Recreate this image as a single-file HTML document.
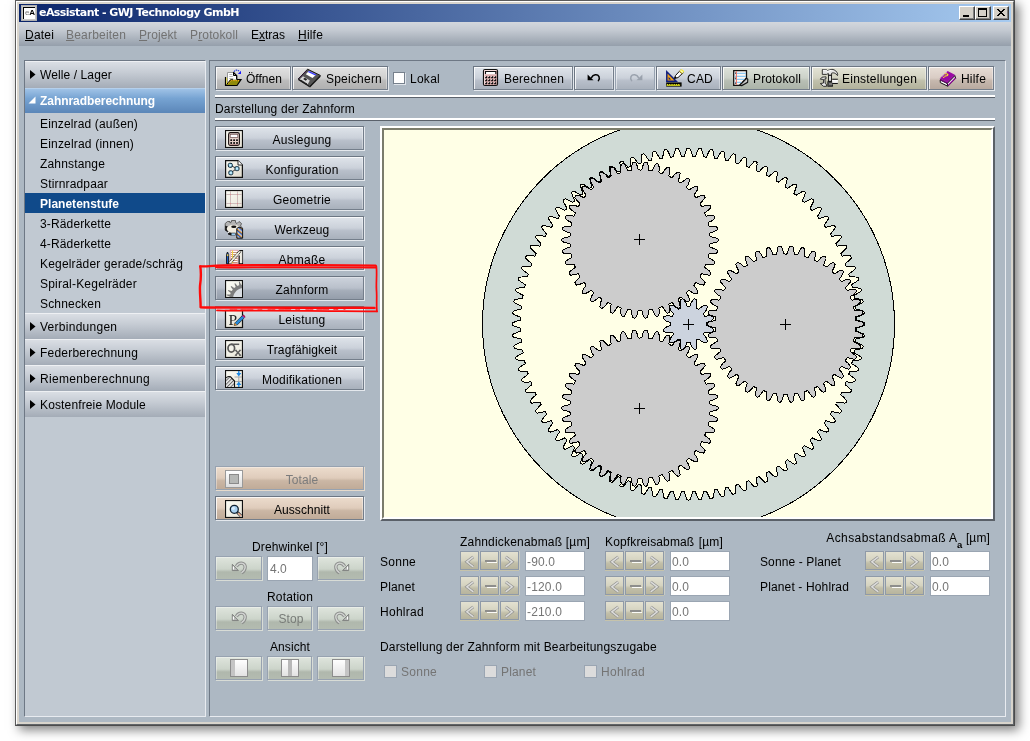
<!DOCTYPE html>
<html lang="de"><head><meta charset="utf-8"><title>eAssistant - GWJ Technology GmbH</title>
<style>
*{box-sizing:border-box;margin:0;padding:0}
html,body{width:1030px;height:741px;overflow:hidden;background:#fff}
#root{position:absolute;left:0;top:0;width:1030px;height:741px;will-change:transform}
body{position:relative;font-family:"Liberation Sans",Arial,sans-serif;font-size:12px;color:#000;line-height:14px;}
.a{position:absolute}
.t{position:absolute;white-space:nowrap;line-height:14px;height:14px}
.dis{color:#727272}
.b{position:absolute;border:1px solid;border-color:#6c7683 #747e8b #747e8b #6c7683;box-shadow:1px 1px 0 #e4e8ed, inset 1px 1px 0 rgba(255,255,255,.8), inset -1px 0 0 rgba(255,255,255,.35)}
.bd{border-color:#97a2b0;box-shadow:1px 1px 0 #d8dcd6, inset 1px 1px 0 rgba(255,255,255,.35)}
.bd.g-blue{box-shadow:1px 1px 0 #dfe4ea, inset 1px 1px 0 rgba(255,255,255,.5)}
.bd.g-beige{box-shadow:1px 1px 0 #e6dacb, inset 1px 1px 0 rgba(255,255,255,.35)}
.g-gray{background:linear-gradient(#e2e2e2,#d0d0d0 50%,#bcbcbc 62%,#b0b0b0)}
.g-blue{background:linear-gradient(#dfe4ea,#cbd1da 50%,#b8bfca 62%,#a9b1bc)}
.g-bluesel{background:linear-gradient(#cdd3dc,#b9c0cb 50%,#a5adb9 62%,#959eab);box-shadow:1px 1px 0 #e4e8ed, inset 1px 1px 0 rgba(255,255,255,.35)}
.g-green{background:linear-gradient(#dfe5dd,#ccd4ca 55%,#b0b8ad 68%,#b3bbb0)}
.g-green2{background:linear-gradient(#dde2da,#ccd2c9 50%,#b8bfb5 62%,#abb3a8)}
.g-yellow{background:linear-gradient(#e3e3d6,#d3d3c2 50%,#c0c0ac 62%,#b2b29b)}
.g-pink{background:linear-gradient(#e7ddd6,#d9ccc4 50%,#c6b8ae 62%,#b8a99f)}
.g-beige{background:linear-gradient(#ecdccd,#dfccbb 50%,#cbb7a5 62%,#c0ab98)}
.g-khaki{background:linear-gradient(#e3e1d1,#d5d3c0 50%,#c2bfa9 65%,#b7b49d)}
.hdr{position:absolute;left:25px;width:180px;height:26px;background:linear-gradient(#dadee4,#c6ccd4 40%,#a4acb7);border-top:1px solid #eef0f3;}
.hdrsel{background:linear-gradient(#9fc2e6,#76a3d2 40%,#5b86b8);border-top:1px solid #b5d0ec;color:#fff;font-weight:bold}
.fld{position:absolute;background:#fff;border:1px solid #9aa5b2;color:#757575;padding:3px 0 0 1px;line-height:14px}
.cb{position:absolute;width:12px;height:12px;background:#fff;border:1px solid #76808c;box-shadow:1px 1px 0 #dfe4ea}
.cbd{position:absolute;width:13px;height:13px;background:#dcdcdc;border:1px solid #9aa5b2}
u{text-decoration:underline;text-underline-offset:1px}
</style></head>
<body>
<div id="root">
<div class="a" style="left:15px;top:0;width:1000px;height:726px;background:#d8d4cc;box-shadow:4px 4px 10px rgba(0,0,0,.5)"></div>
<div class="a" style="left:15px;top:0;width:1000px;height:726px;border:1px solid;border-color:#5a5a5a #4c4c4c #4c4c4c #5a5a5a"></div>
<div class="a" style="left:16px;top:1px;width:998px;height:724px;border:1px solid;border-color:#fff #606468 #606468 #fff"></div>
<div class="a" style="left:19px;top:4px;width:992px;height:18px;background:linear-gradient(90deg,#0a246a,#a6caf0)"></div>
<div class="a" style="left:21px;top:5px;width:16px;height:16px;background:#c8c8c8;border:1px solid #b0b0b0"></div>
<div class="a" style="left:23px;top:7px;width:12px;height:12px;background:#fff;border-left:1px solid #000;border-top:1px solid #000"></div>
<div class="t" style="left:25px;top:7px;font-size:8px;line-height:11px;font-weight:bold;letter-spacing:-0.3px"><span style="color:#777;font-weight:normal">e</span>A</div>
<div class="t" style="left:39px;top:6px;font-family:'DejaVu Sans','Liberation Sans',sans-serif;font-weight:bold;font-size:11px;color:#fff;letter-spacing:-0.55px">eAssistant - GWJ Technology GmbH</div>
<div class="a" style="left:959px;top:6px;width:16px;height:14px;background:#d4d0c8;border:1px solid;border-color:#fff #404040 #404040 #fff;box-shadow:inset -1px -1px 0 #808080"><div class="a" style="left:3px;top:8px;width:6px;height:2px;background:#000"></div></div>
<div class="a" style="left:975px;top:6px;width:16px;height:14px;background:#d4d0c8;border:1px solid;border-color:#fff #404040 #404040 #fff;box-shadow:inset -1px -1px 0 #808080"><div class="a" style="left:2px;top:1px;width:9px;height:9px;border:1px solid #000;border-top-width:2px"></div></div>
<div class="a" style="left:993px;top:6px;width:16px;height:14px;background:#d4d0c8;border:1px solid;border-color:#fff #404040 #404040 #fff;box-shadow:inset -1px -1px 0 #808080"><svg class="a" style="left:3px;top:2px" width="8" height="7"><path d="M0 0L7 7M1 0L8 7M7 0L0 7M8 0L1 7" stroke="#000" stroke-width="1" shape-rendering="crispEdges" fill="none"/></svg></div>
<div class="a" style="left:19px;top:22px;width:992px;height:700px;background:#adb8c3"></div>
<div class="a" style="left:19px;top:22px;width:992px;height:24px;background:linear-gradient(#d3d7dd,#c3c9d1 35%,#959fab)"></div>
<div class="t " style="left:25px;top:28px;letter-spacing:0.20px;"><u>D</u>atei</div>
<div class="t dis" style="left:66px;top:28px;letter-spacing:0.20px;color:#727272"><u>B</u>earbeiten</div>
<div class="t dis" style="left:139px;top:28px;letter-spacing:0.09px;color:#727272"><u>P</u>rojekt</div>
<div class="t dis" style="left:190px;top:28px;letter-spacing:0.15px;color:#727272">P<u>r</u>otokoll</div>
<div class="t " style="left:251px;top:28px;letter-spacing:-0.00px;">E<u>x</u>tras</div>
<div class="t " style="left:298px;top:28px;letter-spacing:0.20px;"><u>H</u>ilfe</div>
<div class="a" style="left:24px;top:60px;width:182px;height:657px;background:#c1c9d2;border:1px solid;border-color:#6e7885 #e8ebf0 #e8ebf0 #6e7885"></div>
<div class="hdr " style="top:61px;height:27px"></div>
<svg class="a" style="left:30px;top:70px" width="6" height="10"><path d="M0 0L5.5 4.5L0 9Z" fill="#000"/></svg>
<div class="t " style="left:40px;top:68px;letter-spacing:0.10px;">Welle / Lager</div>
<div class="hdr hdrsel" style="top:88px;height:25px"></div>
<svg class="a" style="left:28px;top:96px" width="8" height="8"><path d="M7.5 0.5V7.5H0.5Z" fill="#fff"/></svg>
<div class="t " style="left:40px;top:94px;letter-spacing:-0.06px;color:#fff;font-weight:bold">Zahnradberechnung</div>
<div class="t " style="left:40px;top:117px;letter-spacing:0.15px;">Einzelrad (außen)</div>
<div class="t " style="left:40px;top:137px;letter-spacing:0.19px;">Einzelrad (innen)</div>
<div class="t " style="left:40px;top:157px;letter-spacing:0.16px;">Zahnstange</div>
<div class="t " style="left:40px;top:177px;letter-spacing:0.16px;">Stirnradpaar</div>
<div class="a" style="left:25px;top:193px;width:180px;height:20px;background:#104a8a"></div>
<div class="t " style="left:40px;top:197px;letter-spacing:0.02px;color:#fff;font-weight:bold">Planetenstufe</div>
<div class="t " style="left:40px;top:217px;letter-spacing:0.14px;">3-Räderkette</div>
<div class="t " style="left:40px;top:237px;letter-spacing:0.14px;">4-Räderkette</div>
<div class="t " style="left:40px;top:257px;letter-spacing:0.18px;">Kegelräder gerade/schräg</div>
<div class="t " style="left:40px;top:277px;letter-spacing:0.21px;">Spiral-Kegelräder</div>
<div class="t " style="left:40px;top:297px;letter-spacing:0.18px;">Schnecken</div>
<div class="hdr " style="top:313px;height:26px"></div>
<svg class="a" style="left:30px;top:322px" width="6" height="10"><path d="M0 0L5.5 4.5L0 9Z" fill="#000"/></svg>
<div class="t " style="left:40px;top:320px;letter-spacing:0.27px;">Verbindungen</div>
<div class="hdr " style="top:339px;height:26px"></div>
<svg class="a" style="left:30px;top:348px" width="6" height="10"><path d="M0 0L5.5 4.5L0 9Z" fill="#000"/></svg>
<div class="t " style="left:40px;top:346px;letter-spacing:0.22px;">Federberechnung</div>
<div class="hdr " style="top:365px;height:26px"></div>
<svg class="a" style="left:30px;top:374px" width="6" height="10"><path d="M0 0L5.5 4.5L0 9Z" fill="#000"/></svg>
<div class="t " style="left:40px;top:372px;letter-spacing:0.33px;">Riemenberechnung</div>
<div class="hdr " style="top:391px;height:26px"></div>
<svg class="a" style="left:30px;top:400px" width="6" height="10"><path d="M0 0L5.5 4.5L0 9Z" fill="#000"/></svg>
<div class="t " style="left:40px;top:398px;letter-spacing:0.14px;">Kostenfreie Module</div>
<div class="a" style="left:209px;top:60px;width:797px;height:657px;border:1px solid;border-color:#6e7885 #e8ebf0 #e8ebf0 #6e7885"></div>
<div class="b g-gray" style="left:215px;top:66px;width:76px;height:24px;"></div>
<svg class="a" style="left:221px;top:66px" width="24" height="24" viewBox="0 0 24 24"><path d="M6.5 6.500H12.500L15.500 9.500V13.500H9.500L6.500 17z" fill="#fff"/><path d="M6.500 17V6.500H12.300" fill="none" stroke="#9a9a9a" stroke-width="1"/><path d="M8.300 8.500h3M8.300 10.500h3.500M8.300 12.500h4" stroke="#b8b8b8" stroke-width="1"/><path d="M12.300 6.300L15.700 9.700V13.300" fill="none" stroke="#000" stroke-width="1.300"/><path d="M12.500 6.500V9.500H15.500" fill="none" stroke="#000" stroke-width="1"/><path d="M5 19.300L9.300 13.800H20L16 19.300z" fill="#8f8a0a"/><path d="M4.500 11V19.500H16L20 13.600H15.500" fill="none" stroke="#000" stroke-width="1.200"/><path d="M5.600 11.800V18.600" stroke="#e0d44a" stroke-width="1.100"/><path d="M5.600 18.600L9.500 13.800H12" fill="none" stroke="#000" stroke-width="1"/><path d="M7 17.600L10.200 14.600H19" fill="none" stroke="#ffb020" stroke-width="1" stroke-dasharray="1.200 1"/><path d="M13 5.800C14.300 3.600 17 3.600 18.300 5.600" fill="none" stroke="#2038d8" stroke-width="1.100" stroke-dasharray="1.500 .7"/><path d="M20 4.800V8H16.800z" fill="#1a1aff"/></svg>
<div class="t " style="left:246px;top:72px;letter-spacing:-0.00px;">Öffnen</div>
<div class="b g-gray" style="left:292px;top:66px;width:96px;height:24px;"></div>
<svg class="a" style="left:295px;top:66px" width="30" height="24" viewBox="0 0 30 24"><path d="M3.200 13L12.600 3.200L25.300 9.400L14.600 20.400z" fill="#555" stroke="#1a1a1a" stroke-width="1"/><path d="M14.600 20.400L25.300 9.400L25.600 10.800L15 21.500z" fill="#111"/><path d="M3.200 13L14.600 20.400L15 21.500L3.400 14.200z" fill="#111"/><path d="M13.900 4.900L21.400 8.500L17.500 12L10.800 8.300z" fill="#fff"/><path d="M13.900 4.900L21.400 8.500L20.300 9.500L12.900 5.900z" fill="#3a3aff"/><path d="M4.800 13.200L8 10.200L14.800 14.500L12.800 18.300z" fill="#d8d8d8"/><path d="M8.200 13L9.800 11.800L12.200 13.300L10.800 14.800z" fill="#222"/><path d="M6.300 14.300l6 3.800" stroke="#111" stroke-width="1" stroke-dasharray="1.500 1"/><path d="M4 12.500L12.400 4" stroke="#501060" stroke-width=".8" stroke-dasharray="1 1"/></svg>
<div class="t " style="left:326px;top:72px;letter-spacing:0.22px;">Speichern</div>
<div class="cb" style="left:393px;top:72px"></div>
<div class="t " style="left:410px;top:72px;letter-spacing:0.26px;">Lokal</div>
<div class="b g-blue" style="left:473px;top:66px;width:100px;height:24px;"></div>
<svg class="a" style="left:479px;top:66px" width="24" height="24" viewBox="0 0 24 24"><rect x="4.500" y="3.500" width="14" height="16" rx="1.500" fill="#dcaeae" stroke="#111" stroke-width="1.200"/><path d="M5.500 18.500V4.500H17.500" fill="none" stroke="#f4dada" stroke-width="1"/><rect x="6.500" y="5.500" width="10" height="2.800" fill="#fff"/><path d="M6.500 8V5.500H16.800V8" fill="none" stroke="#111" stroke-width="1.100"/><rect x="6.2" y="10.2" width="2" height="2" rx=".5" fill="#0a0a0a"/><rect x="6.0" y="10.0" width=".9" height=".9" fill="#f4e4e4"/><rect x="9.2" y="10.2" width="2" height="2" rx=".5" fill="#0a0a0a"/><rect x="9.0" y="10.0" width=".9" height=".9" fill="#f4e4e4"/><rect x="12.2" y="10.2" width="2" height="2" rx=".5" fill="#0a0a0a"/><rect x="12.0" y="10.0" width=".9" height=".9" fill="#f4e4e4"/><rect x="15.2" y="10.2" width="2" height="2" rx=".5" fill="#0a0a0a"/><rect x="15.0" y="10.0" width=".9" height=".9" fill="#f4e4e4"/><rect x="6.2" y="13.2" width="2" height="2" rx=".5" fill="#0a0a0a"/><rect x="6.0" y="13.0" width=".9" height=".9" fill="#f4e4e4"/><rect x="9.2" y="13.2" width="2" height="2" rx=".5" fill="#0a0a0a"/><rect x="9.0" y="13.0" width=".9" height=".9" fill="#f4e4e4"/><rect x="12.2" y="13.2" width="2" height="2" rx=".5" fill="#0a0a0a"/><rect x="12.0" y="13.0" width=".9" height=".9" fill="#f4e4e4"/><rect x="15.2" y="13.2" width="2" height="2" rx=".5" fill="#0a0a0a"/><rect x="15.0" y="13.0" width=".9" height=".9" fill="#f4e4e4"/><rect x="6.2" y="16.2" width="2" height="2" rx=".5" fill="#0a0a0a"/><rect x="6.0" y="16.0" width=".9" height=".9" fill="#f4e4e4"/><rect x="9.2" y="16.2" width="2" height="2" rx=".5" fill="#0a0a0a"/><rect x="9.0" y="16.0" width=".9" height=".9" fill="#f4e4e4"/><rect x="12.2" y="16.2" width="2" height="2" rx=".5" fill="#0a0a0a"/><rect x="12.0" y="16.0" width=".9" height=".9" fill="#f4e4e4"/><rect x="15.2" y="16.2" width="2" height="2" rx=".5" fill="#0a0a0a"/><rect x="15.0" y="16.0" width=".9" height=".9" fill="#f4e4e4"/></svg>
<div class="t " style="left:504px;top:72px;letter-spacing:0.22px;">Berechnen</div>
<div class="b g-blue" style="left:574px;top:66px;width:40px;height:24px;"></div>
<svg class="a" style="left:587px;top:73px" width="14" height="10" viewBox="0 0 14 10"><g><path d="M4.500 4.600C6 1.400 10.500 .8 12 3.600C12.600 5 12.300 6.400 11.400 7.600" fill="none" stroke="#000" stroke-width="1.500" stroke-linecap="round"/><path d="M.6 1.500L.6 7.200L6.500 7.200z" fill="#000"/></g></svg>
<div class="b g-blue bd" style="left:615px;top:66px;width:40px;height:24px;"></div>
<svg class="a" style="left:629px;top:73px" width="14" height="10" viewBox="0 0 14 10"><g transform="translate(14,0) scale(-1,1)"><path d="M4.500 4.600C6 1.400 10.500 .8 12 3.600C12.600 5 12.300 6.400 11.400 7.600" fill="none" stroke="#9aa2ad" stroke-width="1.500" stroke-linecap="round"/><path d="M.6 1.500L.6 7.200L6.500 7.200z" fill="#9aa2ad"/></g></svg>
<div class="b g-blue" style="left:656px;top:66px;width:65px;height:24px;"></div>
<svg class="a" style="left:662px;top:66px" width="26" height="24" viewBox="0 0 26 24"><path d="M4.800 5.800V15.300H14.200z" fill="#f2a212" stroke="#101f80" stroke-width="1.500" stroke-linejoin="miter"/><path d="M6.600 11V13.500H9.100z" fill="#101f80"/><rect x="4.200" y="16.400" width="15.400" height="4.200" fill="#000"/><path d="M4.600 18.900l.9-1.200.9 1.200.9-1.200.9 1.200.9-1.200.9 1.200.9-1.200.9 1.200.9-1.200.9 1.200.9-1.200.9 1.200.9-1.200.9 1.200.9-1.200V19.800H4.600z" fill="#ffff20"/><path d="M12.300 12.600L13.600 9.400L18.500 4.200L21.300 6.600L16 11.600z" fill="#fff" stroke="#111" stroke-width="1"/><path d="M12.300 12.600L13.200 10.300L14.800 11.700z" fill="#000"/><path d="M17.300 5.500L19.500 3L22.300 5.300L20.100 7.800z" fill="#f4ec30"/><path d="M18.400 4.300L21.200 6.600" stroke="#fff" stroke-width="1"/><path d="M17.300 5.500L20.100 7.800" stroke="#705030" stroke-width=".8"/></svg>
<div class="t " style="left:687px;top:72px;letter-spacing:0.22px;">CAD</div>
<div class="b g-green2" style="left:722px;top:66px;width:88px;height:24px;"></div>
<svg class="a" style="left:729px;top:66px" width="24" height="24" viewBox="0 0 24 24"><path d="M4.700 4.700H17.500V12L10.700 19.300H4.700z" fill="#fbf7f4" stroke="#111" stroke-width="1.300"/><path d="M5.500 7.400H17M5.500 10.400H17M5.500 13.400H15.500M5.500 16.400H12.500" stroke="#8cc8f2" stroke-width="1.100"/><path d="M7.400 5.300V18.700" stroke="#f07868" stroke-width="1.100"/><path d="M6.500 6.600v1M6.500 11.700v1M6.500 16.700v1" stroke="#222" stroke-width="1"/><path d="M10.700 19.300L17.600 12.300L18.800 13.200L18.600 16.300L12.800 19.600z" fill="#c8c8c8" stroke="#111" stroke-width="1.100"/></svg>
<div class="t " style="left:753px;top:72px;letter-spacing:0.15px;">Protokoll</div>
<div class="b g-yellow" style="left:811px;top:66px;width:116px;height:24px;"></div>
<svg class="a" style="left:817px;top:66px" width="26" height="24" viewBox="0 0 26 24"><path d="M5.300 3.600H9L10.500 4.500L15 3.300C18 3.600 20 5.500 20.700 8.200L20.500 9.600L18.800 7.800C17.500 6.800 16 6.600 14.600 7.200V9.300H11.400V7.500L9.500 8.400H5.300z" fill="#e4e4e4" stroke="#222" stroke-width=".9"/><path d="M6 4.300H8.800L10.400 5.300L14.500 4.300" fill="none" stroke="#fff" stroke-width="1"/><rect x="11.600" y="9.300" width="2.800" height="6" fill="#f4f4f4" stroke="#111" stroke-width="1"/><rect x="10.400" y="15.300" width="5.500" height="5.400" fill="#111"/><path d="M11.500 16.500h1v1h-1zM13.500 16.500h1v1h-1zM12.500 17.500h1v1h-1zM11.500 18.500h1v1h-1zM13.500 18.500h1v1h-1zM14.500 17.500h1v1h-1z" fill="#ddd"/><path d="M3.300 13.200L5 11.200L9 10.800V12.800H7.800L8.200 17.500L9.400 18.300L9.600 20.300H6.500L3.300 17.600L6.500 17V13.400z" fill="#e8e8e8" stroke="#222" stroke-width=".9"/><rect x="15.200" y="13.200" width="5.600" height="4.300" fill="#e8e8e8"/><path d="M15.200 14.800h5.600" stroke="#fff" stroke-width="1.400"/><path d="M15.200 13.200h5.600M15.200 17.500h5.600" stroke="#111" stroke-width="1.100"/></svg>
<div class="t " style="left:842px;top:72px;letter-spacing:0.23px;">Einstellungen</div>
<div class="b g-pink" style="left:928px;top:66px;width:66px;height:24px;"></div>
<svg class="a" style="left:936px;top:66px" width="24" height="24" viewBox="0 0 24 24"><path d="M4.200 14L11.300 17.500L11.700 20.200L4.300 16.600z" fill="#fff" stroke="#111" stroke-width="1"/><path d="M11.300 17.300L18.800 9.600L19.700 12.400L11.900 20.200z" fill="#e8ece8" stroke="#111" stroke-width="1"/><path d="M11.800 19.700L19.400 12" stroke="#a010a8" stroke-width="1.100"/><path d="M3.900 12.300L11.700 4.900L18.800 8.700L11.300 16.200z" fill="#9a0aa4"/><path d="M3.900 12.300L4 14.200L11.300 17.600L18.900 9.800L18.800 8.700L11.300 16.200z" fill="#70057a"/><path d="M4.500 12.100L11.500 5.500" stroke="#d8b8dc" stroke-width="1" stroke-dasharray="1 1"/><text x="10.200" y="13.600" font-family="Liberation Sans" font-weight="bold" font-size="8" fill="#f8f020" transform="rotate(22 12 11) skewX(-18)">?</text></svg>
<div class="t " style="left:961px;top:72px;letter-spacing:0.20px;">Hilfe</div>
<div class="a" style="left:215px;top:95px;width:780px;height:2px;background:#fff"></div>
<div class="a" style="left:215px;top:97px;width:780px;height:1px;background:#5b626c"></div>
<div class="t " style="left:215px;top:102px;letter-spacing:0.16px;">Darstellung der Zahnform</div>
<div class="a" style="left:215px;top:118px;width:780px;height:2px;background:#fff"></div>
<div class="a" style="left:215px;top:120px;width:780px;height:1px;background:#5b626c"></div>
<div class="b g-blue" style="left:215px;top:126px;width:149px;height:24px;"></div>
<svg class="a" style="left:225px;top:130px" width="18" height="18" viewBox="0 0 18 18"><defs><linearGradient id="bg225_130" x1="0" y1="0" x2="1" y2="1"><stop offset="0" stop-color="#fbfbf4"/><stop offset="1" stop-color="#e4e0d4"/></linearGradient></defs><rect x=".5" y=".5" width="17" height="17" fill="url(#bg225_130)" stroke="#111" stroke-width="1.200"/><rect x="3.600" y="2.600" width="10.800" height="12.800" rx="1.800" fill="#e4cfc8" stroke="#1a1010" stroke-width="1.100"/><rect x="5.200" y="4.300" width="7.600" height="3.200" fill="#fff" stroke="#6a4a4a" stroke-width=".7"/><rect x="5.3" y="9.2" width="1.800" height="1.800" rx=".6" fill="#0a0a0a"/><rect x="8.2" y="9.2" width="1.800" height="1.800" rx=".6" fill="#0a0a0a"/><rect x="11.1" y="9.2" width="1.800" height="1.800" rx=".6" fill="#0a0a0a"/><rect x="5.3" y="12.1" width="1.800" height="1.800" rx=".6" fill="#0a0a0a"/><rect x="8.2" y="12.1" width="1.800" height="1.800" rx=".6" fill="#0a0a0a"/><rect x="11.1" y="12.1" width="1.800" height="1.800" rx=".6" fill="#0a0a0a"/><path d="M4.600 14.600h8.800" stroke="#c09090" stroke-width=".8"/></svg>
<div class="t " style="left:202px;width:200px;text-align:center;top:133px;letter-spacing:0.25px;">Auslegung</div>
<div class="b g-blue" style="left:215px;top:156px;width:149px;height:24px;"></div>
<svg class="a" style="left:225px;top:160px" width="18" height="18" viewBox="0 0 18 18"><defs><linearGradient id="kg" x1="0" y1="0" x2="1" y2="1"><stop offset="0" stop-color="#fbfbf4"/><stop offset="1" stop-color="#dedacd"/></linearGradient></defs><path d="M.6 .6H13L17.400 5V17.400H.6z" fill="url(#kg)" stroke="#111" stroke-width="1.200"/><path d="M13 .6V5H17.400" fill="#fff" stroke="#111" stroke-width=".9"/><path d="M5.300 5.300L12 8.600L5.800 12.600" fill="none" stroke="#222" stroke-width=".9"/><rect x="3.3" y="3.3" width="4" height="4" rx="1.300" fill="#9fdcf4" stroke="#102838" stroke-width="1"/><rect x="4.7" y="4.7" width="1.200" height="1.200" fill="#e8f8ff"/><rect x="10.0" y="6.6" width="4" height="4" rx="1.300" fill="#9fdcf4" stroke="#102838" stroke-width="1"/><rect x="11.4" y="8.0" width="1.200" height="1.200" fill="#e8f8ff"/><rect x="3.8" y="10.8" width="4" height="4" rx="1.300" fill="#9fdcf4" stroke="#102838" stroke-width="1"/><rect x="5.2" y="12.2" width="1.200" height="1.200" fill="#e8f8ff"/></svg>
<div class="t " style="left:202px;width:200px;text-align:center;top:163px;letter-spacing:0.18px;">Konfiguration</div>
<div class="b g-blue" style="left:215px;top:186px;width:149px;height:24px;"></div>
<svg class="a" style="left:225px;top:190px" width="18" height="18" viewBox="0 0 18 18"><defs><linearGradient id="bg225_190" x1="0" y1="0" x2="1" y2="1"><stop offset="0" stop-color="#fbfbf4"/><stop offset="1" stop-color="#e9e5da"/></linearGradient></defs><rect x=".5" y=".5" width="17" height="17" fill="url(#bg225_190)" stroke="#111" stroke-width="1.200"/><path d="M5.500 1V17M12.500 1V17M1 4.500H17M1 13.500H17" stroke="#cdbcbc" stroke-width="1"/><path d="M5 4.500h1M12 4.500h1M5 13.500h1M12 13.500h1" stroke="#e09090" stroke-width="1"/></svg>
<div class="t " style="left:202px;width:200px;text-align:center;top:193px;letter-spacing:0.22px;">Geometrie</div>
<div class="b g-blue" style="left:215px;top:216px;width:149px;height:24px;"></div>
<svg class="a" style="left:222px;top:217px" width="24" height="24" viewBox="0 0 24 24"><path d="M3.200 8.500V6.500L5.500 4.500H8V6L9.500 5V3.500H13.500V5.500L15 6.500L17 4.500L19.500 6.500L18.500 9L20 10.500V13H3.200z" fill="#b4b4b4" stroke="#555" stroke-width=".9"/><path d="M3.200 8.500V13.500L6 15.500V17.500L9 18.500H13.500V13z" fill="#111"/><ellipse cx="11.500" cy="11.800" rx="6.800" ry="4" fill="#f1ede2"/><ellipse cx="11.800" cy="9.800" rx="2.600" ry="1.200" fill="#111"/><rect x="9.500" y="16.300" width="3.500" height="2" fill="#9fcdf0"/><rect x="5.800" y="14.500" width="1.600" height="1.600" fill="#e8e8e8"/><defs><pattern id="wz" width="3.200" height="3.200" patternUnits="userSpaceOnUse" patternTransform="rotate(-50)"><rect width="3.200" height="3.200" fill="#1f4fae"/><rect width="1.100" height="3.200" fill="#f09418"/><rect x="1.100" width=".9" height="3.200" fill="#fff"/></pattern></defs><path d="M14.800 11.500L17 10L20.600 11.500V21.200H14.800z" fill="url(#wz)" stroke="#111" stroke-width="1"/></svg>
<div class="t " style="left:202px;width:200px;text-align:center;top:223px;letter-spacing:0.12px;">Werkzeug</div>
<div class="b g-blue" style="left:215px;top:246px;width:149px;height:24px;"></div>
<svg class="a" style="left:222px;top:246px" width="24" height="24" viewBox="0 0 24 24"><rect x="8.300" y="4.300" width="7.700" height="13.400" fill="#fff" stroke="#e0a0a8" stroke-width=".9"/><path d="M9 6.500h6.500M9 8.500h6.500M9 10.500h6.500M9 12.500h6.500M9 14.500h6.500M9 16.500h6.500" stroke="#b87858" stroke-width=".8"/><path d="M10.500 4.500V17.500" stroke="#f4d040" stroke-width="1.100"/><path d="M17.200 4.500H20.500V17.800H17.200V9.500" fill="#f0eee4" stroke="#111" stroke-width="1.100"/><path d="M19.600 6h1M19.600 8h1M19.600 10h1M19.600 12h1M19.600 14h1M19.600 16h1" stroke="#fff" stroke-width=".9"/><path d="M5.500 17.800L17.200 4.600L19 5.800L8.800 17.800z" fill="#eeeadb" stroke="#111" stroke-width="1" stroke-dasharray="1 .8"/><path d="M4.500 17.800V8.500L5.500 6L6.600 8.500V17.800z" fill="#1c5cc4" stroke="#111" stroke-width=".9"/><path d="M4.900 8.300h1.400v1.800h-1.400z" fill="#f4d050"/></svg>
<div class="t " style="left:202px;width:200px;text-align:center;top:253px;letter-spacing:0.27px;">Abmaße</div>
<div class="b g-bluesel" style="left:215px;top:276px;width:149px;height:24px;"></div>
<svg class="a" style="left:225px;top:280px" width="18" height="18" viewBox="0 0 18 18"><defs><linearGradient id="bg225_280" x1="0" y1="0" x2="1" y2="1"><stop offset="0" stop-color="#fbfbf4"/><stop offset="1" stop-color="#eeeee2"/></linearGradient></defs><rect x=".5" y=".5" width="17" height="17" fill="url(#bg225_280)" stroke="#111" stroke-width="1.200"/><clipPath id="zfc"><rect x="1.100" y="1.100" width="15.800" height="15.800"/></clipPath><g clip-path="url(#zfc)"><circle cx="18.5" cy="18.5" r="12" fill="#d9dde2"/><path d="M4.9 21.4 L4.7 20.5 L1.2 20.1 L1.1 19.3 L4.6 18.5 L4.6 17.5 L4.7 16.6 L1.4 15.3 L1.6 14.5 L5.2 14.6 L5.4 13.7 L5.8 12.9 L2.9 10.7 L3.3 10.0 L6.7 11.1 L7.3 10.3 L7.8 9.6 L5.7 6.7 L6.3 6.1 L9.2 8.1 L9.9 7.5 L10.7 7.0 L9.4 3.6 L10.2 3.2 L12.5 6.0 L13.3 5.6 L14.2 5.3 L13.9 1.7 L14.7 1.5 L16.1 4.8 L17.0 4.7 L18.0 4.6 L18.7 1.1 L19.5 1.1 L20.0 4.7 L20.9 4.8 L21.8 5.0 L23.5 1.8 L24.3 2.1 L23.8 5.6 L23.7 9.5 L22.7 9.0 L21.7 8.6 L20.7 8.3 L19.6 8.2 L18.5 8.1 L17.4 8.2 L16.3 8.3 L15.3 8.6 L14.3 9.0 L13.3 9.5 L12.4 10.1 L11.5 10.8 L10.8 11.5 L10.1 12.4 L9.5 13.3 L9.0 14.3 L8.6 15.3 L8.3 16.3 L8.2 17.4 L8.1 18.5 L8.2 19.6 L8.3 20.7 L8.6 21.7Z" fill="#7d7d7d"/></g></svg>
<div class="t " style="left:202px;width:200px;text-align:center;top:283px;letter-spacing:0.21px;">Zahnform</div>
<div class="b g-blue" style="left:215px;top:306px;width:149px;height:24px;"></div>
<svg class="a" style="left:222px;top:307px" width="24" height="24" viewBox="0 0 24 24"><defs><linearGradient id="lg1" x1="0" y1="0" x2="1" y2="1"><stop offset="0" stop-color="#fbfbf4"/><stop offset="1" stop-color="#dcd8cc"/></linearGradient></defs><rect x="3.500" y="3.500" width="17" height="17" fill="url(#lg1)" stroke="#111" stroke-width="1.200"/><text x="6.600" y="17.800" font-family="Liberation Serif" font-size="15.500" fill="#222">P</text><path d="M12.300 18.400L13 15.800L20.300 8.600L22.600 10.600L15.200 18z" fill="#2488d8" stroke="#111" stroke-width=".9" stroke-dasharray="1.100 .5"/><path d="M12.300 18.400L12.900 16L14.900 17.900z" fill="#f09020"/><path d="M20 8.900L21.300 7.800L23.300 9.600L22.300 10.900z" fill="#c020a0"/><path d="M21 7.800l2.200 1.900" stroke="#a01010" stroke-width="1"/></svg>
<div class="t " style="left:202px;width:200px;text-align:center;top:313px;letter-spacing:0.20px;">Leistung</div>
<div class="b g-blue" style="left:215px;top:336px;width:149px;height:24px;"></div>
<svg class="a" style="left:225px;top:340px" width="18" height="18" viewBox="0 0 18 18"><defs><linearGradient id="bg225_340" x1="0" y1="0" x2="1" y2="1"><stop offset="0" stop-color="#fbfbf4"/><stop offset="1" stop-color="#e6e4d8"/></linearGradient></defs><rect x=".5" y=".5" width="17" height="17" fill="url(#bg225_340)" stroke="#111" stroke-width="1.200"/><ellipse cx="6.300" cy="8.300" rx="3.300" ry="3.900" fill="none" stroke="#585858" stroke-width="1.700"/><path d="M5.800 4.300H14.200" stroke="#585858" stroke-width="1.500"/><path d="M10.600 10.300L15.400 15.300M15.200 10.300L10.600 15.300" stroke="#606060" stroke-width="1.500"/><path d="M9.800 10.300h2.200M14 10.300h2.200M9.800 15.400h2.200M14 15.400h2.200" stroke="#606060" stroke-width=".9"/></svg>
<div class="t " style="left:202px;width:200px;text-align:center;top:343px;letter-spacing:0.13px;">Tragfähigkeit</div>
<div class="b g-blue" style="left:215px;top:366px;width:149px;height:24px;"></div>
<svg class="a" style="left:225px;top:370px" width="18" height="18" viewBox="0 0 18 18"><defs><linearGradient id="bg225_370" x1="0" y1="0" x2="1" y2="1"><stop offset="0" stop-color="#fbfbf4"/><stop offset="1" stop-color="#e8e6da"/></linearGradient></defs><rect x=".5" y=".5" width="17" height="17" fill="url(#bg225_370)" stroke="#111" stroke-width="1.200"/><defs><pattern id="hat" width="2.600" height="2.600" patternUnits="userSpaceOnUse" patternTransform="rotate(-45)"><rect width="2.600" height="2.600" fill="#ececec"/><rect width="2.600" height="1" fill="#6a6a6a"/></pattern></defs><path d="M9.500 7H17M9.500 11.500H17M13.800 6.500V12" stroke="#a8a8a8" stroke-width="1"/><path d="M1 17V8.500C1.800 7 4 6.300 5.500 6.800L9.500 11V17z" fill="url(#hat)"/><path d="M1.200 8C2 6.800 4 6.300 5.500 6.800L9.500 11V17" fill="none" stroke="#111" stroke-width="1.100"/><path d="M13.800 1V4M13.800 15V17" stroke="#1a86e4" stroke-width="1.300"/><path d="M11.300 3h5L13.800 6.500zM11.300 15h5L13.800 11.500z" fill="#1a86e4"/></svg>
<div class="t " style="left:202px;width:200px;text-align:center;top:373px;letter-spacing:0.19px;">Modifikationen</div>
<div class="b g-beige bd" style="left:215px;top:466px;width:149px;height:24px;"></div>
<svg class="a" style="left:225px;top:470px" width="18" height="18" viewBox="0 0 18 18"><defs><linearGradient id="tg" x1="0" y1="0" x2="0" y2="1"><stop offset="0" stop-color="#fff"/><stop offset="1" stop-color="#dcdcdc"/></linearGradient></defs><rect x=".5" y=".5" width="17" height="17" fill="url(#tg)" stroke="#9a9a9a"/><rect x="4.500" y="4.500" width="9" height="9" fill="#b6b8b6" stroke="#8a8a8a"/></svg>
<div class="t " style="left:202px;width:200px;text-align:center;top:473px;letter-spacing:0.11px;color:#7c7c7c">Totale</div>
<div class="b g-beige" style="left:215px;top:496px;width:149px;height:24px;"></div>
<svg class="a" style="left:225px;top:500px" width="18" height="18" viewBox="0 0 18 18"><defs><linearGradient id="bg225_500" x1="0" y1="0" x2="1" y2="1"><stop offset="0" stop-color="#fbfbf4"/><stop offset="1" stop-color="#e8e4d8"/></linearGradient></defs><rect x=".5" y=".5" width="17" height="17" fill="url(#bg225_500)" stroke="#111" stroke-width="1.200"/><circle cx="9.300" cy="9.300" r="4" fill="#a8d0f0" stroke="#102030" stroke-width="1.300"/><circle cx="8.300" cy="8.300" r="1.600" fill="#d8ecfc"/><path d="M12.300 12.300L15.800 15.800" stroke="#102030" stroke-width="3"/><path d="M13 13L15.900 15.900" stroke="#f4c8a8" stroke-width="1.700"/><path d="M13.300 12.800l2.600 2.600" stroke="#e05030" stroke-width=".7" stroke-dasharray=".8 .6"/></svg>
<div class="t " style="left:202px;width:200px;text-align:center;top:503px;letter-spacing:0.06px;">Ausschnitt</div>
<div class="t " style="left:190px;width:200px;text-align:center;top:540px;letter-spacing:0.13px;">Drehwinkel [°]</div>
<div class="t " style="left:190px;width:200px;text-align:center;top:590px;letter-spacing:0.16px;">Rotation</div>
<div class="t " style="left:190px;width:200px;text-align:center;top:640px;letter-spacing:0.09px;">Ansicht</div>
<div class="b g-green bd" style="left:215px;top:556px;width:47px;height:24px;"></div>
<svg class="a" style="left:230px;top:560px" width="18" height="16" viewBox="0 0 18 16"><g><path d="M6.300 6.300C8.200 3.300 11.200 2.500 13.200 3.600C16.300 5.300 15.800 10.300 11.400 12.900" fill="none" stroke="#8c8e8c" stroke-width="3.300"/><path d="M6.300 6.300C8.200 3.300 11.200 2.500 13.200 3.600C16.300 5.300 15.800 10.300 11.400 12.900" fill="none" stroke="#d2d4d2" stroke-width="1.400"/><path d="M2.300 4.300V10.600H8.400z" fill="#b8bab8" stroke="#7e807e" stroke-width="1"/><path d="M3.400 6.500V9.500" stroke="#fff" stroke-width="1.100"/></g></svg>
<div class="b g-green bd" style="left:317px;top:556px;width:47px;height:24px;"></div>
<svg class="a" style="left:333px;top:560px" width="18" height="16" viewBox="0 0 18 16"><g transform="translate(18,0) scale(-1,1)"><path d="M6.300 6.300C8.200 3.300 11.200 2.500 13.200 3.600C16.300 5.300 15.800 10.300 11.400 12.900" fill="none" stroke="#8c8e8c" stroke-width="3.300"/><path d="M6.300 6.300C8.200 3.300 11.200 2.500 13.200 3.600C16.300 5.300 15.800 10.300 11.400 12.900" fill="none" stroke="#d2d4d2" stroke-width="1.400"/><path d="M2.300 4.300V10.600H8.400z" fill="#b8bab8" stroke="#7e807e" stroke-width="1"/><path d="M3.400 6.500V9.500" stroke="#fff" stroke-width="1.100"/></g></svg>
<div class="b g-green bd" style="left:215px;top:606px;width:47px;height:24px;"></div>
<svg class="a" style="left:230px;top:610px" width="18" height="16" viewBox="0 0 18 16"><g><path d="M6.300 6.300C8.200 3.300 11.200 2.500 13.200 3.600C16.300 5.300 15.800 10.300 11.400 12.900" fill="none" stroke="#8c8e8c" stroke-width="3.300"/><path d="M6.300 6.300C8.200 3.300 11.200 2.500 13.200 3.600C16.300 5.300 15.800 10.300 11.400 12.900" fill="none" stroke="#d2d4d2" stroke-width="1.400"/><path d="M2.300 4.300V10.600H8.400z" fill="#b8bab8" stroke="#7e807e" stroke-width="1"/><path d="M3.400 6.500V9.500" stroke="#fff" stroke-width="1.100"/></g></svg>
<div class="b g-green bd" style="left:317px;top:606px;width:47px;height:24px;"></div>
<svg class="a" style="left:333px;top:610px" width="18" height="16" viewBox="0 0 18 16"><g transform="translate(18,0) scale(-1,1)"><path d="M6.300 6.300C8.200 3.300 11.200 2.500 13.200 3.600C16.300 5.300 15.800 10.300 11.400 12.900" fill="none" stroke="#8c8e8c" stroke-width="3.300"/><path d="M6.300 6.300C8.200 3.300 11.200 2.500 13.200 3.600C16.300 5.300 15.800 10.300 11.400 12.900" fill="none" stroke="#d2d4d2" stroke-width="1.400"/><path d="M2.300 4.300V10.600H8.400z" fill="#b8bab8" stroke="#7e807e" stroke-width="1"/><path d="M3.400 6.500V9.500" stroke="#fff" stroke-width="1.100"/></g></svg>
<div class="fld" style="left:267px;top:556px;width:46px;height:25px;padding:5px 0 0 2px">4.0</div>
<div class="b g-green bd" style="left:267px;top:606px;width:45px;height:24px;"></div>
<div class="t " style="left:191px;width:200px;text-align:center;top:612px;letter-spacing:0.08px;color:#787c78">Stop</div>
<div class="b g-green bd" style="left:215px;top:656px;width:47px;height:24px;"></div>
<svg class="a" style="left:230px;top:659px" width="18" height="18" viewBox="0 0 18 18"><defs><linearGradient id="vgl" x1="0" y1="0" x2="0" y2="1"><stop offset="0" stop-color="#fff"/><stop offset="1" stop-color="#e2e2e2"/></linearGradient></defs><rect x=".5" y=".5" width="17" height="17" fill="url(#vgl)" stroke="#8c8c8c"/><rect x="1" y="1" width="4" height="16" fill="#c4c4c4"/></svg>
<div class="b g-green bd" style="left:267px;top:656px;width:45px;height:24px;"></div>
<svg class="a" style="left:281px;top:659px" width="18" height="18" viewBox="0 0 18 18"><defs><linearGradient id="vgm" x1="0" y1="0" x2="0" y2="1"><stop offset="0" stop-color="#fff"/><stop offset="1" stop-color="#e2e2e2"/></linearGradient></defs><rect x=".5" y=".5" width="17" height="17" fill="url(#vgm)" stroke="#8c8c8c"/><rect x="7" y="1" width="4" height="16" fill="#b8b8b8"/></svg>
<div class="b g-green bd" style="left:317px;top:656px;width:47px;height:24px;"></div>
<svg class="a" style="left:332px;top:659px" width="18" height="18" viewBox="0 0 18 18"><defs><linearGradient id="vgr" x1="0" y1="0" x2="0" y2="1"><stop offset="0" stop-color="#fff"/><stop offset="1" stop-color="#e2e2e2"/></linearGradient></defs><rect x=".5" y=".5" width="17" height="17" fill="url(#vgr)" stroke="#8c8c8c"/><rect x="13" y="1" width="4" height="16" fill="#c4c4c4"/></svg>
<div class="a" style="left:380px;top:126px;width:615px;height:395px;background:#fff;border:2px solid;border-color:#fff #5a6068 #5a6068 #fff"></div>
<div class="a" style="left:382px;top:128px;width:611px;height:391px;background:#ffffe6;border:2px solid;border-color:#7b7c6c #fff #fff #7b7c6c"></div>
<svg class="a" style="left:384px;top:130px" width="607" height="387" viewBox="0 0 607 387"><g transform="translate(304.5,194.1)" stroke="#000" stroke-width="1" stroke-linejoin="round" shape-rendering="crispEdges"><circle r="206" fill="#d0dbd6"/><path d="M167.8,-5.3L167.8,-4.8 167.8,-4.4 167.8,-4.2 168.4,-3.9 169.4,-3.6 170.4,-3.3 171.4,-3.0 172.4,-2.7 173.5,-2.3 174.5,-1.9 175.5,-1.5 176.0,-0.7 176.0,0.7 175.5,1.5 174.5,1.9 173.5,2.3 172.4,2.7 171.4,3.0 170.4,3.3 169.4,3.6 168.4,3.9 167.8,4.2 167.8,4.4 167.8,4.8 167.8,5.3 167.8,5.7 167.8,6.2 167.8,6.6 167.8,6.8 168.3,7.1 169.3,7.5 170.3,7.8 171.2,8.2 172.2,8.6 173.2,9.1 174.2,9.5 175.2,10.0 175.7,10.9 175.6,12.2 175.0,13.0 174.0,13.3 172.9,13.6 171.9,13.9 170.9,14.2 169.8,14.5 168.8,14.7 167.7,14.9 167.2,15.1 167.2,15.4 167.2,15.7 167.1,16.2 167.1,16.7 167.0,17.2 167.0,17.5 167.0,17.8 167.4,18.1 168.4,18.5 169.4,18.9 170.3,19.4 171.3,19.9 172.3,20.4 173.2,20.9 174.2,21.4 174.6,22.3 174.4,23.6 173.8,24.4 172.7,24.7 171.7,24.9 170.6,25.1 169.6,25.3 168.5,25.5 167.5,25.7 166.4,25.8 165.9,26.0 165.8,26.3 165.8,26.6 165.7,27.1 165.6,27.6 165.5,28.1 165.5,28.4 165.4,28.7 165.9,29.0 166.8,29.5 167.8,30.0 168.7,30.5 169.6,31.0 170.6,31.6 171.5,32.2 172.4,32.8 172.7,33.7 172.5,35.0 171.8,35.7 170.7,35.9 169.7,36.1 168.6,36.2 167.5,36.4 166.5,36.5 165.4,36.6 164.4,36.7 163.8,36.8 163.8,37.1 163.7,37.4 163.6,37.9 163.5,38.4 163.4,38.8 163.3,39.2 163.2,39.4 163.6,39.8 164.5,40.3 165.5,40.9 166.4,41.5 167.2,42.1 168.1,42.7 169.0,43.3 169.9,44.0 170.2,44.9 169.8,46.2 169.1,46.9 168.0,47.0 166.9,47.1 165.9,47.2 164.8,47.3 163.7,47.3 162.7,47.3 161.6,47.3 161.1,47.5 161.0,47.7 160.9,48.1 160.7,48.5 160.6,49.0 160.5,49.4 160.4,49.8 160.3,50.0 160.7,50.4 161.6,51.0 162.4,51.6 163.3,52.3 164.1,52.9 165.0,53.6 165.8,54.3 166.7,55.0 166.9,56.0 166.4,57.2 165.7,57.8 164.6,57.9 163.5,57.9 162.4,57.9 161.4,57.9 160.3,57.9 159.2,57.9 158.2,57.8 157.6,57.9 157.5,58.1 157.4,58.5 157.2,58.9 157.1,59.4 156.9,59.8 156.8,60.2 156.7,60.4 157.0,60.8 157.9,61.5 158.7,62.1 159.5,62.8 160.3,63.5 161.1,64.3 161.9,65.0 162.7,65.8 162.8,66.7 162.3,68.0 161.6,68.6 160.5,68.5 159.4,68.5 158.3,68.4 157.2,68.4 156.2,68.3 155.1,68.2 154.1,68.0 153.5,68.1 153.4,68.3 153.2,68.6 153.0,69.1 152.8,69.5 152.6,69.9 152.5,70.3 152.4,70.5 152.7,71.0 153.5,71.7 154.3,72.4 155.1,73.1 155.8,73.9 156.6,74.7 157.3,75.5 158.1,76.3 158.1,77.3 157.6,78.4 156.7,79.0 155.6,78.9 154.6,78.8 153.5,78.6 152.4,78.5 151.4,78.3 150.3,78.2 149.3,78.0 148.7,78.0 148.6,78.2 148.4,78.5 148.2,78.9 148.0,79.4 147.7,79.8 147.6,80.1 147.4,80.3 147.8,80.8 148.5,81.6 149.2,82.3 150.0,83.1 150.7,83.9 151.4,84.7 152.1,85.6 152.7,86.4 152.7,87.4 152.1,88.6 151.2,89.1 150.1,88.9 149.1,88.7 148.0,88.5 147.0,88.3 145.9,88.1 144.9,87.8 143.9,87.6 143.3,87.5 143.1,87.7 143.0,88.1 142.7,88.5 142.5,88.9 142.2,89.3 142.0,89.6 141.9,89.8 142.2,90.3 142.8,91.1 143.5,91.9 144.2,92.7 144.9,93.6 145.5,94.5 146.1,95.3 146.8,96.2 146.7,97.2 146.0,98.3 145.1,98.8 144.0,98.5 142.9,98.3 141.9,98.0 140.9,97.7 139.8,97.4 138.8,97.1 137.8,96.8 137.2,96.7 137.1,96.9 136.9,97.2 136.6,97.6 136.3,98.0 136.1,98.4 135.8,98.7 135.7,98.9 135.9,99.4 136.6,100.2 137.2,101.1 137.8,102.0 138.4,102.9 139.0,103.8 139.6,104.7 140.1,105.6 140.0,106.6 139.2,107.7 138.3,108.0 137.3,107.7 136.2,107.4 135.2,107.1 134.2,106.7 133.2,106.4 132.2,106.0 131.2,105.6 130.6,105.5 130.5,105.7 130.2,106.0 129.9,106.3 129.6,106.7 129.3,107.1 129.1,107.3 128.9,107.5 129.1,108.1 129.7,109.0 130.3,109.9 130.9,110.8 131.4,111.7 131.9,112.6 132.4,113.6 132.9,114.6 132.8,115.6 131.9,116.5 130.9,116.8 129.9,116.5 128.9,116.1 127.9,115.7 126.9,115.3 125.9,114.8 125.0,114.4 124.0,113.9 123.5,113.8 123.3,114.0 123.0,114.3 122.7,114.6 122.4,114.9 122.1,115.3 121.8,115.6 121.6,115.7 121.8,116.3 122.3,117.2 122.8,118.1 123.3,119.1 123.8,120.1 124.3,121.0 124.7,122.0 125.2,123.0 124.9,124.0 124.0,124.9 123.0,125.2 122.0,124.7 121.0,124.3 120.1,123.8 119.1,123.3 118.1,122.8 117.2,122.3 116.3,121.8 115.7,121.6 115.6,121.8 115.3,122.1 114.9,122.4 114.6,122.7 114.3,123.0 114.0,123.3 113.8,123.5 113.9,124.0 114.4,125.0 114.8,125.9 115.3,126.9 115.7,127.9 116.1,128.9 116.5,129.9 116.8,130.9 116.5,131.9 115.6,132.8 114.6,132.9 113.6,132.4 112.6,131.9 111.7,131.4 110.8,130.9 109.9,130.3 109.0,129.7 108.1,129.1 107.5,128.9 107.3,129.1 107.1,129.3 106.7,129.6 106.3,129.9 106.0,130.2 105.7,130.5 105.5,130.6 105.6,131.2 106.0,132.2 106.4,133.2 106.7,134.2 107.1,135.2 107.4,136.2 107.7,137.3 108.0,138.3 107.7,139.2 106.6,140.0 105.6,140.1 104.7,139.6 103.8,139.0 102.9,138.4 102.0,137.8 101.1,137.2 100.2,136.6 99.4,135.9 98.9,135.7 98.7,135.8 98.4,136.1 98.0,136.3 97.6,136.6 97.2,136.9 96.9,137.1 96.7,137.2 96.8,137.8 97.1,138.8 97.4,139.8 97.7,140.9 98.0,141.9 98.3,142.9 98.5,144.0 98.8,145.1 98.3,146.0 97.2,146.7 96.2,146.8 95.3,146.1 94.5,145.5 93.6,144.9 92.7,144.2 91.9,143.5 91.1,142.8 90.3,142.2 89.8,141.9 89.6,142.0 89.3,142.2 88.9,142.5 88.5,142.7 88.1,143.0 87.7,143.1 87.5,143.3 87.6,143.9 87.8,144.9 88.1,145.9 88.3,147.0 88.5,148.0 88.7,149.1 88.9,150.1 89.1,151.2 88.6,152.1 87.4,152.7 86.4,152.7 85.6,152.1 84.7,151.4 83.9,150.7 83.1,150.0 82.3,149.2 81.6,148.5 80.8,147.8 80.3,147.4 80.1,147.6 79.8,147.7 79.4,148.0 78.9,148.2 78.5,148.4 78.2,148.6 78.0,148.7 78.0,149.3 78.2,150.3 78.3,151.4 78.5,152.4 78.6,153.5 78.8,154.6 78.9,155.6 79.0,156.7 78.4,157.6 77.3,158.1 76.3,158.1 75.5,157.3 74.7,156.6 73.9,155.8 73.1,155.1 72.4,154.3 71.7,153.5 71.0,152.7 70.5,152.4 70.3,152.5 69.9,152.6 69.5,152.8 69.1,153.0 68.6,153.2 68.3,153.4 68.1,153.5 68.0,154.1 68.2,155.1 68.3,156.2 68.4,157.2 68.4,158.3 68.5,159.4 68.5,160.5 68.6,161.6 68.0,162.3 66.7,162.8 65.8,162.7 65.0,161.9 64.3,161.1 63.5,160.3 62.8,159.5 62.1,158.7 61.5,157.9 60.8,157.0 60.4,156.7 60.2,156.8 59.8,156.9 59.4,157.1 58.9,157.2 58.5,157.4 58.1,157.5 57.9,157.6 57.8,158.2 57.9,159.2 57.9,160.3 57.9,161.4 57.9,162.4 57.9,163.5 57.9,164.6 57.8,165.7 57.2,166.4 56.0,166.9 55.0,166.7 54.3,165.8 53.6,165.0 52.9,164.1 52.3,163.3 51.6,162.4 51.0,161.6 50.4,160.7 50.0,160.3 49.8,160.4 49.4,160.5 49.0,160.6 48.5,160.7 48.1,160.9 47.7,161.0 47.5,161.1 47.3,161.6 47.3,162.7 47.3,163.7 47.3,164.8 47.2,165.9 47.1,166.9 47.0,168.0 46.9,169.1 46.2,169.8 44.9,170.2 44.0,169.9 43.3,169.0 42.7,168.1 42.1,167.2 41.5,166.4 40.9,165.5 40.3,164.5 39.8,163.6 39.4,163.2 39.2,163.3 38.8,163.4 38.4,163.5 37.9,163.6 37.4,163.7 37.1,163.8 36.8,163.8 36.7,164.4 36.6,165.4 36.5,166.5 36.4,167.5 36.2,168.6 36.1,169.7 35.9,170.7 35.7,171.8 35.0,172.5 33.7,172.7 32.8,172.4 32.2,171.5 31.6,170.6 31.0,169.6 30.5,168.7 30.0,167.8 29.5,166.8 29.0,165.9 28.7,165.4 28.4,165.5 28.1,165.5 27.6,165.6 27.1,165.7 26.6,165.8 26.3,165.8 26.0,165.9 25.8,166.4 25.7,167.5 25.5,168.5 25.3,169.6 25.1,170.6 24.9,171.7 24.7,172.7 24.4,173.8 23.6,174.4 22.3,174.6 21.4,174.2 20.9,173.2 20.4,172.3 19.9,171.3 19.4,170.3 18.9,169.4 18.5,168.4 18.1,167.4 17.8,167.0 17.5,167.0 17.2,167.0 16.7,167.1 16.2,167.1 15.7,167.2 15.4,167.2 15.1,167.2 14.9,167.7 14.7,168.8 14.5,169.8 14.2,170.9 13.9,171.9 13.6,172.9 13.3,174.0 13.0,175.0 12.2,175.6 10.9,175.7 10.0,175.2 9.5,174.2 9.1,173.2 8.6,172.2 8.2,171.2 7.8,170.3 7.5,169.3 7.1,168.3 6.8,167.8 6.6,167.8 6.2,167.8 5.7,167.8 5.3,167.8 4.8,167.8 4.4,167.8 4.2,167.8 3.9,168.4 3.6,169.4 3.3,170.4 3.0,171.4 2.7,172.4 2.3,173.5 1.9,174.5 1.5,175.5 0.7,176.0 -0.7,176.0 -1.5,175.5 -1.9,174.5 -2.3,173.5 -2.7,172.4 -3.0,171.4 -3.3,170.4 -3.6,169.4 -3.9,168.4 -4.2,167.8 -4.4,167.8 -4.8,167.8 -5.3,167.8 -5.7,167.8 -6.2,167.8 -6.6,167.8 -6.8,167.8 -7.1,168.3 -7.5,169.3 -7.8,170.3 -8.2,171.2 -8.6,172.2 -9.1,173.2 -9.5,174.2 -10.0,175.2 -10.9,175.7 -12.2,175.6 -13.0,175.0 -13.3,174.0 -13.6,172.9 -13.9,171.9 -14.2,170.9 -14.5,169.8 -14.7,168.8 -14.9,167.7 -15.1,167.2 -15.4,167.2 -15.7,167.2 -16.2,167.1 -16.7,167.1 -17.2,167.0 -17.5,167.0 -17.8,167.0 -18.1,167.4 -18.5,168.4 -18.9,169.4 -19.4,170.3 -19.9,171.3 -20.4,172.3 -20.9,173.2 -21.4,174.2 -22.3,174.6 -23.6,174.4 -24.4,173.8 -24.7,172.7 -24.9,171.7 -25.1,170.6 -25.3,169.6 -25.5,168.5 -25.7,167.5 -25.8,166.4 -26.0,165.9 -26.3,165.8 -26.6,165.8 -27.1,165.7 -27.6,165.6 -28.1,165.5 -28.4,165.5 -28.7,165.4 -29.0,165.9 -29.5,166.8 -30.0,167.8 -30.5,168.7 -31.0,169.6 -31.6,170.6 -32.2,171.5 -32.8,172.4 -33.7,172.7 -35.0,172.5 -35.7,171.8 -35.9,170.7 -36.1,169.7 -36.2,168.6 -36.4,167.5 -36.5,166.5 -36.6,165.4 -36.7,164.4 -36.8,163.8 -37.1,163.8 -37.4,163.7 -37.9,163.6 -38.4,163.5 -38.8,163.4 -39.2,163.3 -39.4,163.2 -39.8,163.6 -40.3,164.5 -40.9,165.5 -41.5,166.4 -42.1,167.2 -42.7,168.1 -43.3,169.0 -44.0,169.9 -44.9,170.2 -46.2,169.8 -46.9,169.1 -47.0,168.0 -47.1,166.9 -47.2,165.9 -47.3,164.8 -47.3,163.7 -47.3,162.7 -47.3,161.6 -47.5,161.1 -47.7,161.0 -48.1,160.9 -48.5,160.7 -49.0,160.6 -49.4,160.5 -49.8,160.4 -50.0,160.3 -50.4,160.7 -51.0,161.6 -51.6,162.4 -52.3,163.3 -52.9,164.1 -53.6,165.0 -54.3,165.8 -55.0,166.7 -56.0,166.9 -57.2,166.4 -57.8,165.7 -57.9,164.6 -57.9,163.5 -57.9,162.4 -57.9,161.4 -57.9,160.3 -57.9,159.2 -57.8,158.2 -57.9,157.6 -58.1,157.5 -58.5,157.4 -58.9,157.2 -59.4,157.1 -59.8,156.9 -60.2,156.8 -60.4,156.7 -60.8,157.0 -61.5,157.9 -62.1,158.7 -62.8,159.5 -63.5,160.3 -64.3,161.1 -65.0,161.9 -65.8,162.7 -66.7,162.8 -68.0,162.3 -68.6,161.6 -68.5,160.5 -68.5,159.4 -68.4,158.3 -68.4,157.2 -68.3,156.2 -68.2,155.1 -68.0,154.1 -68.1,153.5 -68.3,153.4 -68.6,153.2 -69.1,153.0 -69.5,152.8 -69.9,152.6 -70.3,152.5 -70.5,152.4 -71.0,152.7 -71.7,153.5 -72.4,154.3 -73.1,155.1 -73.9,155.8 -74.7,156.6 -75.5,157.3 -76.3,158.1 -77.3,158.1 -78.4,157.6 -79.0,156.7 -78.9,155.6 -78.8,154.6 -78.6,153.5 -78.5,152.4 -78.3,151.4 -78.2,150.3 -78.0,149.3 -78.0,148.7 -78.2,148.6 -78.5,148.4 -78.9,148.2 -79.4,148.0 -79.8,147.7 -80.1,147.6 -80.3,147.4 -80.8,147.8 -81.6,148.5 -82.3,149.2 -83.1,150.0 -83.9,150.7 -84.7,151.4 -85.6,152.1 -86.4,152.7 -87.4,152.7 -88.6,152.1 -89.1,151.2 -88.9,150.1 -88.7,149.1 -88.5,148.0 -88.3,147.0 -88.1,145.9 -87.8,144.9 -87.6,143.9 -87.5,143.3 -87.7,143.1 -88.1,143.0 -88.5,142.7 -88.9,142.5 -89.3,142.2 -89.6,142.0 -89.8,141.9 -90.3,142.2 -91.1,142.8 -91.9,143.5 -92.7,144.2 -93.6,144.9 -94.5,145.5 -95.3,146.1 -96.2,146.8 -97.2,146.7 -98.3,146.0 -98.8,145.1 -98.5,144.0 -98.3,142.9 -98.0,141.9 -97.7,140.9 -97.4,139.8 -97.1,138.8 -96.8,137.8 -96.7,137.2 -96.9,137.1 -97.2,136.9 -97.6,136.6 -98.0,136.3 -98.4,136.1 -98.7,135.8 -98.9,135.7 -99.4,135.9 -100.2,136.6 -101.1,137.2 -102.0,137.8 -102.9,138.4 -103.8,139.0 -104.7,139.6 -105.6,140.1 -106.6,140.0 -107.7,139.2 -108.0,138.3 -107.7,137.3 -107.4,136.2 -107.1,135.2 -106.7,134.2 -106.4,133.2 -106.0,132.2 -105.6,131.2 -105.5,130.6 -105.7,130.5 -106.0,130.2 -106.3,129.9 -106.7,129.6 -107.1,129.3 -107.3,129.1 -107.5,128.9 -108.1,129.1 -109.0,129.7 -109.9,130.3 -110.8,130.9 -111.7,131.4 -112.6,131.9 -113.6,132.4 -114.6,132.9 -115.6,132.8 -116.5,131.9 -116.8,130.9 -116.5,129.9 -116.1,128.9 -115.7,127.9 -115.3,126.9 -114.8,125.9 -114.4,125.0 -113.9,124.0 -113.8,123.5 -114.0,123.3 -114.3,123.0 -114.6,122.7 -114.9,122.4 -115.3,122.1 -115.6,121.8 -115.7,121.6 -116.3,121.8 -117.2,122.3 -118.1,122.8 -119.1,123.3 -120.1,123.8 -121.0,124.3 -122.0,124.7 -123.0,125.2 -124.0,124.9 -124.9,124.0 -125.2,123.0 -124.7,122.0 -124.3,121.0 -123.8,120.1 -123.3,119.1 -122.8,118.1 -122.3,117.2 -121.8,116.3 -121.6,115.7 -121.8,115.6 -122.1,115.3 -122.4,114.9 -122.7,114.6 -123.0,114.3 -123.3,114.0 -123.5,113.8 -124.0,113.9 -125.0,114.4 -125.9,114.8 -126.9,115.3 -127.9,115.7 -128.9,116.1 -129.9,116.5 -130.9,116.8 -131.9,116.5 -132.8,115.6 -132.9,114.6 -132.4,113.6 -131.9,112.6 -131.4,111.7 -130.9,110.8 -130.3,109.9 -129.7,109.0 -129.1,108.1 -128.9,107.5 -129.1,107.3 -129.3,107.1 -129.6,106.7 -129.9,106.3 -130.2,106.0 -130.5,105.7 -130.6,105.5 -131.2,105.6 -132.2,106.0 -133.2,106.4 -134.2,106.7 -135.2,107.1 -136.2,107.4 -137.3,107.7 -138.3,108.0 -139.2,107.7 -140.0,106.6 -140.1,105.6 -139.6,104.7 -139.0,103.8 -138.4,102.9 -137.8,102.0 -137.2,101.1 -136.6,100.2 -135.9,99.4 -135.7,98.9 -135.8,98.7 -136.1,98.4 -136.3,98.0 -136.6,97.6 -136.9,97.2 -137.1,96.9 -137.2,96.7 -137.8,96.8 -138.8,97.1 -139.8,97.4 -140.9,97.7 -141.9,98.0 -142.9,98.3 -144.0,98.5 -145.1,98.8 -146.0,98.3 -146.7,97.2 -146.8,96.2 -146.1,95.3 -145.5,94.5 -144.9,93.6 -144.2,92.7 -143.5,91.9 -142.8,91.1 -142.2,90.3 -141.9,89.8 -142.0,89.6 -142.2,89.3 -142.5,88.9 -142.7,88.5 -143.0,88.1 -143.1,87.7 -143.3,87.5 -143.9,87.6 -144.9,87.8 -145.9,88.1 -147.0,88.3 -148.0,88.5 -149.1,88.7 -150.1,88.9 -151.2,89.1 -152.1,88.6 -152.7,87.4 -152.7,86.4 -152.1,85.6 -151.4,84.7 -150.7,83.9 -150.0,83.1 -149.2,82.3 -148.5,81.6 -147.8,80.8 -147.4,80.3 -147.6,80.1 -147.7,79.8 -148.0,79.4 -148.2,78.9 -148.4,78.5 -148.6,78.2 -148.7,78.0 -149.3,78.0 -150.3,78.2 -151.4,78.3 -152.4,78.5 -153.5,78.6 -154.6,78.8 -155.6,78.9 -156.7,79.0 -157.6,78.4 -158.1,77.3 -158.1,76.3 -157.3,75.5 -156.6,74.7 -155.8,73.9 -155.1,73.1 -154.3,72.4 -153.5,71.7 -152.7,71.0 -152.4,70.5 -152.5,70.3 -152.6,69.9 -152.8,69.5 -153.0,69.1 -153.2,68.6 -153.4,68.3 -153.5,68.1 -154.1,68.0 -155.1,68.2 -156.2,68.3 -157.2,68.4 -158.3,68.4 -159.4,68.5 -160.5,68.5 -161.6,68.6 -162.3,68.0 -162.8,66.7 -162.7,65.8 -161.9,65.0 -161.1,64.3 -160.3,63.5 -159.5,62.8 -158.7,62.1 -157.9,61.5 -157.0,60.8 -156.7,60.4 -156.8,60.2 -156.9,59.8 -157.1,59.4 -157.2,58.9 -157.4,58.5 -157.5,58.1 -157.6,57.9 -158.2,57.8 -159.2,57.9 -160.3,57.9 -161.4,57.9 -162.4,57.9 -163.5,57.9 -164.6,57.9 -165.7,57.8 -166.4,57.2 -166.9,56.0 -166.7,55.0 -165.8,54.3 -165.0,53.6 -164.1,52.9 -163.3,52.3 -162.4,51.6 -161.6,51.0 -160.7,50.4 -160.3,50.0 -160.4,49.8 -160.5,49.4 -160.6,49.0 -160.7,48.5 -160.9,48.1 -161.0,47.7 -161.1,47.5 -161.6,47.3 -162.7,47.3 -163.7,47.3 -164.8,47.3 -165.9,47.2 -166.9,47.1 -168.0,47.0 -169.1,46.9 -169.8,46.2 -170.2,44.9 -169.9,44.0 -169.0,43.3 -168.1,42.7 -167.2,42.1 -166.4,41.5 -165.5,40.9 -164.5,40.3 -163.6,39.8 -163.2,39.4 -163.3,39.2 -163.4,38.8 -163.5,38.4 -163.6,37.9 -163.7,37.4 -163.8,37.1 -163.8,36.8 -164.4,36.7 -165.4,36.6 -166.5,36.5 -167.5,36.4 -168.6,36.2 -169.7,36.1 -170.7,35.9 -171.8,35.7 -172.5,35.0 -172.7,33.7 -172.4,32.8 -171.5,32.2 -170.6,31.6 -169.6,31.0 -168.7,30.5 -167.8,30.0 -166.8,29.5 -165.9,29.0 -165.4,28.7 -165.5,28.4 -165.5,28.1 -165.6,27.6 -165.7,27.1 -165.8,26.6 -165.8,26.3 -165.9,26.0 -166.4,25.8 -167.5,25.7 -168.5,25.5 -169.6,25.3 -170.6,25.1 -171.7,24.9 -172.7,24.7 -173.8,24.4 -174.4,23.6 -174.6,22.3 -174.2,21.4 -173.2,20.9 -172.3,20.4 -171.3,19.9 -170.3,19.4 -169.4,18.9 -168.4,18.5 -167.4,18.1 -167.0,17.8 -167.0,17.5 -167.0,17.2 -167.1,16.7 -167.1,16.2 -167.2,15.7 -167.2,15.4 -167.2,15.1 -167.7,14.9 -168.8,14.7 -169.8,14.5 -170.9,14.2 -171.9,13.9 -172.9,13.6 -174.0,13.3 -175.0,13.0 -175.6,12.2 -175.7,10.9 -175.2,10.0 -174.2,9.5 -173.2,9.1 -172.2,8.6 -171.2,8.2 -170.3,7.8 -169.3,7.5 -168.3,7.1 -167.8,6.8 -167.8,6.6 -167.8,6.2 -167.8,5.7 -167.8,5.3 -167.8,4.8 -167.8,4.4 -167.8,4.2 -168.4,3.9 -169.4,3.6 -170.4,3.3 -171.4,3.0 -172.4,2.7 -173.5,2.3 -174.5,1.9 -175.5,1.5 -176.0,0.7 -176.0,-0.7 -175.5,-1.5 -174.5,-1.9 -173.5,-2.3 -172.4,-2.7 -171.4,-3.0 -170.4,-3.3 -169.4,-3.6 -168.4,-3.9 -167.8,-4.2 -167.8,-4.4 -167.8,-4.8 -167.8,-5.3 -167.8,-5.7 -167.8,-6.2 -167.8,-6.6 -167.8,-6.8 -168.3,-7.1 -169.3,-7.5 -170.3,-7.8 -171.2,-8.2 -172.2,-8.6 -173.2,-9.1 -174.2,-9.5 -175.2,-10.0 -175.7,-10.9 -175.6,-12.2 -175.0,-13.0 -174.0,-13.3 -172.9,-13.6 -171.9,-13.9 -170.9,-14.2 -169.8,-14.5 -168.8,-14.7 -167.7,-14.9 -167.2,-15.1 -167.2,-15.4 -167.2,-15.7 -167.1,-16.2 -167.1,-16.7 -167.0,-17.2 -167.0,-17.5 -167.0,-17.8 -167.4,-18.1 -168.4,-18.5 -169.4,-18.9 -170.3,-19.4 -171.3,-19.9 -172.3,-20.4 -173.2,-20.9 -174.2,-21.4 -174.6,-22.3 -174.4,-23.6 -173.8,-24.4 -172.7,-24.7 -171.7,-24.9 -170.6,-25.1 -169.6,-25.3 -168.5,-25.5 -167.5,-25.7 -166.4,-25.8 -165.9,-26.0 -165.8,-26.3 -165.8,-26.6 -165.7,-27.1 -165.6,-27.6 -165.5,-28.1 -165.5,-28.4 -165.4,-28.7 -165.9,-29.0 -166.8,-29.5 -167.8,-30.0 -168.7,-30.5 -169.6,-31.0 -170.6,-31.6 -171.5,-32.2 -172.4,-32.8 -172.7,-33.7 -172.5,-35.0 -171.8,-35.7 -170.7,-35.9 -169.7,-36.1 -168.6,-36.2 -167.5,-36.4 -166.5,-36.5 -165.4,-36.6 -164.4,-36.7 -163.8,-36.8 -163.8,-37.1 -163.7,-37.4 -163.6,-37.9 -163.5,-38.4 -163.4,-38.8 -163.3,-39.2 -163.2,-39.4 -163.6,-39.8 -164.5,-40.3 -165.5,-40.9 -166.4,-41.5 -167.2,-42.1 -168.1,-42.7 -169.0,-43.3 -169.9,-44.0 -170.2,-44.9 -169.8,-46.2 -169.1,-46.9 -168.0,-47.0 -166.9,-47.1 -165.9,-47.2 -164.8,-47.3 -163.7,-47.3 -162.7,-47.3 -161.6,-47.3 -161.1,-47.5 -161.0,-47.7 -160.9,-48.1 -160.7,-48.5 -160.6,-49.0 -160.5,-49.4 -160.4,-49.8 -160.3,-50.0 -160.7,-50.4 -161.6,-51.0 -162.4,-51.6 -163.3,-52.3 -164.1,-52.9 -165.0,-53.6 -165.8,-54.3 -166.7,-55.0 -166.9,-56.0 -166.4,-57.2 -165.7,-57.8 -164.6,-57.9 -163.5,-57.9 -162.4,-57.9 -161.4,-57.9 -160.3,-57.9 -159.2,-57.9 -158.2,-57.8 -157.6,-57.9 -157.5,-58.1 -157.4,-58.5 -157.2,-58.9 -157.1,-59.4 -156.9,-59.8 -156.8,-60.2 -156.7,-60.4 -157.0,-60.8 -157.9,-61.5 -158.7,-62.1 -159.5,-62.8 -160.3,-63.5 -161.1,-64.3 -161.9,-65.0 -162.7,-65.8 -162.8,-66.7 -162.3,-68.0 -161.6,-68.6 -160.5,-68.5 -159.4,-68.5 -158.3,-68.4 -157.2,-68.4 -156.2,-68.3 -155.1,-68.2 -154.1,-68.0 -153.5,-68.1 -153.4,-68.3 -153.2,-68.6 -153.0,-69.1 -152.8,-69.5 -152.6,-69.9 -152.5,-70.3 -152.4,-70.5 -152.7,-71.0 -153.5,-71.7 -154.3,-72.4 -155.1,-73.1 -155.8,-73.9 -156.6,-74.7 -157.3,-75.5 -158.1,-76.3 -158.1,-77.3 -157.6,-78.4 -156.7,-79.0 -155.6,-78.9 -154.6,-78.8 -153.5,-78.6 -152.4,-78.5 -151.4,-78.3 -150.3,-78.2 -149.3,-78.0 -148.7,-78.0 -148.6,-78.2 -148.4,-78.5 -148.2,-78.9 -148.0,-79.4 -147.7,-79.8 -147.6,-80.1 -147.4,-80.3 -147.8,-80.8 -148.5,-81.6 -149.2,-82.3 -150.0,-83.1 -150.7,-83.9 -151.4,-84.7 -152.1,-85.6 -152.7,-86.4 -152.7,-87.4 -152.1,-88.6 -151.2,-89.1 -150.1,-88.9 -149.1,-88.7 -148.0,-88.5 -147.0,-88.3 -145.9,-88.1 -144.9,-87.8 -143.9,-87.6 -143.3,-87.5 -143.1,-87.7 -143.0,-88.1 -142.7,-88.5 -142.5,-88.9 -142.2,-89.3 -142.0,-89.6 -141.9,-89.8 -142.2,-90.3 -142.8,-91.1 -143.5,-91.9 -144.2,-92.7 -144.9,-93.6 -145.5,-94.5 -146.1,-95.3 -146.8,-96.2 -146.7,-97.2 -146.0,-98.3 -145.1,-98.8 -144.0,-98.5 -142.9,-98.3 -141.9,-98.0 -140.9,-97.7 -139.8,-97.4 -138.8,-97.1 -137.8,-96.8 -137.2,-96.7 -137.1,-96.9 -136.9,-97.2 -136.6,-97.6 -136.3,-98.0 -136.1,-98.4 -135.8,-98.7 -135.7,-98.9 -135.9,-99.4 -136.6,-100.2 -137.2,-101.1 -137.8,-102.0 -138.4,-102.9 -139.0,-103.8 -139.6,-104.7 -140.1,-105.6 -140.0,-106.6 -139.2,-107.7 -138.3,-108.0 -137.3,-107.7 -136.2,-107.4 -135.2,-107.1 -134.2,-106.7 -133.2,-106.4 -132.2,-106.0 -131.2,-105.6 -130.6,-105.5 -130.5,-105.7 -130.2,-106.0 -129.9,-106.3 -129.6,-106.7 -129.3,-107.1 -129.1,-107.3 -128.9,-107.5 -129.1,-108.1 -129.7,-109.0 -130.3,-109.9 -130.9,-110.8 -131.4,-111.7 -131.9,-112.6 -132.4,-113.6 -132.9,-114.6 -132.8,-115.6 -131.9,-116.5 -130.9,-116.8 -129.9,-116.5 -128.9,-116.1 -127.9,-115.7 -126.9,-115.3 -125.9,-114.8 -125.0,-114.4 -124.0,-113.9 -123.5,-113.8 -123.3,-114.0 -123.0,-114.3 -122.7,-114.6 -122.4,-114.9 -122.1,-115.3 -121.8,-115.6 -121.6,-115.7 -121.8,-116.3 -122.3,-117.2 -122.8,-118.1 -123.3,-119.1 -123.8,-120.1 -124.3,-121.0 -124.7,-122.0 -125.2,-123.0 -124.9,-124.0 -124.0,-124.9 -123.0,-125.2 -122.0,-124.7 -121.0,-124.3 -120.1,-123.8 -119.1,-123.3 -118.1,-122.8 -117.2,-122.3 -116.3,-121.8 -115.7,-121.6 -115.6,-121.8 -115.3,-122.1 -114.9,-122.4 -114.6,-122.7 -114.3,-123.0 -114.0,-123.3 -113.8,-123.5 -113.9,-124.0 -114.4,-125.0 -114.8,-125.9 -115.3,-126.9 -115.7,-127.9 -116.1,-128.9 -116.5,-129.9 -116.8,-130.9 -116.5,-131.9 -115.6,-132.8 -114.6,-132.9 -113.6,-132.4 -112.6,-131.9 -111.7,-131.4 -110.8,-130.9 -109.9,-130.3 -109.0,-129.7 -108.1,-129.1 -107.5,-128.9 -107.3,-129.1 -107.1,-129.3 -106.7,-129.6 -106.3,-129.9 -106.0,-130.2 -105.7,-130.5 -105.5,-130.6 -105.6,-131.2 -106.0,-132.2 -106.4,-133.2 -106.7,-134.2 -107.1,-135.2 -107.4,-136.2 -107.7,-137.3 -108.0,-138.3 -107.7,-139.2 -106.6,-140.0 -105.6,-140.1 -104.7,-139.6 -103.8,-139.0 -102.9,-138.4 -102.0,-137.8 -101.1,-137.2 -100.2,-136.6 -99.4,-135.9 -98.9,-135.7 -98.7,-135.8 -98.4,-136.1 -98.0,-136.3 -97.6,-136.6 -97.2,-136.9 -96.9,-137.1 -96.7,-137.2 -96.8,-137.8 -97.1,-138.8 -97.4,-139.8 -97.7,-140.9 -98.0,-141.9 -98.3,-142.9 -98.5,-144.0 -98.8,-145.1 -98.3,-146.0 -97.2,-146.7 -96.2,-146.8 -95.3,-146.1 -94.5,-145.5 -93.6,-144.9 -92.7,-144.2 -91.9,-143.5 -91.1,-142.8 -90.3,-142.2 -89.8,-141.9 -89.6,-142.0 -89.3,-142.2 -88.9,-142.5 -88.5,-142.7 -88.1,-143.0 -87.7,-143.1 -87.5,-143.3 -87.6,-143.9 -87.8,-144.9 -88.1,-145.9 -88.3,-147.0 -88.5,-148.0 -88.7,-149.1 -88.9,-150.1 -89.1,-151.2 -88.6,-152.1 -87.4,-152.7 -86.4,-152.7 -85.6,-152.1 -84.7,-151.4 -83.9,-150.7 -83.1,-150.0 -82.3,-149.2 -81.6,-148.5 -80.8,-147.8 -80.3,-147.4 -80.1,-147.6 -79.8,-147.7 -79.4,-148.0 -78.9,-148.2 -78.5,-148.4 -78.2,-148.6 -78.0,-148.7 -78.0,-149.3 -78.2,-150.3 -78.3,-151.4 -78.5,-152.4 -78.6,-153.5 -78.8,-154.6 -78.9,-155.6 -79.0,-156.7 -78.4,-157.6 -77.3,-158.1 -76.3,-158.1 -75.5,-157.3 -74.7,-156.6 -73.9,-155.8 -73.1,-155.1 -72.4,-154.3 -71.7,-153.5 -71.0,-152.7 -70.5,-152.4 -70.3,-152.5 -69.9,-152.6 -69.5,-152.8 -69.1,-153.0 -68.6,-153.2 -68.3,-153.4 -68.1,-153.5 -68.0,-154.1 -68.2,-155.1 -68.3,-156.2 -68.4,-157.2 -68.4,-158.3 -68.5,-159.4 -68.5,-160.5 -68.6,-161.6 -68.0,-162.3 -66.7,-162.8 -65.8,-162.7 -65.0,-161.9 -64.3,-161.1 -63.5,-160.3 -62.8,-159.5 -62.1,-158.7 -61.5,-157.9 -60.8,-157.0 -60.4,-156.7 -60.2,-156.8 -59.8,-156.9 -59.4,-157.1 -58.9,-157.2 -58.5,-157.4 -58.1,-157.5 -57.9,-157.6 -57.8,-158.2 -57.9,-159.2 -57.9,-160.3 -57.9,-161.4 -57.9,-162.4 -57.9,-163.5 -57.9,-164.6 -57.8,-165.7 -57.2,-166.4 -56.0,-166.9 -55.0,-166.7 -54.3,-165.8 -53.6,-165.0 -52.9,-164.1 -52.3,-163.3 -51.6,-162.4 -51.0,-161.6 -50.4,-160.7 -50.0,-160.3 -49.8,-160.4 -49.4,-160.5 -49.0,-160.6 -48.5,-160.7 -48.1,-160.9 -47.7,-161.0 -47.5,-161.1 -47.3,-161.6 -47.3,-162.7 -47.3,-163.7 -47.3,-164.8 -47.2,-165.9 -47.1,-166.9 -47.0,-168.0 -46.9,-169.1 -46.2,-169.8 -44.9,-170.2 -44.0,-169.9 -43.3,-169.0 -42.7,-168.1 -42.1,-167.2 -41.5,-166.4 -40.9,-165.5 -40.3,-164.5 -39.8,-163.6 -39.4,-163.2 -39.2,-163.3 -38.8,-163.4 -38.4,-163.5 -37.9,-163.6 -37.4,-163.7 -37.1,-163.8 -36.8,-163.8 -36.7,-164.4 -36.6,-165.4 -36.5,-166.5 -36.4,-167.5 -36.2,-168.6 -36.1,-169.7 -35.9,-170.7 -35.7,-171.8 -35.0,-172.5 -33.7,-172.7 -32.8,-172.4 -32.2,-171.5 -31.6,-170.6 -31.0,-169.6 -30.5,-168.7 -30.0,-167.8 -29.5,-166.8 -29.0,-165.9 -28.7,-165.4 -28.4,-165.5 -28.1,-165.5 -27.6,-165.6 -27.1,-165.7 -26.6,-165.8 -26.3,-165.8 -26.0,-165.9 -25.8,-166.4 -25.7,-167.5 -25.5,-168.5 -25.3,-169.6 -25.1,-170.6 -24.9,-171.7 -24.7,-172.7 -24.4,-173.8 -23.6,-174.4 -22.3,-174.6 -21.4,-174.2 -20.9,-173.2 -20.4,-172.3 -19.9,-171.3 -19.4,-170.3 -18.9,-169.4 -18.5,-168.4 -18.1,-167.4 -17.8,-167.0 -17.5,-167.0 -17.2,-167.0 -16.7,-167.1 -16.2,-167.1 -15.7,-167.2 -15.4,-167.2 -15.1,-167.2 -14.9,-167.7 -14.7,-168.8 -14.5,-169.8 -14.2,-170.9 -13.9,-171.9 -13.6,-172.9 -13.3,-174.0 -13.0,-175.0 -12.2,-175.6 -10.9,-175.7 -10.0,-175.2 -9.5,-174.2 -9.1,-173.2 -8.6,-172.2 -8.2,-171.2 -7.8,-170.3 -7.5,-169.3 -7.1,-168.3 -6.8,-167.8 -6.6,-167.8 -6.2,-167.8 -5.7,-167.8 -5.3,-167.8 -4.8,-167.8 -4.4,-167.8 -4.2,-167.8 -3.9,-168.4 -3.6,-169.4 -3.3,-170.4 -3.0,-171.4 -2.7,-172.4 -2.3,-173.5 -1.9,-174.5 -1.5,-175.5 -0.7,-176.0 0.7,-176.0 1.5,-175.5 1.9,-174.5 2.3,-173.5 2.7,-172.4 3.0,-171.4 3.3,-170.4 3.6,-169.4 3.9,-168.4 4.2,-167.8 4.4,-167.8 4.8,-167.8 5.3,-167.8 5.7,-167.8 6.2,-167.8 6.6,-167.8 6.8,-167.8 7.1,-168.3 7.5,-169.3 7.8,-170.3 8.2,-171.2 8.6,-172.2 9.1,-173.2 9.5,-174.2 10.0,-175.2 10.9,-175.7 12.2,-175.6 13.0,-175.0 13.3,-174.0 13.6,-172.9 13.9,-171.9 14.2,-170.9 14.5,-169.8 14.7,-168.8 14.9,-167.7 15.1,-167.2 15.4,-167.2 15.7,-167.2 16.2,-167.1 16.7,-167.1 17.2,-167.0 17.5,-167.0 17.8,-167.0 18.1,-167.4 18.5,-168.4 18.9,-169.4 19.4,-170.3 19.9,-171.3 20.4,-172.3 20.9,-173.2 21.4,-174.2 22.3,-174.6 23.6,-174.4 24.4,-173.8 24.7,-172.7 24.9,-171.7 25.1,-170.6 25.3,-169.6 25.5,-168.5 25.7,-167.5 25.8,-166.4 26.0,-165.9 26.3,-165.8 26.6,-165.8 27.1,-165.7 27.6,-165.6 28.1,-165.5 28.4,-165.5 28.7,-165.4 29.0,-165.9 29.5,-166.8 30.0,-167.8 30.5,-168.7 31.0,-169.6 31.6,-170.6 32.2,-171.5 32.8,-172.4 33.7,-172.7 35.0,-172.5 35.7,-171.8 35.9,-170.7 36.1,-169.7 36.2,-168.6 36.4,-167.5 36.5,-166.5 36.6,-165.4 36.7,-164.4 36.8,-163.8 37.1,-163.8 37.4,-163.7 37.9,-163.6 38.4,-163.5 38.8,-163.4 39.2,-163.3 39.4,-163.2 39.8,-163.6 40.3,-164.5 40.9,-165.5 41.5,-166.4 42.1,-167.2 42.7,-168.1 43.3,-169.0 44.0,-169.9 44.9,-170.2 46.2,-169.8 46.9,-169.1 47.0,-168.0 47.1,-166.9 47.2,-165.9 47.3,-164.8 47.3,-163.7 47.3,-162.7 47.3,-161.6 47.5,-161.1 47.7,-161.0 48.1,-160.9 48.5,-160.7 49.0,-160.6 49.4,-160.5 49.8,-160.4 50.0,-160.3 50.4,-160.7 51.0,-161.6 51.6,-162.4 52.3,-163.3 52.9,-164.1 53.6,-165.0 54.3,-165.8 55.0,-166.7 56.0,-166.9 57.2,-166.4 57.8,-165.7 57.9,-164.6 57.9,-163.5 57.9,-162.4 57.9,-161.4 57.9,-160.3 57.9,-159.2 57.8,-158.2 57.9,-157.6 58.1,-157.5 58.5,-157.4 58.9,-157.2 59.4,-157.1 59.8,-156.9 60.2,-156.8 60.4,-156.7 60.8,-157.0 61.5,-157.9 62.1,-158.7 62.8,-159.5 63.5,-160.3 64.3,-161.1 65.0,-161.9 65.8,-162.7 66.7,-162.8 68.0,-162.3 68.6,-161.6 68.5,-160.5 68.5,-159.4 68.4,-158.3 68.4,-157.2 68.3,-156.2 68.2,-155.1 68.0,-154.1 68.1,-153.5 68.3,-153.4 68.6,-153.2 69.1,-153.0 69.5,-152.8 69.9,-152.6 70.3,-152.5 70.5,-152.4 71.0,-152.7 71.7,-153.5 72.4,-154.3 73.1,-155.1 73.9,-155.8 74.7,-156.6 75.5,-157.3 76.3,-158.1 77.3,-158.1 78.4,-157.6 79.0,-156.7 78.9,-155.6 78.8,-154.6 78.6,-153.5 78.5,-152.4 78.3,-151.4 78.2,-150.3 78.0,-149.3 78.0,-148.7 78.2,-148.6 78.5,-148.4 78.9,-148.2 79.4,-148.0 79.8,-147.7 80.1,-147.6 80.3,-147.4 80.8,-147.8 81.6,-148.5 82.3,-149.2 83.1,-150.0 83.9,-150.7 84.7,-151.4 85.6,-152.1 86.4,-152.7 87.4,-152.7 88.6,-152.1 89.1,-151.2 88.9,-150.1 88.7,-149.1 88.5,-148.0 88.3,-147.0 88.1,-145.9 87.8,-144.9 87.6,-143.9 87.5,-143.3 87.7,-143.1 88.1,-143.0 88.5,-142.7 88.9,-142.5 89.3,-142.2 89.6,-142.0 89.8,-141.9 90.3,-142.2 91.1,-142.8 91.9,-143.5 92.7,-144.2 93.6,-144.9 94.5,-145.5 95.3,-146.1 96.2,-146.8 97.2,-146.7 98.3,-146.0 98.8,-145.1 98.5,-144.0 98.3,-142.9 98.0,-141.9 97.7,-140.9 97.4,-139.8 97.1,-138.8 96.8,-137.8 96.7,-137.2 96.9,-137.1 97.2,-136.9 97.6,-136.6 98.0,-136.3 98.4,-136.1 98.7,-135.8 98.9,-135.7 99.4,-135.9 100.2,-136.6 101.1,-137.2 102.0,-137.8 102.9,-138.4 103.8,-139.0 104.7,-139.6 105.6,-140.1 106.6,-140.0 107.7,-139.2 108.0,-138.3 107.7,-137.3 107.4,-136.2 107.1,-135.2 106.7,-134.2 106.4,-133.2 106.0,-132.2 105.6,-131.2 105.5,-130.6 105.7,-130.5 106.0,-130.2 106.3,-129.9 106.7,-129.6 107.1,-129.3 107.3,-129.1 107.5,-128.9 108.1,-129.1 109.0,-129.7 109.9,-130.3 110.8,-130.9 111.7,-131.4 112.6,-131.9 113.6,-132.4 114.6,-132.9 115.6,-132.8 116.5,-131.9 116.8,-130.9 116.5,-129.9 116.1,-128.9 115.7,-127.9 115.3,-126.9 114.8,-125.9 114.4,-125.0 113.9,-124.0 113.8,-123.5 114.0,-123.3 114.3,-123.0 114.6,-122.7 114.9,-122.4 115.3,-122.1 115.6,-121.8 115.7,-121.6 116.3,-121.8 117.2,-122.3 118.1,-122.8 119.1,-123.3 120.1,-123.8 121.0,-124.3 122.0,-124.7 123.0,-125.2 124.0,-124.9 124.9,-124.0 125.2,-123.0 124.7,-122.0 124.3,-121.0 123.8,-120.1 123.3,-119.1 122.8,-118.1 122.3,-117.2 121.8,-116.3 121.6,-115.7 121.8,-115.6 122.1,-115.3 122.4,-114.9 122.7,-114.6 123.0,-114.3 123.3,-114.0 123.5,-113.8 124.0,-113.9 125.0,-114.4 125.9,-114.8 126.9,-115.3 127.9,-115.7 128.9,-116.1 129.9,-116.5 130.9,-116.8 131.9,-116.5 132.8,-115.6 132.9,-114.6 132.4,-113.6 131.9,-112.6 131.4,-111.7 130.9,-110.8 130.3,-109.9 129.7,-109.0 129.1,-108.1 128.9,-107.5 129.1,-107.3 129.3,-107.1 129.6,-106.7 129.9,-106.3 130.2,-106.0 130.5,-105.7 130.6,-105.5 131.2,-105.6 132.2,-106.0 133.2,-106.4 134.2,-106.7 135.2,-107.1 136.2,-107.4 137.3,-107.7 138.3,-108.0 139.2,-107.7 140.0,-106.6 140.1,-105.6 139.6,-104.7 139.0,-103.8 138.4,-102.9 137.8,-102.0 137.2,-101.1 136.6,-100.2 135.9,-99.4 135.7,-98.9 135.8,-98.7 136.1,-98.4 136.3,-98.0 136.6,-97.6 136.9,-97.2 137.1,-96.9 137.2,-96.7 137.8,-96.8 138.8,-97.1 139.8,-97.4 140.9,-97.7 141.9,-98.0 142.9,-98.3 144.0,-98.5 145.1,-98.8 146.0,-98.3 146.7,-97.2 146.8,-96.2 146.1,-95.3 145.5,-94.5 144.9,-93.6 144.2,-92.7 143.5,-91.9 142.8,-91.1 142.2,-90.3 141.9,-89.8 142.0,-89.6 142.2,-89.3 142.5,-88.9 142.7,-88.5 143.0,-88.1 143.1,-87.7 143.3,-87.5 143.9,-87.6 144.9,-87.8 145.9,-88.1 147.0,-88.3 148.0,-88.5 149.1,-88.7 150.1,-88.9 151.2,-89.1 152.1,-88.6 152.7,-87.4 152.7,-86.4 152.1,-85.6 151.4,-84.7 150.7,-83.9 150.0,-83.1 149.2,-82.3 148.5,-81.6 147.8,-80.8 147.4,-80.3 147.6,-80.1 147.7,-79.8 148.0,-79.4 148.2,-78.9 148.4,-78.5 148.6,-78.2 148.7,-78.0 149.3,-78.0 150.3,-78.2 151.4,-78.3 152.4,-78.5 153.5,-78.6 154.6,-78.8 155.6,-78.9 156.7,-79.0 157.6,-78.4 158.1,-77.3 158.1,-76.3 157.3,-75.5 156.6,-74.7 155.8,-73.9 155.1,-73.1 154.3,-72.4 153.5,-71.7 152.7,-71.0 152.4,-70.5 152.5,-70.3 152.6,-69.9 152.8,-69.5 153.0,-69.1 153.2,-68.6 153.4,-68.3 153.5,-68.1 154.1,-68.0 155.1,-68.2 156.2,-68.3 157.2,-68.4 158.3,-68.4 159.4,-68.5 160.5,-68.5 161.6,-68.6 162.3,-68.0 162.8,-66.7 162.7,-65.8 161.9,-65.0 161.1,-64.3 160.3,-63.5 159.5,-62.8 158.7,-62.1 157.9,-61.5 157.0,-60.8 156.7,-60.4 156.8,-60.2 156.9,-59.8 157.1,-59.4 157.2,-58.9 157.4,-58.5 157.5,-58.1 157.6,-57.9 158.2,-57.8 159.2,-57.9 160.3,-57.9 161.4,-57.9 162.4,-57.9 163.5,-57.9 164.6,-57.9 165.7,-57.8 166.4,-57.2 166.9,-56.0 166.7,-55.0 165.8,-54.3 165.0,-53.6 164.1,-52.9 163.3,-52.3 162.4,-51.6 161.6,-51.0 160.7,-50.4 160.3,-50.0 160.4,-49.8 160.5,-49.4 160.6,-49.0 160.7,-48.5 160.9,-48.1 161.0,-47.7 161.1,-47.5 161.6,-47.3 162.7,-47.3 163.7,-47.3 164.8,-47.3 165.9,-47.2 166.9,-47.1 168.0,-47.0 169.1,-46.9 169.8,-46.2 170.2,-44.9 169.9,-44.0 169.0,-43.3 168.1,-42.7 167.2,-42.1 166.4,-41.5 165.5,-40.9 164.5,-40.3 163.6,-39.8 163.2,-39.4 163.3,-39.2 163.4,-38.8 163.5,-38.4 163.6,-37.9 163.7,-37.4 163.8,-37.1 163.8,-36.8 164.4,-36.7 165.4,-36.6 166.5,-36.5 167.5,-36.4 168.6,-36.2 169.7,-36.1 170.7,-35.9 171.8,-35.7 172.5,-35.0 172.7,-33.7 172.4,-32.8 171.5,-32.2 170.6,-31.6 169.6,-31.0 168.7,-30.5 167.8,-30.0 166.8,-29.5 165.9,-29.0 165.4,-28.7 165.5,-28.4 165.5,-28.1 165.6,-27.6 165.7,-27.1 165.8,-26.6 165.8,-26.3 165.9,-26.0 166.4,-25.8 167.5,-25.7 168.5,-25.5 169.6,-25.3 170.6,-25.1 171.7,-24.9 172.7,-24.7 173.8,-24.4 174.4,-23.6 174.6,-22.3 174.2,-21.4 173.2,-20.9 172.3,-20.4 171.3,-19.9 170.3,-19.4 169.4,-18.9 168.4,-18.5 167.4,-18.1 167.0,-17.8 167.0,-17.5 167.0,-17.2 167.1,-16.7 167.1,-16.2 167.2,-15.7 167.2,-15.4 167.2,-15.1 167.7,-14.9 168.8,-14.7 169.8,-14.5 170.9,-14.2 171.9,-13.9 172.9,-13.6 174.0,-13.3 175.0,-13.0 175.6,-12.2 175.7,-10.9 175.2,-10.0 174.2,-9.5 173.2,-9.1 172.2,-8.6 171.2,-8.2 170.3,-7.8 169.3,-7.5 168.3,-7.1 167.8,-6.8 167.8,-6.6 167.8,-6.2 167.8,-5.7Z" fill="#ffffe6"/><g transform="rotate(0) translate(97,0)"><path d="M69.9,-4.9L70.0,-4.3 70.1,-3.8 70.4,-3.5 70.6,-3.3 70.7,-3.3 71.3,-3.2 72.2,-3.1 73.1,-3.0 74.0,-2.8 75.0,-2.5 75.9,-2.2 76.8,-1.9 77.7,-1.5 78.2,-0.6 78.2,0.6 77.7,1.5 76.8,1.9 75.9,2.2 75.0,2.5 74.0,2.8 73.1,3.0 72.2,3.1 71.3,3.2 70.7,3.3 70.6,3.3 70.4,3.5 70.1,3.8 70.0,4.3 69.9,4.9 69.9,5.6 69.8,6.2 69.9,6.7 70.1,7.0 70.3,7.2 70.4,7.3 71.0,7.4 71.9,7.7 72.7,8.0 73.6,8.3 74.5,8.7 75.4,9.1 76.2,9.6 77.1,10.1 77.4,11.0 77.2,12.3 76.6,13.0 75.7,13.3 74.7,13.5 73.8,13.6 72.8,13.8 71.9,13.8 70.9,13.9 70.0,13.8 69.5,13.8 69.3,13.8 69.1,14.0 68.8,14.2 68.6,14.6 68.4,15.3 68.3,15.9 68.1,16.5 68.1,17.0 68.3,17.4 68.4,17.6 68.6,17.7 69.1,17.9 69.9,18.3 70.7,18.7 71.6,19.2 72.4,19.7 73.2,20.3 73.9,20.9 74.7,21.5 74.9,22.4 74.5,23.7 73.8,24.3 72.8,24.4 71.9,24.5 70.9,24.5 69.9,24.5 69.0,24.4 68.1,24.3 67.2,24.1 66.6,24.0 66.5,24.0 66.2,24.1 65.9,24.3 65.6,24.7 65.4,25.3 65.1,25.9 64.9,26.5 64.8,27.0 64.9,27.4 65.0,27.6 65.2,27.7 65.6,28.0 66.4,28.5 67.2,29.0 67.9,29.6 68.6,30.3 69.3,30.9 70.0,31.7 70.7,32.4 70.7,33.3 70.2,34.5 69.4,35.1 68.4,35.0 67.4,34.9 66.5,34.8 65.5,34.6 64.6,34.4 63.7,34.1 62.8,33.8 62.3,33.7 62.1,33.6 61.9,33.7 61.5,33.8 61.2,34.2 60.9,34.8 60.5,35.3 60.2,35.9 60.1,36.4 60.1,36.7 60.2,37.0 60.3,37.1 60.7,37.5 61.4,38.1 62.1,38.7 62.7,39.4 63.3,40.2 63.9,40.9 64.5,41.7 65.1,42.6 65.0,43.5 64.2,44.6 63.4,45.0 62.4,44.8 61.5,44.6 60.5,44.3 59.6,44.0 58.7,43.6 57.9,43.3 57.1,42.8 56.6,42.6 56.4,42.5 56.2,42.5 55.8,42.6 55.4,42.9 55.0,43.5 54.6,44.0 54.2,44.5 54.0,44.9 54.0,45.3 54.0,45.6 54.1,45.7 54.4,46.1 55.1,46.8 55.6,47.5 56.2,48.3 56.6,49.2 57.1,50.0 57.6,50.9 58.0,51.8 57.8,52.7 56.9,53.7 56.0,54.0 55.0,53.6 54.1,53.2 53.3,52.8 52.4,52.4 51.6,51.9 50.8,51.4 50.1,50.9 49.6,50.5 49.5,50.5 49.2,50.4 48.8,50.5 48.4,50.7 47.9,51.2 47.4,51.6 47.0,52.0 46.7,52.4 46.6,52.8 46.6,53.1 46.7,53.2 47.0,53.7 47.5,54.5 47.9,55.3 48.3,56.2 48.7,57.1 49.0,58.0 49.3,58.9 49.6,59.8 49.3,60.7 48.2,61.5 47.3,61.7 46.4,61.2 45.6,60.7 44.8,60.2 44.0,59.6 43.3,59.0 42.6,58.4 41.9,57.7 41.5,57.4 41.4,57.3 41.1,57.2 40.7,57.2 40.3,57.4 39.8,57.7 39.2,58.1 38.7,58.5 38.3,58.8 38.2,59.2 38.2,59.4 38.2,59.6 38.4,60.1 38.8,61.0 39.1,61.8 39.4,62.7 39.6,63.7 39.8,64.6 40.0,65.6 40.1,66.6 39.7,67.4 38.5,68.0 37.6,68.1 36.8,67.4 36.0,66.8 35.3,66.2 34.6,65.5 34.0,64.8 33.4,64.1 32.8,63.3 32.5,62.9 32.4,62.8 32.1,62.7 31.8,62.6 31.3,62.7 30.7,63.0 30.1,63.3 29.5,63.6 29.2,63.9 29.0,64.2 28.9,64.5 28.9,64.6 29.1,65.2 29.3,66.1 29.5,67.0 29.6,67.9 29.7,68.9 29.8,69.8 29.8,70.8 29.8,71.8 29.2,72.5 28.0,73.0 27.0,72.9 26.3,72.2 25.7,71.4 25.1,70.7 24.5,69.9 23.9,69.2 23.5,68.4 23.0,67.5 22.8,67.1 22.7,66.9 22.4,66.8 22.1,66.7 21.6,66.7 21.0,66.9 20.4,67.1 19.7,67.3 19.3,67.5 19.1,67.8 19.0,68.1 19.0,68.2 19.0,68.8 19.1,69.7 19.2,70.6 19.2,71.6 19.1,72.5 19.0,73.5 18.9,74.5 18.7,75.5 18.0,76.1 16.8,76.4 15.9,76.1 15.3,75.3 14.7,74.5 14.2,73.6 13.8,72.8 13.4,71.9 13.0,71.1 12.7,70.2 12.5,69.7 12.4,69.6 12.2,69.4 11.9,69.2 11.4,69.2 10.8,69.3 10.1,69.4 9.5,69.5 9.0,69.6 8.8,69.9 8.6,70.1 8.6,70.3 8.6,70.8 8.5,71.8 8.4,72.7 8.3,73.6 8.1,74.6 7.9,75.5 7.6,76.5 7.3,77.4 6.5,77.9 5.2,78.0 4.3,77.6 3.9,76.7 3.5,75.8 3.1,74.9 2.8,74.0 2.5,73.1 2.3,72.2 2.1,71.3 2.0,70.8 1.9,70.6 1.8,70.4 1.5,70.2 1.0,70.1 0.3,70.1 -0.3,70.1 -1.0,70.1 -1.5,70.2 -1.8,70.4 -1.9,70.6 -2.0,70.8 -2.1,71.3 -2.3,72.2 -2.5,73.1 -2.8,74.0 -3.1,74.9 -3.5,75.8 -3.9,76.7 -4.3,77.6 -5.2,78.0 -6.5,77.9 -7.3,77.4 -7.6,76.5 -7.9,75.5 -8.1,74.6 -8.3,73.6 -8.4,72.7 -8.5,71.8 -8.6,70.8 -8.6,70.3 -8.6,70.1 -8.8,69.9 -9.0,69.6 -9.5,69.5 -10.1,69.4 -10.8,69.3 -11.4,69.2 -11.9,69.2 -12.2,69.4 -12.4,69.6 -12.5,69.7 -12.7,70.2 -13.0,71.1 -13.4,71.9 -13.8,72.8 -14.2,73.6 -14.7,74.5 -15.3,75.3 -15.9,76.1 -16.8,76.4 -18.0,76.1 -18.7,75.5 -18.9,74.5 -19.0,73.5 -19.1,72.5 -19.2,71.6 -19.2,70.6 -19.1,69.7 -19.0,68.8 -19.0,68.2 -19.0,68.1 -19.1,67.8 -19.3,67.5 -19.7,67.3 -20.4,67.1 -21.0,66.9 -21.6,66.7 -22.1,66.7 -22.4,66.8 -22.7,66.9 -22.8,67.1 -23.0,67.5 -23.5,68.4 -23.9,69.2 -24.5,69.9 -25.1,70.7 -25.7,71.4 -26.3,72.2 -27.0,72.9 -28.0,73.0 -29.2,72.5 -29.8,71.8 -29.8,70.8 -29.8,69.8 -29.7,68.9 -29.6,67.9 -29.5,67.0 -29.3,66.1 -29.1,65.2 -28.9,64.6 -28.9,64.5 -29.0,64.2 -29.2,63.9 -29.5,63.6 -30.1,63.3 -30.7,63.0 -31.3,62.7 -31.8,62.6 -32.1,62.7 -32.4,62.8 -32.5,62.9 -32.8,63.3 -33.4,64.1 -34.0,64.8 -34.6,65.5 -35.3,66.2 -36.0,66.8 -36.8,67.4 -37.6,68.1 -38.5,68.0 -39.7,67.4 -40.1,66.6 -40.0,65.6 -39.8,64.6 -39.6,63.7 -39.4,62.7 -39.1,61.8 -38.8,61.0 -38.4,60.1 -38.2,59.6 -38.2,59.4 -38.2,59.2 -38.3,58.8 -38.7,58.5 -39.2,58.1 -39.8,57.7 -40.3,57.4 -40.7,57.2 -41.1,57.2 -41.4,57.3 -41.5,57.4 -41.9,57.7 -42.6,58.4 -43.3,59.0 -44.0,59.6 -44.8,60.2 -45.6,60.7 -46.4,61.2 -47.3,61.7 -48.2,61.5 -49.3,60.7 -49.6,59.8 -49.3,58.9 -49.0,58.0 -48.7,57.1 -48.3,56.2 -47.9,55.3 -47.5,54.5 -47.0,53.7 -46.7,53.2 -46.6,53.1 -46.6,52.8 -46.7,52.4 -47.0,52.0 -47.4,51.6 -47.9,51.2 -48.4,50.7 -48.8,50.5 -49.2,50.4 -49.5,50.5 -49.6,50.5 -50.1,50.9 -50.8,51.4 -51.6,51.9 -52.4,52.4 -53.3,52.8 -54.1,53.2 -55.0,53.6 -56.0,54.0 -56.9,53.7 -57.8,52.7 -58.0,51.8 -57.6,50.9 -57.1,50.0 -56.6,49.2 -56.2,48.3 -55.6,47.5 -55.1,46.8 -54.4,46.1 -54.1,45.7 -54.0,45.6 -54.0,45.3 -54.0,44.9 -54.2,44.5 -54.6,44.0 -55.0,43.5 -55.4,42.9 -55.8,42.6 -56.2,42.5 -56.4,42.5 -56.6,42.6 -57.1,42.8 -57.9,43.3 -58.7,43.6 -59.6,44.0 -60.5,44.3 -61.5,44.6 -62.4,44.8 -63.4,45.0 -64.2,44.6 -65.0,43.5 -65.1,42.6 -64.5,41.7 -63.9,40.9 -63.3,40.2 -62.7,39.4 -62.1,38.7 -61.4,38.1 -60.7,37.5 -60.3,37.1 -60.2,37.0 -60.1,36.7 -60.1,36.4 -60.2,35.9 -60.5,35.3 -60.9,34.8 -61.2,34.2 -61.5,33.8 -61.9,33.7 -62.1,33.6 -62.3,33.7 -62.8,33.8 -63.7,34.1 -64.6,34.4 -65.5,34.6 -66.5,34.8 -67.4,34.9 -68.4,35.0 -69.4,35.1 -70.2,34.5 -70.7,33.3 -70.7,32.4 -70.0,31.7 -69.3,30.9 -68.6,30.3 -67.9,29.6 -67.2,29.0 -66.4,28.5 -65.6,28.0 -65.2,27.7 -65.0,27.6 -64.9,27.4 -64.8,27.0 -64.9,26.5 -65.1,25.9 -65.4,25.3 -65.6,24.7 -65.9,24.3 -66.2,24.1 -66.5,24.0 -66.6,24.0 -67.2,24.1 -68.1,24.3 -69.0,24.4 -69.9,24.5 -70.9,24.5 -71.9,24.5 -72.8,24.4 -73.8,24.3 -74.5,23.7 -74.9,22.4 -74.7,21.5 -73.9,20.9 -73.2,20.3 -72.4,19.7 -71.6,19.2 -70.7,18.7 -69.9,18.3 -69.1,17.9 -68.6,17.7 -68.4,17.6 -68.3,17.4 -68.1,17.0 -68.1,16.5 -68.3,15.9 -68.4,15.3 -68.6,14.6 -68.8,14.2 -69.1,14.0 -69.3,13.8 -69.5,13.8 -70.0,13.8 -70.9,13.9 -71.9,13.8 -72.8,13.8 -73.8,13.6 -74.7,13.5 -75.7,13.3 -76.6,13.0 -77.2,12.3 -77.4,11.0 -77.1,10.1 -76.2,9.6 -75.4,9.1 -74.5,8.7 -73.6,8.3 -72.7,8.0 -71.9,7.7 -71.0,7.4 -70.4,7.3 -70.3,7.2 -70.1,7.0 -69.9,6.7 -69.8,6.2 -69.9,5.6 -69.9,4.9 -70.0,4.3 -70.1,3.8 -70.4,3.5 -70.6,3.3 -70.7,3.3 -71.3,3.2 -72.2,3.1 -73.1,3.0 -74.0,2.8 -75.0,2.5 -75.9,2.2 -76.8,1.9 -77.7,1.5 -78.2,0.6 -78.2,-0.6 -77.7,-1.5 -76.8,-1.9 -75.9,-2.2 -75.0,-2.5 -74.0,-2.8 -73.1,-3.0 -72.2,-3.1 -71.3,-3.2 -70.7,-3.3 -70.6,-3.3 -70.4,-3.5 -70.1,-3.8 -70.0,-4.3 -69.9,-4.9 -69.9,-5.6 -69.8,-6.2 -69.9,-6.7 -70.1,-7.0 -70.3,-7.2 -70.4,-7.3 -71.0,-7.4 -71.9,-7.7 -72.7,-8.0 -73.6,-8.3 -74.5,-8.7 -75.4,-9.1 -76.2,-9.6 -77.1,-10.1 -77.4,-11.0 -77.2,-12.3 -76.6,-13.0 -75.7,-13.3 -74.7,-13.5 -73.8,-13.6 -72.8,-13.8 -71.9,-13.8 -70.9,-13.9 -70.0,-13.8 -69.5,-13.8 -69.3,-13.8 -69.1,-14.0 -68.8,-14.2 -68.6,-14.6 -68.4,-15.3 -68.3,-15.9 -68.1,-16.5 -68.1,-17.0 -68.3,-17.4 -68.4,-17.6 -68.6,-17.7 -69.1,-17.9 -69.9,-18.3 -70.7,-18.7 -71.6,-19.2 -72.4,-19.7 -73.2,-20.3 -73.9,-20.9 -74.7,-21.5 -74.9,-22.4 -74.5,-23.7 -73.8,-24.3 -72.8,-24.4 -71.9,-24.5 -70.9,-24.5 -69.9,-24.5 -69.0,-24.4 -68.1,-24.3 -67.2,-24.1 -66.6,-24.0 -66.5,-24.0 -66.2,-24.1 -65.9,-24.3 -65.6,-24.7 -65.4,-25.3 -65.1,-25.9 -64.9,-26.5 -64.8,-27.0 -64.9,-27.4 -65.0,-27.6 -65.2,-27.7 -65.6,-28.0 -66.4,-28.5 -67.2,-29.0 -67.9,-29.6 -68.6,-30.3 -69.3,-30.9 -70.0,-31.7 -70.7,-32.4 -70.7,-33.3 -70.2,-34.5 -69.4,-35.1 -68.4,-35.0 -67.4,-34.9 -66.5,-34.8 -65.5,-34.6 -64.6,-34.4 -63.7,-34.1 -62.8,-33.8 -62.3,-33.7 -62.1,-33.6 -61.9,-33.7 -61.5,-33.8 -61.2,-34.2 -60.9,-34.8 -60.5,-35.3 -60.2,-35.9 -60.1,-36.4 -60.1,-36.7 -60.2,-37.0 -60.3,-37.1 -60.7,-37.5 -61.4,-38.1 -62.1,-38.7 -62.7,-39.4 -63.3,-40.2 -63.9,-40.9 -64.5,-41.7 -65.1,-42.6 -65.0,-43.5 -64.2,-44.6 -63.4,-45.0 -62.4,-44.8 -61.5,-44.6 -60.5,-44.3 -59.6,-44.0 -58.7,-43.6 -57.9,-43.3 -57.1,-42.8 -56.6,-42.6 -56.4,-42.5 -56.2,-42.5 -55.8,-42.6 -55.4,-42.9 -55.0,-43.5 -54.6,-44.0 -54.2,-44.5 -54.0,-44.9 -54.0,-45.3 -54.0,-45.6 -54.1,-45.7 -54.4,-46.1 -55.1,-46.8 -55.6,-47.5 -56.2,-48.3 -56.6,-49.2 -57.1,-50.0 -57.6,-50.9 -58.0,-51.8 -57.8,-52.7 -56.9,-53.7 -56.0,-54.0 -55.0,-53.6 -54.1,-53.2 -53.3,-52.8 -52.4,-52.4 -51.6,-51.9 -50.8,-51.4 -50.1,-50.9 -49.6,-50.5 -49.5,-50.5 -49.2,-50.4 -48.8,-50.5 -48.4,-50.7 -47.9,-51.2 -47.4,-51.6 -47.0,-52.0 -46.7,-52.4 -46.6,-52.8 -46.6,-53.1 -46.7,-53.2 -47.0,-53.7 -47.5,-54.5 -47.9,-55.3 -48.3,-56.2 -48.7,-57.1 -49.0,-58.0 -49.3,-58.9 -49.6,-59.8 -49.3,-60.7 -48.2,-61.5 -47.3,-61.7 -46.4,-61.2 -45.6,-60.7 -44.8,-60.2 -44.0,-59.6 -43.3,-59.0 -42.6,-58.4 -41.9,-57.7 -41.5,-57.4 -41.4,-57.3 -41.1,-57.2 -40.7,-57.2 -40.3,-57.4 -39.8,-57.7 -39.2,-58.1 -38.7,-58.5 -38.3,-58.8 -38.2,-59.2 -38.2,-59.4 -38.2,-59.6 -38.4,-60.1 -38.8,-61.0 -39.1,-61.8 -39.4,-62.7 -39.6,-63.7 -39.8,-64.6 -40.0,-65.6 -40.1,-66.6 -39.7,-67.4 -38.5,-68.0 -37.6,-68.1 -36.8,-67.4 -36.0,-66.8 -35.3,-66.2 -34.6,-65.5 -34.0,-64.8 -33.4,-64.1 -32.8,-63.3 -32.5,-62.9 -32.4,-62.8 -32.1,-62.7 -31.8,-62.6 -31.3,-62.7 -30.7,-63.0 -30.1,-63.3 -29.5,-63.6 -29.2,-63.9 -29.0,-64.2 -28.9,-64.5 -28.9,-64.6 -29.1,-65.2 -29.3,-66.1 -29.5,-67.0 -29.6,-67.9 -29.7,-68.9 -29.8,-69.8 -29.8,-70.8 -29.8,-71.8 -29.2,-72.5 -28.0,-73.0 -27.0,-72.9 -26.3,-72.2 -25.7,-71.4 -25.1,-70.7 -24.5,-69.9 -23.9,-69.2 -23.5,-68.4 -23.0,-67.5 -22.8,-67.1 -22.7,-66.9 -22.4,-66.8 -22.1,-66.7 -21.6,-66.7 -21.0,-66.9 -20.4,-67.1 -19.7,-67.3 -19.3,-67.5 -19.1,-67.8 -19.0,-68.1 -19.0,-68.2 -19.0,-68.8 -19.1,-69.7 -19.2,-70.6 -19.2,-71.6 -19.1,-72.5 -19.0,-73.5 -18.9,-74.5 -18.7,-75.5 -18.0,-76.1 -16.8,-76.4 -15.9,-76.1 -15.3,-75.3 -14.7,-74.5 -14.2,-73.6 -13.8,-72.8 -13.4,-71.9 -13.0,-71.1 -12.7,-70.2 -12.5,-69.7 -12.4,-69.6 -12.2,-69.4 -11.9,-69.2 -11.4,-69.2 -10.8,-69.3 -10.1,-69.4 -9.5,-69.5 -9.0,-69.6 -8.8,-69.9 -8.6,-70.1 -8.6,-70.3 -8.6,-70.8 -8.5,-71.8 -8.4,-72.7 -8.3,-73.6 -8.1,-74.6 -7.9,-75.5 -7.6,-76.5 -7.3,-77.4 -6.5,-77.9 -5.2,-78.0 -4.3,-77.6 -3.9,-76.7 -3.5,-75.8 -3.1,-74.9 -2.8,-74.0 -2.5,-73.1 -2.3,-72.2 -2.1,-71.3 -2.0,-70.8 -1.9,-70.6 -1.8,-70.4 -1.5,-70.2 -1.0,-70.1 -0.3,-70.1 0.3,-70.1 1.0,-70.1 1.5,-70.2 1.8,-70.4 1.9,-70.6 2.0,-70.8 2.1,-71.3 2.3,-72.2 2.5,-73.1 2.8,-74.0 3.1,-74.9 3.5,-75.8 3.9,-76.7 4.3,-77.6 5.2,-78.0 6.5,-77.9 7.3,-77.4 7.6,-76.5 7.9,-75.5 8.1,-74.6 8.3,-73.6 8.4,-72.7 8.5,-71.8 8.6,-70.8 8.6,-70.3 8.6,-70.1 8.8,-69.9 9.0,-69.6 9.5,-69.5 10.1,-69.4 10.8,-69.3 11.4,-69.2 11.9,-69.2 12.2,-69.4 12.4,-69.6 12.5,-69.7 12.7,-70.2 13.0,-71.1 13.4,-71.9 13.8,-72.8 14.2,-73.6 14.7,-74.5 15.3,-75.3 15.9,-76.1 16.8,-76.4 18.0,-76.1 18.7,-75.5 18.9,-74.5 19.0,-73.5 19.1,-72.5 19.2,-71.6 19.2,-70.6 19.1,-69.7 19.0,-68.8 19.0,-68.2 19.0,-68.1 19.1,-67.8 19.3,-67.5 19.7,-67.3 20.4,-67.1 21.0,-66.9 21.6,-66.7 22.1,-66.7 22.4,-66.8 22.7,-66.9 22.8,-67.1 23.0,-67.5 23.5,-68.4 23.9,-69.2 24.5,-69.9 25.1,-70.7 25.7,-71.4 26.3,-72.2 27.0,-72.9 28.0,-73.0 29.2,-72.5 29.8,-71.8 29.8,-70.8 29.8,-69.8 29.7,-68.9 29.6,-67.9 29.5,-67.0 29.3,-66.1 29.1,-65.2 28.9,-64.6 28.9,-64.5 29.0,-64.2 29.2,-63.9 29.5,-63.6 30.1,-63.3 30.7,-63.0 31.3,-62.7 31.8,-62.6 32.1,-62.7 32.4,-62.8 32.5,-62.9 32.8,-63.3 33.4,-64.1 34.0,-64.8 34.6,-65.5 35.3,-66.2 36.0,-66.8 36.8,-67.4 37.6,-68.1 38.5,-68.0 39.7,-67.4 40.1,-66.6 40.0,-65.6 39.8,-64.6 39.6,-63.7 39.4,-62.7 39.1,-61.8 38.8,-61.0 38.4,-60.1 38.2,-59.6 38.2,-59.4 38.2,-59.2 38.3,-58.8 38.7,-58.5 39.2,-58.1 39.8,-57.7 40.3,-57.4 40.7,-57.2 41.1,-57.2 41.4,-57.3 41.5,-57.4 41.9,-57.7 42.6,-58.4 43.3,-59.0 44.0,-59.6 44.8,-60.2 45.6,-60.7 46.4,-61.2 47.3,-61.7 48.2,-61.5 49.3,-60.7 49.6,-59.8 49.3,-58.9 49.0,-58.0 48.7,-57.1 48.3,-56.2 47.9,-55.3 47.5,-54.5 47.0,-53.7 46.7,-53.2 46.6,-53.1 46.6,-52.8 46.7,-52.4 47.0,-52.0 47.4,-51.6 47.9,-51.2 48.4,-50.7 48.8,-50.5 49.2,-50.4 49.5,-50.5 49.6,-50.5 50.1,-50.9 50.8,-51.4 51.6,-51.9 52.4,-52.4 53.3,-52.8 54.1,-53.2 55.0,-53.6 56.0,-54.0 56.9,-53.7 57.8,-52.7 58.0,-51.8 57.6,-50.9 57.1,-50.0 56.6,-49.2 56.2,-48.3 55.6,-47.5 55.1,-46.8 54.4,-46.1 54.1,-45.7 54.0,-45.6 54.0,-45.3 54.0,-44.9 54.2,-44.5 54.6,-44.0 55.0,-43.5 55.4,-42.9 55.8,-42.6 56.2,-42.5 56.4,-42.5 56.6,-42.6 57.1,-42.8 57.9,-43.3 58.7,-43.6 59.6,-44.0 60.5,-44.3 61.5,-44.6 62.4,-44.8 63.4,-45.0 64.2,-44.6 65.0,-43.5 65.1,-42.6 64.5,-41.7 63.9,-40.9 63.3,-40.2 62.7,-39.4 62.1,-38.7 61.4,-38.1 60.7,-37.5 60.3,-37.1 60.2,-37.0 60.1,-36.7 60.1,-36.4 60.2,-35.9 60.5,-35.3 60.9,-34.8 61.2,-34.2 61.5,-33.8 61.9,-33.7 62.1,-33.6 62.3,-33.7 62.8,-33.8 63.7,-34.1 64.6,-34.4 65.5,-34.6 66.5,-34.8 67.4,-34.9 68.4,-35.0 69.4,-35.1 70.2,-34.5 70.7,-33.3 70.7,-32.4 70.0,-31.7 69.3,-30.9 68.6,-30.3 67.9,-29.6 67.2,-29.0 66.4,-28.5 65.6,-28.0 65.2,-27.7 65.0,-27.6 64.9,-27.4 64.8,-27.0 64.9,-26.5 65.1,-25.9 65.4,-25.3 65.6,-24.7 65.9,-24.3 66.2,-24.1 66.5,-24.0 66.6,-24.0 67.2,-24.1 68.1,-24.3 69.0,-24.4 69.9,-24.5 70.9,-24.5 71.9,-24.5 72.8,-24.4 73.8,-24.3 74.5,-23.7 74.9,-22.4 74.7,-21.5 73.9,-20.9 73.2,-20.3 72.4,-19.7 71.6,-19.2 70.7,-18.7 69.9,-18.3 69.1,-17.9 68.6,-17.7 68.4,-17.6 68.3,-17.4 68.1,-17.0 68.1,-16.5 68.3,-15.9 68.4,-15.3 68.6,-14.6 68.8,-14.2 69.1,-14.0 69.3,-13.8 69.5,-13.8 70.0,-13.8 70.9,-13.9 71.9,-13.8 72.8,-13.8 73.8,-13.6 74.7,-13.5 75.7,-13.3 76.6,-13.0 77.2,-12.3 77.4,-11.0 77.1,-10.1 76.2,-9.6 75.4,-9.1 74.5,-8.7 73.6,-8.3 72.7,-8.0 71.9,-7.7 71.0,-7.4 70.4,-7.3 70.3,-7.2 70.1,-7.0 69.9,-6.7 69.8,-6.2 69.9,-5.6Z" fill="#cccccc"/></g><g transform="rotate(120) translate(97,0)"><path d="M69.9,-4.9L70.0,-4.3 70.1,-3.8 70.4,-3.5 70.6,-3.3 70.7,-3.3 71.3,-3.2 72.2,-3.1 73.1,-3.0 74.0,-2.8 75.0,-2.5 75.9,-2.2 76.8,-1.9 77.7,-1.5 78.2,-0.6 78.2,0.6 77.7,1.5 76.8,1.9 75.9,2.2 75.0,2.5 74.0,2.8 73.1,3.0 72.2,3.1 71.3,3.2 70.7,3.3 70.6,3.3 70.4,3.5 70.1,3.8 70.0,4.3 69.9,4.9 69.9,5.6 69.8,6.2 69.9,6.7 70.1,7.0 70.3,7.2 70.4,7.3 71.0,7.4 71.9,7.7 72.7,8.0 73.6,8.3 74.5,8.7 75.4,9.1 76.2,9.6 77.1,10.1 77.4,11.0 77.2,12.3 76.6,13.0 75.7,13.3 74.7,13.5 73.8,13.6 72.8,13.8 71.9,13.8 70.9,13.9 70.0,13.8 69.5,13.8 69.3,13.8 69.1,14.0 68.8,14.2 68.6,14.6 68.4,15.3 68.3,15.9 68.1,16.5 68.1,17.0 68.3,17.4 68.4,17.6 68.6,17.7 69.1,17.9 69.9,18.3 70.7,18.7 71.6,19.2 72.4,19.7 73.2,20.3 73.9,20.9 74.7,21.5 74.9,22.4 74.5,23.7 73.8,24.3 72.8,24.4 71.9,24.5 70.9,24.5 69.9,24.5 69.0,24.4 68.1,24.3 67.2,24.1 66.6,24.0 66.5,24.0 66.2,24.1 65.9,24.3 65.6,24.7 65.4,25.3 65.1,25.9 64.9,26.5 64.8,27.0 64.9,27.4 65.0,27.6 65.2,27.7 65.6,28.0 66.4,28.5 67.2,29.0 67.9,29.6 68.6,30.3 69.3,30.9 70.0,31.7 70.7,32.4 70.7,33.3 70.2,34.5 69.4,35.1 68.4,35.0 67.4,34.9 66.5,34.8 65.5,34.6 64.6,34.4 63.7,34.1 62.8,33.8 62.3,33.7 62.1,33.6 61.9,33.7 61.5,33.8 61.2,34.2 60.9,34.8 60.5,35.3 60.2,35.9 60.1,36.4 60.1,36.7 60.2,37.0 60.3,37.1 60.7,37.5 61.4,38.1 62.1,38.7 62.7,39.4 63.3,40.2 63.9,40.9 64.5,41.7 65.1,42.6 65.0,43.5 64.2,44.6 63.4,45.0 62.4,44.8 61.5,44.6 60.5,44.3 59.6,44.0 58.7,43.6 57.9,43.3 57.1,42.8 56.6,42.6 56.4,42.5 56.2,42.5 55.8,42.6 55.4,42.9 55.0,43.5 54.6,44.0 54.2,44.5 54.0,44.9 54.0,45.3 54.0,45.6 54.1,45.7 54.4,46.1 55.1,46.8 55.6,47.5 56.2,48.3 56.6,49.2 57.1,50.0 57.6,50.9 58.0,51.8 57.8,52.7 56.9,53.7 56.0,54.0 55.0,53.6 54.1,53.2 53.3,52.8 52.4,52.4 51.6,51.9 50.8,51.4 50.1,50.9 49.6,50.5 49.5,50.5 49.2,50.4 48.8,50.5 48.4,50.7 47.9,51.2 47.4,51.6 47.0,52.0 46.7,52.4 46.6,52.8 46.6,53.1 46.7,53.2 47.0,53.7 47.5,54.5 47.9,55.3 48.3,56.2 48.7,57.1 49.0,58.0 49.3,58.9 49.6,59.8 49.3,60.7 48.2,61.5 47.3,61.7 46.4,61.2 45.6,60.7 44.8,60.2 44.0,59.6 43.3,59.0 42.6,58.4 41.9,57.7 41.5,57.4 41.4,57.3 41.1,57.2 40.7,57.2 40.3,57.4 39.8,57.7 39.2,58.1 38.7,58.5 38.3,58.8 38.2,59.2 38.2,59.4 38.2,59.6 38.4,60.1 38.8,61.0 39.1,61.8 39.4,62.7 39.6,63.7 39.8,64.6 40.0,65.6 40.1,66.6 39.7,67.4 38.5,68.0 37.6,68.1 36.8,67.4 36.0,66.8 35.3,66.2 34.6,65.5 34.0,64.8 33.4,64.1 32.8,63.3 32.5,62.9 32.4,62.8 32.1,62.7 31.8,62.6 31.3,62.7 30.7,63.0 30.1,63.3 29.5,63.6 29.2,63.9 29.0,64.2 28.9,64.5 28.9,64.6 29.1,65.2 29.3,66.1 29.5,67.0 29.6,67.9 29.7,68.9 29.8,69.8 29.8,70.8 29.8,71.8 29.2,72.5 28.0,73.0 27.0,72.9 26.3,72.2 25.7,71.4 25.1,70.7 24.5,69.9 23.9,69.2 23.5,68.4 23.0,67.5 22.8,67.1 22.7,66.9 22.4,66.8 22.1,66.7 21.6,66.7 21.0,66.9 20.4,67.1 19.7,67.3 19.3,67.5 19.1,67.8 19.0,68.1 19.0,68.2 19.0,68.8 19.1,69.7 19.2,70.6 19.2,71.6 19.1,72.5 19.0,73.5 18.9,74.5 18.7,75.5 18.0,76.1 16.8,76.4 15.9,76.1 15.3,75.3 14.7,74.5 14.2,73.6 13.8,72.8 13.4,71.9 13.0,71.1 12.7,70.2 12.5,69.7 12.4,69.6 12.2,69.4 11.9,69.2 11.4,69.2 10.8,69.3 10.1,69.4 9.5,69.5 9.0,69.6 8.8,69.9 8.6,70.1 8.6,70.3 8.6,70.8 8.5,71.8 8.4,72.7 8.3,73.6 8.1,74.6 7.9,75.5 7.6,76.5 7.3,77.4 6.5,77.9 5.2,78.0 4.3,77.6 3.9,76.7 3.5,75.8 3.1,74.9 2.8,74.0 2.5,73.1 2.3,72.2 2.1,71.3 2.0,70.8 1.9,70.6 1.8,70.4 1.5,70.2 1.0,70.1 0.3,70.1 -0.3,70.1 -1.0,70.1 -1.5,70.2 -1.8,70.4 -1.9,70.6 -2.0,70.8 -2.1,71.3 -2.3,72.2 -2.5,73.1 -2.8,74.0 -3.1,74.9 -3.5,75.8 -3.9,76.7 -4.3,77.6 -5.2,78.0 -6.5,77.9 -7.3,77.4 -7.6,76.5 -7.9,75.5 -8.1,74.6 -8.3,73.6 -8.4,72.7 -8.5,71.8 -8.6,70.8 -8.6,70.3 -8.6,70.1 -8.8,69.9 -9.0,69.6 -9.5,69.5 -10.1,69.4 -10.8,69.3 -11.4,69.2 -11.9,69.2 -12.2,69.4 -12.4,69.6 -12.5,69.7 -12.7,70.2 -13.0,71.1 -13.4,71.9 -13.8,72.8 -14.2,73.6 -14.7,74.5 -15.3,75.3 -15.9,76.1 -16.8,76.4 -18.0,76.1 -18.7,75.5 -18.9,74.5 -19.0,73.5 -19.1,72.5 -19.2,71.6 -19.2,70.6 -19.1,69.7 -19.0,68.8 -19.0,68.2 -19.0,68.1 -19.1,67.8 -19.3,67.5 -19.7,67.3 -20.4,67.1 -21.0,66.9 -21.6,66.7 -22.1,66.7 -22.4,66.8 -22.7,66.9 -22.8,67.1 -23.0,67.5 -23.5,68.4 -23.9,69.2 -24.5,69.9 -25.1,70.7 -25.7,71.4 -26.3,72.2 -27.0,72.9 -28.0,73.0 -29.2,72.5 -29.8,71.8 -29.8,70.8 -29.8,69.8 -29.7,68.9 -29.6,67.9 -29.5,67.0 -29.3,66.1 -29.1,65.2 -28.9,64.6 -28.9,64.5 -29.0,64.2 -29.2,63.9 -29.5,63.6 -30.1,63.3 -30.7,63.0 -31.3,62.7 -31.8,62.6 -32.1,62.7 -32.4,62.8 -32.5,62.9 -32.8,63.3 -33.4,64.1 -34.0,64.8 -34.6,65.5 -35.3,66.2 -36.0,66.8 -36.8,67.4 -37.6,68.1 -38.5,68.0 -39.7,67.4 -40.1,66.6 -40.0,65.6 -39.8,64.6 -39.6,63.7 -39.4,62.7 -39.1,61.8 -38.8,61.0 -38.4,60.1 -38.2,59.6 -38.2,59.4 -38.2,59.2 -38.3,58.8 -38.7,58.5 -39.2,58.1 -39.8,57.7 -40.3,57.4 -40.7,57.2 -41.1,57.2 -41.4,57.3 -41.5,57.4 -41.9,57.7 -42.6,58.4 -43.3,59.0 -44.0,59.6 -44.8,60.2 -45.6,60.7 -46.4,61.2 -47.3,61.7 -48.2,61.5 -49.3,60.7 -49.6,59.8 -49.3,58.9 -49.0,58.0 -48.7,57.1 -48.3,56.2 -47.9,55.3 -47.5,54.5 -47.0,53.7 -46.7,53.2 -46.6,53.1 -46.6,52.8 -46.7,52.4 -47.0,52.0 -47.4,51.6 -47.9,51.2 -48.4,50.7 -48.8,50.5 -49.2,50.4 -49.5,50.5 -49.6,50.5 -50.1,50.9 -50.8,51.4 -51.6,51.9 -52.4,52.4 -53.3,52.8 -54.1,53.2 -55.0,53.6 -56.0,54.0 -56.9,53.7 -57.8,52.7 -58.0,51.8 -57.6,50.9 -57.1,50.0 -56.6,49.2 -56.2,48.3 -55.6,47.5 -55.1,46.8 -54.4,46.1 -54.1,45.7 -54.0,45.6 -54.0,45.3 -54.0,44.9 -54.2,44.5 -54.6,44.0 -55.0,43.5 -55.4,42.9 -55.8,42.6 -56.2,42.5 -56.4,42.5 -56.6,42.6 -57.1,42.8 -57.9,43.3 -58.7,43.6 -59.6,44.0 -60.5,44.3 -61.5,44.6 -62.4,44.8 -63.4,45.0 -64.2,44.6 -65.0,43.5 -65.1,42.6 -64.5,41.7 -63.9,40.9 -63.3,40.2 -62.7,39.4 -62.1,38.7 -61.4,38.1 -60.7,37.5 -60.3,37.1 -60.2,37.0 -60.1,36.7 -60.1,36.4 -60.2,35.9 -60.5,35.3 -60.9,34.8 -61.2,34.2 -61.5,33.8 -61.9,33.7 -62.1,33.6 -62.3,33.7 -62.8,33.8 -63.7,34.1 -64.6,34.4 -65.5,34.6 -66.5,34.8 -67.4,34.9 -68.4,35.0 -69.4,35.1 -70.2,34.5 -70.7,33.3 -70.7,32.4 -70.0,31.7 -69.3,30.9 -68.6,30.3 -67.9,29.6 -67.2,29.0 -66.4,28.5 -65.6,28.0 -65.2,27.7 -65.0,27.6 -64.9,27.4 -64.8,27.0 -64.9,26.5 -65.1,25.9 -65.4,25.3 -65.6,24.7 -65.9,24.3 -66.2,24.1 -66.5,24.0 -66.6,24.0 -67.2,24.1 -68.1,24.3 -69.0,24.4 -69.9,24.5 -70.9,24.5 -71.9,24.5 -72.8,24.4 -73.8,24.3 -74.5,23.7 -74.9,22.4 -74.7,21.5 -73.9,20.9 -73.2,20.3 -72.4,19.7 -71.6,19.2 -70.7,18.7 -69.9,18.3 -69.1,17.9 -68.6,17.7 -68.4,17.6 -68.3,17.4 -68.1,17.0 -68.1,16.5 -68.3,15.9 -68.4,15.3 -68.6,14.6 -68.8,14.2 -69.1,14.0 -69.3,13.8 -69.5,13.8 -70.0,13.8 -70.9,13.9 -71.9,13.8 -72.8,13.8 -73.8,13.6 -74.7,13.5 -75.7,13.3 -76.6,13.0 -77.2,12.3 -77.4,11.0 -77.1,10.1 -76.2,9.6 -75.4,9.1 -74.5,8.7 -73.6,8.3 -72.7,8.0 -71.9,7.7 -71.0,7.4 -70.4,7.3 -70.3,7.2 -70.1,7.0 -69.9,6.7 -69.8,6.2 -69.9,5.6 -69.9,4.9 -70.0,4.3 -70.1,3.8 -70.4,3.5 -70.6,3.3 -70.7,3.3 -71.3,3.2 -72.2,3.1 -73.1,3.0 -74.0,2.8 -75.0,2.5 -75.9,2.2 -76.8,1.9 -77.7,1.5 -78.2,0.6 -78.2,-0.6 -77.7,-1.5 -76.8,-1.9 -75.9,-2.2 -75.0,-2.5 -74.0,-2.8 -73.1,-3.0 -72.2,-3.1 -71.3,-3.2 -70.7,-3.3 -70.6,-3.3 -70.4,-3.5 -70.1,-3.8 -70.0,-4.3 -69.9,-4.9 -69.9,-5.6 -69.8,-6.2 -69.9,-6.7 -70.1,-7.0 -70.3,-7.2 -70.4,-7.3 -71.0,-7.4 -71.9,-7.7 -72.7,-8.0 -73.6,-8.3 -74.5,-8.7 -75.4,-9.1 -76.2,-9.6 -77.1,-10.1 -77.4,-11.0 -77.2,-12.3 -76.6,-13.0 -75.7,-13.3 -74.7,-13.5 -73.8,-13.6 -72.8,-13.8 -71.9,-13.8 -70.9,-13.9 -70.0,-13.8 -69.5,-13.8 -69.3,-13.8 -69.1,-14.0 -68.8,-14.2 -68.6,-14.6 -68.4,-15.3 -68.3,-15.9 -68.1,-16.5 -68.1,-17.0 -68.3,-17.4 -68.4,-17.6 -68.6,-17.7 -69.1,-17.9 -69.9,-18.3 -70.7,-18.7 -71.6,-19.2 -72.4,-19.7 -73.2,-20.3 -73.9,-20.9 -74.7,-21.5 -74.9,-22.4 -74.5,-23.7 -73.8,-24.3 -72.8,-24.4 -71.9,-24.5 -70.9,-24.5 -69.9,-24.5 -69.0,-24.4 -68.1,-24.3 -67.2,-24.1 -66.6,-24.0 -66.5,-24.0 -66.2,-24.1 -65.9,-24.3 -65.6,-24.7 -65.4,-25.3 -65.1,-25.9 -64.9,-26.5 -64.8,-27.0 -64.9,-27.4 -65.0,-27.6 -65.2,-27.7 -65.6,-28.0 -66.4,-28.5 -67.2,-29.0 -67.9,-29.6 -68.6,-30.3 -69.3,-30.9 -70.0,-31.7 -70.7,-32.4 -70.7,-33.3 -70.2,-34.5 -69.4,-35.1 -68.4,-35.0 -67.4,-34.9 -66.5,-34.8 -65.5,-34.6 -64.6,-34.4 -63.7,-34.1 -62.8,-33.8 -62.3,-33.7 -62.1,-33.6 -61.9,-33.7 -61.5,-33.8 -61.2,-34.2 -60.9,-34.8 -60.5,-35.3 -60.2,-35.9 -60.1,-36.4 -60.1,-36.7 -60.2,-37.0 -60.3,-37.1 -60.7,-37.5 -61.4,-38.1 -62.1,-38.7 -62.7,-39.4 -63.3,-40.2 -63.9,-40.9 -64.5,-41.7 -65.1,-42.6 -65.0,-43.5 -64.2,-44.6 -63.4,-45.0 -62.4,-44.8 -61.5,-44.6 -60.5,-44.3 -59.6,-44.0 -58.7,-43.6 -57.9,-43.3 -57.1,-42.8 -56.6,-42.6 -56.4,-42.5 -56.2,-42.5 -55.8,-42.6 -55.4,-42.9 -55.0,-43.5 -54.6,-44.0 -54.2,-44.5 -54.0,-44.9 -54.0,-45.3 -54.0,-45.6 -54.1,-45.7 -54.4,-46.1 -55.1,-46.8 -55.6,-47.5 -56.2,-48.3 -56.6,-49.2 -57.1,-50.0 -57.6,-50.9 -58.0,-51.8 -57.8,-52.7 -56.9,-53.7 -56.0,-54.0 -55.0,-53.6 -54.1,-53.2 -53.3,-52.8 -52.4,-52.4 -51.6,-51.9 -50.8,-51.4 -50.1,-50.9 -49.6,-50.5 -49.5,-50.5 -49.2,-50.4 -48.8,-50.5 -48.4,-50.7 -47.9,-51.2 -47.4,-51.6 -47.0,-52.0 -46.7,-52.4 -46.6,-52.8 -46.6,-53.1 -46.7,-53.2 -47.0,-53.7 -47.5,-54.5 -47.9,-55.3 -48.3,-56.2 -48.7,-57.1 -49.0,-58.0 -49.3,-58.9 -49.6,-59.8 -49.3,-60.7 -48.2,-61.5 -47.3,-61.7 -46.4,-61.2 -45.6,-60.7 -44.8,-60.2 -44.0,-59.6 -43.3,-59.0 -42.6,-58.4 -41.9,-57.7 -41.5,-57.4 -41.4,-57.3 -41.1,-57.2 -40.7,-57.2 -40.3,-57.4 -39.8,-57.7 -39.2,-58.1 -38.7,-58.5 -38.3,-58.8 -38.2,-59.2 -38.2,-59.4 -38.2,-59.6 -38.4,-60.1 -38.8,-61.0 -39.1,-61.8 -39.4,-62.7 -39.6,-63.7 -39.8,-64.6 -40.0,-65.6 -40.1,-66.6 -39.7,-67.4 -38.5,-68.0 -37.6,-68.1 -36.8,-67.4 -36.0,-66.8 -35.3,-66.2 -34.6,-65.5 -34.0,-64.8 -33.4,-64.1 -32.8,-63.3 -32.5,-62.9 -32.4,-62.8 -32.1,-62.7 -31.8,-62.6 -31.3,-62.7 -30.7,-63.0 -30.1,-63.3 -29.5,-63.6 -29.2,-63.9 -29.0,-64.2 -28.9,-64.5 -28.9,-64.6 -29.1,-65.2 -29.3,-66.1 -29.5,-67.0 -29.6,-67.9 -29.7,-68.9 -29.8,-69.8 -29.8,-70.8 -29.8,-71.8 -29.2,-72.5 -28.0,-73.0 -27.0,-72.9 -26.3,-72.2 -25.7,-71.4 -25.1,-70.7 -24.5,-69.9 -23.9,-69.2 -23.5,-68.4 -23.0,-67.5 -22.8,-67.1 -22.7,-66.9 -22.4,-66.8 -22.1,-66.7 -21.6,-66.7 -21.0,-66.9 -20.4,-67.1 -19.7,-67.3 -19.3,-67.5 -19.1,-67.8 -19.0,-68.1 -19.0,-68.2 -19.0,-68.8 -19.1,-69.7 -19.2,-70.6 -19.2,-71.6 -19.1,-72.5 -19.0,-73.5 -18.9,-74.5 -18.7,-75.5 -18.0,-76.1 -16.8,-76.4 -15.9,-76.1 -15.3,-75.3 -14.7,-74.5 -14.2,-73.6 -13.8,-72.8 -13.4,-71.9 -13.0,-71.1 -12.7,-70.2 -12.5,-69.7 -12.4,-69.6 -12.2,-69.4 -11.9,-69.2 -11.4,-69.2 -10.8,-69.3 -10.1,-69.4 -9.5,-69.5 -9.0,-69.6 -8.8,-69.9 -8.6,-70.1 -8.6,-70.3 -8.6,-70.8 -8.5,-71.8 -8.4,-72.7 -8.3,-73.6 -8.1,-74.6 -7.9,-75.5 -7.6,-76.5 -7.3,-77.4 -6.5,-77.9 -5.2,-78.0 -4.3,-77.6 -3.9,-76.7 -3.5,-75.8 -3.1,-74.9 -2.8,-74.0 -2.5,-73.1 -2.3,-72.2 -2.1,-71.3 -2.0,-70.8 -1.9,-70.6 -1.8,-70.4 -1.5,-70.2 -1.0,-70.1 -0.3,-70.1 0.3,-70.1 1.0,-70.1 1.5,-70.2 1.8,-70.4 1.9,-70.6 2.0,-70.8 2.1,-71.3 2.3,-72.2 2.5,-73.1 2.8,-74.0 3.1,-74.9 3.5,-75.8 3.9,-76.7 4.3,-77.6 5.2,-78.0 6.5,-77.9 7.3,-77.4 7.6,-76.5 7.9,-75.5 8.1,-74.6 8.3,-73.6 8.4,-72.7 8.5,-71.8 8.6,-70.8 8.6,-70.3 8.6,-70.1 8.8,-69.9 9.0,-69.6 9.5,-69.5 10.1,-69.4 10.8,-69.3 11.4,-69.2 11.9,-69.2 12.2,-69.4 12.4,-69.6 12.5,-69.7 12.7,-70.2 13.0,-71.1 13.4,-71.9 13.8,-72.8 14.2,-73.6 14.7,-74.5 15.3,-75.3 15.9,-76.1 16.8,-76.4 18.0,-76.1 18.7,-75.5 18.9,-74.5 19.0,-73.5 19.1,-72.5 19.2,-71.6 19.2,-70.6 19.1,-69.7 19.0,-68.8 19.0,-68.2 19.0,-68.1 19.1,-67.8 19.3,-67.5 19.7,-67.3 20.4,-67.1 21.0,-66.9 21.6,-66.7 22.1,-66.7 22.4,-66.8 22.7,-66.9 22.8,-67.1 23.0,-67.5 23.5,-68.4 23.9,-69.2 24.5,-69.9 25.1,-70.7 25.7,-71.4 26.3,-72.2 27.0,-72.9 28.0,-73.0 29.2,-72.5 29.8,-71.8 29.8,-70.8 29.8,-69.8 29.7,-68.9 29.6,-67.9 29.5,-67.0 29.3,-66.1 29.1,-65.2 28.9,-64.6 28.9,-64.5 29.0,-64.2 29.2,-63.9 29.5,-63.6 30.1,-63.3 30.7,-63.0 31.3,-62.7 31.8,-62.6 32.1,-62.7 32.4,-62.8 32.5,-62.9 32.8,-63.3 33.4,-64.1 34.0,-64.8 34.6,-65.5 35.3,-66.2 36.0,-66.8 36.8,-67.4 37.6,-68.1 38.5,-68.0 39.7,-67.4 40.1,-66.6 40.0,-65.6 39.8,-64.6 39.6,-63.7 39.4,-62.7 39.1,-61.8 38.8,-61.0 38.4,-60.1 38.2,-59.6 38.2,-59.4 38.2,-59.2 38.3,-58.8 38.7,-58.5 39.2,-58.1 39.8,-57.7 40.3,-57.4 40.7,-57.2 41.1,-57.2 41.4,-57.3 41.5,-57.4 41.9,-57.7 42.6,-58.4 43.3,-59.0 44.0,-59.6 44.8,-60.2 45.6,-60.7 46.4,-61.2 47.3,-61.7 48.2,-61.5 49.3,-60.7 49.6,-59.8 49.3,-58.9 49.0,-58.0 48.7,-57.1 48.3,-56.2 47.9,-55.3 47.5,-54.5 47.0,-53.7 46.7,-53.2 46.6,-53.1 46.6,-52.8 46.7,-52.4 47.0,-52.0 47.4,-51.6 47.9,-51.2 48.4,-50.7 48.8,-50.5 49.2,-50.4 49.5,-50.5 49.6,-50.5 50.1,-50.9 50.8,-51.4 51.6,-51.9 52.4,-52.4 53.3,-52.8 54.1,-53.2 55.0,-53.6 56.0,-54.0 56.9,-53.7 57.8,-52.7 58.0,-51.8 57.6,-50.9 57.1,-50.0 56.6,-49.2 56.2,-48.3 55.6,-47.5 55.1,-46.8 54.4,-46.1 54.1,-45.7 54.0,-45.6 54.0,-45.3 54.0,-44.9 54.2,-44.5 54.6,-44.0 55.0,-43.5 55.4,-42.9 55.8,-42.6 56.2,-42.5 56.4,-42.5 56.6,-42.6 57.1,-42.8 57.9,-43.3 58.7,-43.6 59.6,-44.0 60.5,-44.3 61.5,-44.6 62.4,-44.8 63.4,-45.0 64.2,-44.6 65.0,-43.5 65.1,-42.6 64.5,-41.7 63.9,-40.9 63.3,-40.2 62.7,-39.4 62.1,-38.7 61.4,-38.1 60.7,-37.5 60.3,-37.1 60.2,-37.0 60.1,-36.7 60.1,-36.4 60.2,-35.9 60.5,-35.3 60.9,-34.8 61.2,-34.2 61.5,-33.8 61.9,-33.7 62.1,-33.6 62.3,-33.7 62.8,-33.8 63.7,-34.1 64.6,-34.4 65.5,-34.6 66.5,-34.8 67.4,-34.9 68.4,-35.0 69.4,-35.1 70.2,-34.5 70.7,-33.3 70.7,-32.4 70.0,-31.7 69.3,-30.9 68.6,-30.3 67.9,-29.6 67.2,-29.0 66.4,-28.5 65.6,-28.0 65.2,-27.7 65.0,-27.6 64.9,-27.4 64.8,-27.0 64.9,-26.5 65.1,-25.9 65.4,-25.3 65.6,-24.7 65.9,-24.3 66.2,-24.1 66.5,-24.0 66.6,-24.0 67.2,-24.1 68.1,-24.3 69.0,-24.4 69.9,-24.5 70.9,-24.5 71.9,-24.5 72.8,-24.4 73.8,-24.3 74.5,-23.7 74.9,-22.4 74.7,-21.5 73.9,-20.9 73.2,-20.3 72.4,-19.7 71.6,-19.2 70.7,-18.7 69.9,-18.3 69.1,-17.9 68.6,-17.7 68.4,-17.6 68.3,-17.4 68.1,-17.0 68.1,-16.5 68.3,-15.9 68.4,-15.3 68.6,-14.6 68.8,-14.2 69.1,-14.0 69.3,-13.8 69.5,-13.8 70.0,-13.8 70.9,-13.9 71.9,-13.8 72.8,-13.8 73.8,-13.6 74.7,-13.5 75.7,-13.3 76.6,-13.0 77.2,-12.3 77.4,-11.0 77.1,-10.1 76.2,-9.6 75.4,-9.1 74.5,-8.7 73.6,-8.3 72.7,-8.0 71.9,-7.7 71.0,-7.4 70.4,-7.3 70.3,-7.2 70.1,-7.0 69.9,-6.7 69.8,-6.2 69.9,-5.6Z" fill="#cccccc"/></g><g transform="rotate(240) translate(97,0)"><path d="M69.9,-4.9L70.0,-4.3 70.1,-3.8 70.4,-3.5 70.6,-3.3 70.7,-3.3 71.3,-3.2 72.2,-3.1 73.1,-3.0 74.0,-2.8 75.0,-2.5 75.9,-2.2 76.8,-1.9 77.7,-1.5 78.2,-0.6 78.2,0.6 77.7,1.5 76.8,1.9 75.9,2.2 75.0,2.5 74.0,2.8 73.1,3.0 72.2,3.1 71.3,3.2 70.7,3.3 70.6,3.3 70.4,3.5 70.1,3.8 70.0,4.3 69.9,4.9 69.9,5.6 69.8,6.2 69.9,6.7 70.1,7.0 70.3,7.2 70.4,7.3 71.0,7.4 71.9,7.7 72.7,8.0 73.6,8.3 74.5,8.7 75.4,9.1 76.2,9.6 77.1,10.1 77.4,11.0 77.2,12.3 76.6,13.0 75.7,13.3 74.7,13.5 73.8,13.6 72.8,13.8 71.9,13.8 70.9,13.9 70.0,13.8 69.5,13.8 69.3,13.8 69.1,14.0 68.8,14.2 68.6,14.6 68.4,15.3 68.3,15.9 68.1,16.5 68.1,17.0 68.3,17.4 68.4,17.6 68.6,17.7 69.1,17.9 69.9,18.3 70.7,18.7 71.6,19.2 72.4,19.7 73.2,20.3 73.9,20.9 74.7,21.5 74.9,22.4 74.5,23.7 73.8,24.3 72.8,24.4 71.9,24.5 70.9,24.5 69.9,24.5 69.0,24.4 68.1,24.3 67.2,24.1 66.6,24.0 66.5,24.0 66.2,24.1 65.9,24.3 65.6,24.7 65.4,25.3 65.1,25.9 64.9,26.5 64.8,27.0 64.9,27.4 65.0,27.6 65.2,27.7 65.6,28.0 66.4,28.5 67.2,29.0 67.9,29.6 68.6,30.3 69.3,30.9 70.0,31.7 70.7,32.4 70.7,33.3 70.2,34.5 69.4,35.1 68.4,35.0 67.4,34.9 66.5,34.8 65.5,34.6 64.6,34.4 63.7,34.1 62.8,33.8 62.3,33.7 62.1,33.6 61.9,33.7 61.5,33.8 61.2,34.2 60.9,34.8 60.5,35.3 60.2,35.9 60.1,36.4 60.1,36.7 60.2,37.0 60.3,37.1 60.7,37.5 61.4,38.1 62.1,38.7 62.7,39.4 63.3,40.2 63.9,40.9 64.5,41.7 65.1,42.6 65.0,43.5 64.2,44.6 63.4,45.0 62.4,44.8 61.5,44.6 60.5,44.3 59.6,44.0 58.7,43.6 57.9,43.3 57.1,42.8 56.6,42.6 56.4,42.5 56.2,42.5 55.8,42.6 55.4,42.9 55.0,43.5 54.6,44.0 54.2,44.5 54.0,44.9 54.0,45.3 54.0,45.6 54.1,45.7 54.4,46.1 55.1,46.8 55.6,47.5 56.2,48.3 56.6,49.2 57.1,50.0 57.6,50.9 58.0,51.8 57.8,52.7 56.9,53.7 56.0,54.0 55.0,53.6 54.1,53.2 53.3,52.8 52.4,52.4 51.6,51.9 50.8,51.4 50.1,50.9 49.6,50.5 49.5,50.5 49.2,50.4 48.8,50.5 48.4,50.7 47.9,51.2 47.4,51.6 47.0,52.0 46.7,52.4 46.6,52.8 46.6,53.1 46.7,53.2 47.0,53.7 47.5,54.5 47.9,55.3 48.3,56.2 48.7,57.1 49.0,58.0 49.3,58.9 49.6,59.8 49.3,60.7 48.2,61.5 47.3,61.7 46.4,61.2 45.6,60.7 44.8,60.2 44.0,59.6 43.3,59.0 42.6,58.4 41.9,57.7 41.5,57.4 41.4,57.3 41.1,57.2 40.7,57.2 40.3,57.4 39.8,57.7 39.2,58.1 38.7,58.5 38.3,58.8 38.2,59.2 38.2,59.4 38.2,59.6 38.4,60.1 38.8,61.0 39.1,61.8 39.4,62.7 39.6,63.7 39.8,64.6 40.0,65.6 40.1,66.6 39.7,67.4 38.5,68.0 37.6,68.1 36.8,67.4 36.0,66.8 35.3,66.2 34.6,65.5 34.0,64.8 33.4,64.1 32.8,63.3 32.5,62.9 32.4,62.8 32.1,62.7 31.8,62.6 31.3,62.7 30.7,63.0 30.1,63.3 29.5,63.6 29.2,63.9 29.0,64.2 28.9,64.5 28.9,64.6 29.1,65.2 29.3,66.1 29.5,67.0 29.6,67.9 29.7,68.9 29.8,69.8 29.8,70.8 29.8,71.8 29.2,72.5 28.0,73.0 27.0,72.9 26.3,72.2 25.7,71.4 25.1,70.7 24.5,69.9 23.9,69.2 23.5,68.4 23.0,67.5 22.8,67.1 22.7,66.9 22.4,66.8 22.1,66.7 21.6,66.7 21.0,66.9 20.4,67.1 19.7,67.3 19.3,67.5 19.1,67.8 19.0,68.1 19.0,68.2 19.0,68.8 19.1,69.7 19.2,70.6 19.2,71.6 19.1,72.5 19.0,73.5 18.9,74.5 18.7,75.5 18.0,76.1 16.8,76.4 15.9,76.1 15.3,75.3 14.7,74.5 14.2,73.6 13.8,72.8 13.4,71.9 13.0,71.1 12.7,70.2 12.5,69.7 12.4,69.6 12.2,69.4 11.9,69.2 11.4,69.2 10.8,69.3 10.1,69.4 9.5,69.5 9.0,69.6 8.8,69.9 8.6,70.1 8.6,70.3 8.6,70.8 8.5,71.8 8.4,72.7 8.3,73.6 8.1,74.6 7.9,75.5 7.6,76.5 7.3,77.4 6.5,77.9 5.2,78.0 4.3,77.6 3.9,76.7 3.5,75.8 3.1,74.9 2.8,74.0 2.5,73.1 2.3,72.2 2.1,71.3 2.0,70.8 1.9,70.6 1.8,70.4 1.5,70.2 1.0,70.1 0.3,70.1 -0.3,70.1 -1.0,70.1 -1.5,70.2 -1.8,70.4 -1.9,70.6 -2.0,70.8 -2.1,71.3 -2.3,72.2 -2.5,73.1 -2.8,74.0 -3.1,74.9 -3.5,75.8 -3.9,76.7 -4.3,77.6 -5.2,78.0 -6.5,77.9 -7.3,77.4 -7.6,76.5 -7.9,75.5 -8.1,74.6 -8.3,73.6 -8.4,72.7 -8.5,71.8 -8.6,70.8 -8.6,70.3 -8.6,70.1 -8.8,69.9 -9.0,69.6 -9.5,69.5 -10.1,69.4 -10.8,69.3 -11.4,69.2 -11.9,69.2 -12.2,69.4 -12.4,69.6 -12.5,69.7 -12.7,70.2 -13.0,71.1 -13.4,71.9 -13.8,72.8 -14.2,73.6 -14.7,74.5 -15.3,75.3 -15.9,76.1 -16.8,76.4 -18.0,76.1 -18.7,75.5 -18.9,74.5 -19.0,73.5 -19.1,72.5 -19.2,71.6 -19.2,70.6 -19.1,69.7 -19.0,68.8 -19.0,68.2 -19.0,68.1 -19.1,67.8 -19.3,67.5 -19.7,67.3 -20.4,67.1 -21.0,66.9 -21.6,66.7 -22.1,66.7 -22.4,66.8 -22.7,66.9 -22.8,67.1 -23.0,67.5 -23.5,68.4 -23.9,69.2 -24.5,69.9 -25.1,70.7 -25.7,71.4 -26.3,72.2 -27.0,72.9 -28.0,73.0 -29.2,72.5 -29.8,71.8 -29.8,70.8 -29.8,69.8 -29.7,68.9 -29.6,67.9 -29.5,67.0 -29.3,66.1 -29.1,65.2 -28.9,64.6 -28.9,64.5 -29.0,64.2 -29.2,63.9 -29.5,63.6 -30.1,63.3 -30.7,63.0 -31.3,62.7 -31.8,62.6 -32.1,62.7 -32.4,62.8 -32.5,62.9 -32.8,63.3 -33.4,64.1 -34.0,64.8 -34.6,65.5 -35.3,66.2 -36.0,66.8 -36.8,67.4 -37.6,68.1 -38.5,68.0 -39.7,67.4 -40.1,66.6 -40.0,65.6 -39.8,64.6 -39.6,63.7 -39.4,62.7 -39.1,61.8 -38.8,61.0 -38.4,60.1 -38.2,59.6 -38.2,59.4 -38.2,59.2 -38.3,58.8 -38.7,58.5 -39.2,58.1 -39.8,57.7 -40.3,57.4 -40.7,57.2 -41.1,57.2 -41.4,57.3 -41.5,57.4 -41.9,57.7 -42.6,58.4 -43.3,59.0 -44.0,59.6 -44.8,60.2 -45.6,60.7 -46.4,61.2 -47.3,61.7 -48.2,61.5 -49.3,60.7 -49.6,59.8 -49.3,58.9 -49.0,58.0 -48.7,57.1 -48.3,56.2 -47.9,55.3 -47.5,54.5 -47.0,53.7 -46.7,53.2 -46.6,53.1 -46.6,52.8 -46.7,52.4 -47.0,52.0 -47.4,51.6 -47.9,51.2 -48.4,50.7 -48.8,50.5 -49.2,50.4 -49.5,50.5 -49.6,50.5 -50.1,50.9 -50.8,51.4 -51.6,51.9 -52.4,52.4 -53.3,52.8 -54.1,53.2 -55.0,53.6 -56.0,54.0 -56.9,53.7 -57.8,52.7 -58.0,51.8 -57.6,50.9 -57.1,50.0 -56.6,49.2 -56.2,48.3 -55.6,47.5 -55.1,46.8 -54.4,46.1 -54.1,45.7 -54.0,45.6 -54.0,45.3 -54.0,44.9 -54.2,44.5 -54.6,44.0 -55.0,43.5 -55.4,42.9 -55.8,42.6 -56.2,42.5 -56.4,42.5 -56.6,42.6 -57.1,42.8 -57.9,43.3 -58.7,43.6 -59.6,44.0 -60.5,44.3 -61.5,44.6 -62.4,44.8 -63.4,45.0 -64.2,44.6 -65.0,43.5 -65.1,42.6 -64.5,41.7 -63.9,40.9 -63.3,40.2 -62.7,39.4 -62.1,38.7 -61.4,38.1 -60.7,37.5 -60.3,37.1 -60.2,37.0 -60.1,36.7 -60.1,36.4 -60.2,35.9 -60.5,35.3 -60.9,34.8 -61.2,34.2 -61.5,33.8 -61.9,33.7 -62.1,33.6 -62.3,33.7 -62.8,33.8 -63.7,34.1 -64.6,34.4 -65.5,34.6 -66.5,34.8 -67.4,34.9 -68.4,35.0 -69.4,35.1 -70.2,34.5 -70.7,33.3 -70.7,32.4 -70.0,31.7 -69.3,30.9 -68.6,30.3 -67.9,29.6 -67.2,29.0 -66.4,28.5 -65.6,28.0 -65.2,27.7 -65.0,27.6 -64.9,27.4 -64.8,27.0 -64.9,26.5 -65.1,25.9 -65.4,25.3 -65.6,24.7 -65.9,24.3 -66.2,24.1 -66.5,24.0 -66.6,24.0 -67.2,24.1 -68.1,24.3 -69.0,24.4 -69.9,24.5 -70.9,24.5 -71.9,24.5 -72.8,24.4 -73.8,24.3 -74.5,23.7 -74.9,22.4 -74.7,21.5 -73.9,20.9 -73.2,20.3 -72.4,19.7 -71.6,19.2 -70.7,18.7 -69.9,18.3 -69.1,17.9 -68.6,17.7 -68.4,17.6 -68.3,17.4 -68.1,17.0 -68.1,16.5 -68.3,15.9 -68.4,15.3 -68.6,14.6 -68.8,14.2 -69.1,14.0 -69.3,13.8 -69.5,13.8 -70.0,13.8 -70.9,13.9 -71.9,13.8 -72.8,13.8 -73.8,13.6 -74.7,13.5 -75.7,13.3 -76.6,13.0 -77.2,12.3 -77.4,11.0 -77.1,10.1 -76.2,9.6 -75.4,9.1 -74.5,8.7 -73.6,8.3 -72.7,8.0 -71.9,7.7 -71.0,7.4 -70.4,7.3 -70.3,7.2 -70.1,7.0 -69.9,6.7 -69.8,6.2 -69.9,5.6 -69.9,4.9 -70.0,4.3 -70.1,3.8 -70.4,3.5 -70.6,3.3 -70.7,3.3 -71.3,3.2 -72.2,3.1 -73.1,3.0 -74.0,2.8 -75.0,2.5 -75.9,2.2 -76.8,1.9 -77.7,1.5 -78.2,0.6 -78.2,-0.6 -77.7,-1.5 -76.8,-1.9 -75.9,-2.2 -75.0,-2.5 -74.0,-2.8 -73.1,-3.0 -72.2,-3.1 -71.3,-3.2 -70.7,-3.3 -70.6,-3.3 -70.4,-3.5 -70.1,-3.8 -70.0,-4.3 -69.9,-4.9 -69.9,-5.6 -69.8,-6.2 -69.9,-6.7 -70.1,-7.0 -70.3,-7.2 -70.4,-7.3 -71.0,-7.4 -71.9,-7.7 -72.7,-8.0 -73.6,-8.3 -74.5,-8.7 -75.4,-9.1 -76.2,-9.6 -77.1,-10.1 -77.4,-11.0 -77.2,-12.3 -76.6,-13.0 -75.7,-13.3 -74.7,-13.5 -73.8,-13.6 -72.8,-13.8 -71.9,-13.8 -70.9,-13.9 -70.0,-13.8 -69.5,-13.8 -69.3,-13.8 -69.1,-14.0 -68.8,-14.2 -68.6,-14.6 -68.4,-15.3 -68.3,-15.9 -68.1,-16.5 -68.1,-17.0 -68.3,-17.4 -68.4,-17.6 -68.6,-17.7 -69.1,-17.9 -69.9,-18.3 -70.7,-18.7 -71.6,-19.2 -72.4,-19.7 -73.2,-20.3 -73.9,-20.9 -74.7,-21.5 -74.9,-22.4 -74.5,-23.7 -73.8,-24.3 -72.8,-24.4 -71.9,-24.5 -70.9,-24.5 -69.9,-24.5 -69.0,-24.4 -68.1,-24.3 -67.2,-24.1 -66.6,-24.0 -66.5,-24.0 -66.2,-24.1 -65.9,-24.3 -65.6,-24.7 -65.4,-25.3 -65.1,-25.9 -64.9,-26.5 -64.8,-27.0 -64.9,-27.4 -65.0,-27.6 -65.2,-27.7 -65.6,-28.0 -66.4,-28.5 -67.2,-29.0 -67.9,-29.6 -68.6,-30.3 -69.3,-30.9 -70.0,-31.7 -70.7,-32.4 -70.7,-33.3 -70.2,-34.5 -69.4,-35.1 -68.4,-35.0 -67.4,-34.9 -66.5,-34.8 -65.5,-34.6 -64.6,-34.4 -63.7,-34.1 -62.8,-33.8 -62.3,-33.7 -62.1,-33.6 -61.9,-33.7 -61.5,-33.8 -61.2,-34.2 -60.9,-34.8 -60.5,-35.3 -60.2,-35.9 -60.1,-36.4 -60.1,-36.7 -60.2,-37.0 -60.3,-37.1 -60.7,-37.5 -61.4,-38.1 -62.1,-38.7 -62.7,-39.4 -63.3,-40.2 -63.9,-40.9 -64.5,-41.7 -65.1,-42.6 -65.0,-43.5 -64.2,-44.6 -63.4,-45.0 -62.4,-44.8 -61.5,-44.6 -60.5,-44.3 -59.6,-44.0 -58.7,-43.6 -57.9,-43.3 -57.1,-42.8 -56.6,-42.6 -56.4,-42.5 -56.2,-42.5 -55.8,-42.6 -55.4,-42.9 -55.0,-43.5 -54.6,-44.0 -54.2,-44.5 -54.0,-44.9 -54.0,-45.3 -54.0,-45.6 -54.1,-45.7 -54.4,-46.1 -55.1,-46.8 -55.6,-47.5 -56.2,-48.3 -56.6,-49.2 -57.1,-50.0 -57.6,-50.9 -58.0,-51.8 -57.8,-52.7 -56.9,-53.7 -56.0,-54.0 -55.0,-53.6 -54.1,-53.2 -53.3,-52.8 -52.4,-52.4 -51.6,-51.9 -50.8,-51.4 -50.1,-50.9 -49.6,-50.5 -49.5,-50.5 -49.2,-50.4 -48.8,-50.5 -48.4,-50.7 -47.9,-51.2 -47.4,-51.6 -47.0,-52.0 -46.7,-52.4 -46.6,-52.8 -46.6,-53.1 -46.7,-53.2 -47.0,-53.7 -47.5,-54.5 -47.9,-55.3 -48.3,-56.2 -48.7,-57.1 -49.0,-58.0 -49.3,-58.9 -49.6,-59.8 -49.3,-60.7 -48.2,-61.5 -47.3,-61.7 -46.4,-61.2 -45.6,-60.7 -44.8,-60.2 -44.0,-59.6 -43.3,-59.0 -42.6,-58.4 -41.9,-57.7 -41.5,-57.4 -41.4,-57.3 -41.1,-57.2 -40.7,-57.2 -40.3,-57.4 -39.8,-57.7 -39.2,-58.1 -38.7,-58.5 -38.3,-58.8 -38.2,-59.2 -38.2,-59.4 -38.2,-59.6 -38.4,-60.1 -38.8,-61.0 -39.1,-61.8 -39.4,-62.7 -39.6,-63.7 -39.8,-64.6 -40.0,-65.6 -40.1,-66.6 -39.7,-67.4 -38.5,-68.0 -37.6,-68.1 -36.8,-67.4 -36.0,-66.8 -35.3,-66.2 -34.6,-65.5 -34.0,-64.8 -33.4,-64.1 -32.8,-63.3 -32.5,-62.9 -32.4,-62.8 -32.1,-62.7 -31.8,-62.6 -31.3,-62.7 -30.7,-63.0 -30.1,-63.3 -29.5,-63.6 -29.2,-63.9 -29.0,-64.2 -28.9,-64.5 -28.9,-64.6 -29.1,-65.2 -29.3,-66.1 -29.5,-67.0 -29.6,-67.9 -29.7,-68.9 -29.8,-69.8 -29.8,-70.8 -29.8,-71.8 -29.2,-72.5 -28.0,-73.0 -27.0,-72.9 -26.3,-72.2 -25.7,-71.4 -25.1,-70.7 -24.5,-69.9 -23.9,-69.2 -23.5,-68.4 -23.0,-67.5 -22.8,-67.1 -22.7,-66.9 -22.4,-66.8 -22.1,-66.7 -21.6,-66.7 -21.0,-66.9 -20.4,-67.1 -19.7,-67.3 -19.3,-67.5 -19.1,-67.8 -19.0,-68.1 -19.0,-68.2 -19.0,-68.8 -19.1,-69.7 -19.2,-70.6 -19.2,-71.6 -19.1,-72.5 -19.0,-73.5 -18.9,-74.5 -18.7,-75.5 -18.0,-76.1 -16.8,-76.4 -15.9,-76.1 -15.3,-75.3 -14.7,-74.5 -14.2,-73.6 -13.8,-72.8 -13.4,-71.9 -13.0,-71.1 -12.7,-70.2 -12.5,-69.7 -12.4,-69.6 -12.2,-69.4 -11.9,-69.2 -11.4,-69.2 -10.8,-69.3 -10.1,-69.4 -9.5,-69.5 -9.0,-69.6 -8.8,-69.9 -8.6,-70.1 -8.6,-70.3 -8.6,-70.8 -8.5,-71.8 -8.4,-72.7 -8.3,-73.6 -8.1,-74.6 -7.9,-75.5 -7.6,-76.5 -7.3,-77.4 -6.5,-77.9 -5.2,-78.0 -4.3,-77.6 -3.9,-76.7 -3.5,-75.8 -3.1,-74.9 -2.8,-74.0 -2.5,-73.1 -2.3,-72.2 -2.1,-71.3 -2.0,-70.8 -1.9,-70.6 -1.8,-70.4 -1.5,-70.2 -1.0,-70.1 -0.3,-70.1 0.3,-70.1 1.0,-70.1 1.5,-70.2 1.8,-70.4 1.9,-70.6 2.0,-70.8 2.1,-71.3 2.3,-72.2 2.5,-73.1 2.8,-74.0 3.1,-74.9 3.5,-75.8 3.9,-76.7 4.3,-77.6 5.2,-78.0 6.5,-77.9 7.3,-77.4 7.6,-76.5 7.9,-75.5 8.1,-74.6 8.3,-73.6 8.4,-72.7 8.5,-71.8 8.6,-70.8 8.6,-70.3 8.6,-70.1 8.8,-69.9 9.0,-69.6 9.5,-69.5 10.1,-69.4 10.8,-69.3 11.4,-69.2 11.9,-69.2 12.2,-69.4 12.4,-69.6 12.5,-69.7 12.7,-70.2 13.0,-71.1 13.4,-71.9 13.8,-72.8 14.2,-73.6 14.7,-74.5 15.3,-75.3 15.9,-76.1 16.8,-76.4 18.0,-76.1 18.7,-75.5 18.9,-74.5 19.0,-73.5 19.1,-72.5 19.2,-71.6 19.2,-70.6 19.1,-69.7 19.0,-68.8 19.0,-68.2 19.0,-68.1 19.1,-67.8 19.3,-67.5 19.7,-67.3 20.4,-67.1 21.0,-66.9 21.6,-66.7 22.1,-66.7 22.4,-66.8 22.7,-66.9 22.8,-67.1 23.0,-67.5 23.5,-68.4 23.9,-69.2 24.5,-69.9 25.1,-70.7 25.7,-71.4 26.3,-72.2 27.0,-72.9 28.0,-73.0 29.2,-72.5 29.8,-71.8 29.8,-70.8 29.8,-69.8 29.7,-68.9 29.6,-67.9 29.5,-67.0 29.3,-66.1 29.1,-65.2 28.9,-64.6 28.9,-64.5 29.0,-64.2 29.2,-63.9 29.5,-63.6 30.1,-63.3 30.7,-63.0 31.3,-62.7 31.8,-62.6 32.1,-62.7 32.4,-62.8 32.5,-62.9 32.8,-63.3 33.4,-64.1 34.0,-64.8 34.6,-65.5 35.3,-66.2 36.0,-66.8 36.8,-67.4 37.6,-68.1 38.5,-68.0 39.7,-67.4 40.1,-66.6 40.0,-65.6 39.8,-64.6 39.6,-63.7 39.4,-62.7 39.1,-61.8 38.8,-61.0 38.4,-60.1 38.2,-59.6 38.2,-59.4 38.2,-59.2 38.3,-58.8 38.7,-58.5 39.2,-58.1 39.8,-57.7 40.3,-57.4 40.7,-57.2 41.1,-57.2 41.4,-57.3 41.5,-57.4 41.9,-57.7 42.6,-58.4 43.3,-59.0 44.0,-59.6 44.8,-60.2 45.6,-60.7 46.4,-61.2 47.3,-61.7 48.2,-61.5 49.3,-60.7 49.6,-59.8 49.3,-58.9 49.0,-58.0 48.7,-57.1 48.3,-56.2 47.9,-55.3 47.5,-54.5 47.0,-53.7 46.7,-53.2 46.6,-53.1 46.6,-52.8 46.7,-52.4 47.0,-52.0 47.4,-51.6 47.9,-51.2 48.4,-50.7 48.8,-50.5 49.2,-50.4 49.5,-50.5 49.6,-50.5 50.1,-50.9 50.8,-51.4 51.6,-51.9 52.4,-52.4 53.3,-52.8 54.1,-53.2 55.0,-53.6 56.0,-54.0 56.9,-53.7 57.8,-52.7 58.0,-51.8 57.6,-50.9 57.1,-50.0 56.6,-49.2 56.2,-48.3 55.6,-47.5 55.1,-46.8 54.4,-46.1 54.1,-45.7 54.0,-45.6 54.0,-45.3 54.0,-44.9 54.2,-44.5 54.6,-44.0 55.0,-43.5 55.4,-42.9 55.8,-42.6 56.2,-42.5 56.4,-42.5 56.6,-42.6 57.1,-42.8 57.9,-43.3 58.7,-43.6 59.6,-44.0 60.5,-44.3 61.5,-44.6 62.4,-44.8 63.4,-45.0 64.2,-44.6 65.0,-43.5 65.1,-42.6 64.5,-41.7 63.9,-40.9 63.3,-40.2 62.7,-39.4 62.1,-38.7 61.4,-38.1 60.7,-37.5 60.3,-37.1 60.2,-37.0 60.1,-36.7 60.1,-36.4 60.2,-35.9 60.5,-35.3 60.9,-34.8 61.2,-34.2 61.5,-33.8 61.9,-33.7 62.1,-33.6 62.3,-33.7 62.8,-33.8 63.7,-34.1 64.6,-34.4 65.5,-34.6 66.5,-34.8 67.4,-34.9 68.4,-35.0 69.4,-35.1 70.2,-34.5 70.7,-33.3 70.7,-32.4 70.0,-31.7 69.3,-30.9 68.6,-30.3 67.9,-29.6 67.2,-29.0 66.4,-28.5 65.6,-28.0 65.2,-27.7 65.0,-27.6 64.9,-27.4 64.8,-27.0 64.9,-26.5 65.1,-25.9 65.4,-25.3 65.6,-24.7 65.9,-24.3 66.2,-24.1 66.5,-24.0 66.6,-24.0 67.2,-24.1 68.1,-24.3 69.0,-24.4 69.9,-24.5 70.9,-24.5 71.9,-24.5 72.8,-24.4 73.8,-24.3 74.5,-23.7 74.9,-22.4 74.7,-21.5 73.9,-20.9 73.2,-20.3 72.4,-19.7 71.6,-19.2 70.7,-18.7 69.9,-18.3 69.1,-17.9 68.6,-17.7 68.4,-17.6 68.3,-17.4 68.1,-17.0 68.1,-16.5 68.3,-15.9 68.4,-15.3 68.6,-14.6 68.8,-14.2 69.1,-14.0 69.3,-13.8 69.5,-13.8 70.0,-13.8 70.9,-13.9 71.9,-13.8 72.8,-13.8 73.8,-13.6 74.7,-13.5 75.7,-13.3 76.6,-13.0 77.2,-12.3 77.4,-11.0 77.1,-10.1 76.2,-9.6 75.4,-9.1 74.5,-8.7 73.6,-8.3 72.7,-8.0 71.9,-7.7 71.0,-7.4 70.4,-7.3 70.3,-7.2 70.1,-7.0 69.9,-6.7 69.8,-6.2 69.9,-5.6Z" fill="#cccccc"/></g><path d="M17.9,0.3L17.9,0.9 18.2,1.4 18.9,1.8 19.4,2.0 19.9,2.1 20.4,2.3 21.0,2.4 21.5,2.7 22.1,3.0 22.6,3.4 23.1,3.8 23.6,4.2 24.1,4.7 24.6,5.2 25.1,5.7 25.2,6.4 25.0,7.1 24.6,7.6 23.9,7.8 23.2,8.0 22.6,8.2 21.9,8.3 21.2,8.4 20.6,8.4 20.0,8.4 19.4,8.4 18.8,8.3 18.3,8.1 17.8,8.0 17.2,7.9 16.5,7.9 15.9,8.1 15.6,8.7 15.3,9.2 15.0,9.7 15.0,10.3 15.5,11.0 15.8,11.5 16.2,11.8 16.6,12.2 16.9,12.6 17.3,13.1 17.6,13.6 17.9,14.2 18.1,14.8 18.3,15.5 18.5,16.1 18.7,16.8 18.8,17.5 18.6,18.1 18.1,18.6 17.5,18.8 16.8,18.7 16.1,18.5 15.5,18.3 14.8,18.1 14.2,17.9 13.6,17.6 13.1,17.3 12.6,16.9 12.2,16.6 11.8,16.2 11.5,15.8 11.0,15.5 10.3,15.0 9.7,15.0 9.2,15.3 8.7,15.6 8.1,15.9 7.9,16.5 7.9,17.2 8.0,17.8 8.1,18.3 8.3,18.8 8.4,19.4 8.4,20.0 8.4,20.6 8.4,21.2 8.3,21.9 8.2,22.6 8.0,23.2 7.8,23.9 7.6,24.6 7.1,25.0 6.4,25.2 5.7,25.1 5.2,24.6 4.7,24.1 4.2,23.6 3.8,23.1 3.4,22.6 3.0,22.1 2.7,21.5 2.4,21.0 2.3,20.4 2.1,19.9 2.0,19.4 1.8,18.9 1.4,18.2 0.9,17.9 0.3,17.9 -0.3,17.9 -0.9,17.9 -1.4,18.2 -1.8,18.9 -2.0,19.4 -2.1,19.9 -2.3,20.4 -2.4,21.0 -2.7,21.5 -3.0,22.1 -3.4,22.6 -3.8,23.1 -4.2,23.6 -4.7,24.1 -5.2,24.6 -5.7,25.1 -6.4,25.2 -7.1,25.0 -7.6,24.6 -7.8,23.9 -8.0,23.2 -8.2,22.6 -8.3,21.9 -8.4,21.2 -8.4,20.6 -8.4,20.0 -8.4,19.4 -8.3,18.8 -8.1,18.3 -8.0,17.8 -7.9,17.2 -7.9,16.5 -8.1,15.9 -8.7,15.6 -9.2,15.3 -9.7,15.0 -10.3,15.0 -11.0,15.5 -11.5,15.8 -11.8,16.2 -12.2,16.6 -12.6,16.9 -13.1,17.3 -13.6,17.6 -14.2,17.9 -14.8,18.1 -15.5,18.3 -16.1,18.5 -16.8,18.7 -17.5,18.8 -18.1,18.6 -18.6,18.1 -18.8,17.5 -18.7,16.8 -18.5,16.1 -18.3,15.5 -18.1,14.8 -17.9,14.2 -17.6,13.6 -17.3,13.1 -16.9,12.6 -16.6,12.2 -16.2,11.8 -15.8,11.5 -15.5,11.0 -15.0,10.3 -15.0,9.7 -15.3,9.2 -15.6,8.7 -15.9,8.1 -16.5,7.9 -17.2,7.9 -17.8,8.0 -18.3,8.1 -18.8,8.3 -19.4,8.4 -20.0,8.4 -20.6,8.4 -21.2,8.4 -21.9,8.3 -22.6,8.2 -23.2,8.0 -23.9,7.8 -24.6,7.6 -25.0,7.1 -25.2,6.4 -25.1,5.7 -24.6,5.2 -24.1,4.7 -23.6,4.2 -23.1,3.8 -22.6,3.4 -22.1,3.0 -21.5,2.7 -21.0,2.4 -20.4,2.3 -19.9,2.1 -19.4,2.0 -18.9,1.8 -18.2,1.4 -17.9,0.9 -17.9,0.3 -17.9,-0.3 -17.9,-0.9 -18.2,-1.4 -18.9,-1.8 -19.4,-2.0 -19.9,-2.1 -20.4,-2.3 -21.0,-2.4 -21.5,-2.7 -22.1,-3.0 -22.6,-3.4 -23.1,-3.8 -23.6,-4.2 -24.1,-4.7 -24.6,-5.2 -25.1,-5.7 -25.2,-6.4 -25.0,-7.1 -24.6,-7.6 -23.9,-7.8 -23.2,-8.0 -22.6,-8.2 -21.9,-8.3 -21.2,-8.4 -20.6,-8.4 -20.0,-8.4 -19.4,-8.4 -18.8,-8.3 -18.3,-8.1 -17.8,-8.0 -17.2,-7.9 -16.5,-7.9 -15.9,-8.1 -15.6,-8.7 -15.3,-9.2 -15.0,-9.7 -15.0,-10.3 -15.5,-11.0 -15.8,-11.5 -16.2,-11.8 -16.6,-12.2 -16.9,-12.6 -17.3,-13.1 -17.6,-13.6 -17.9,-14.2 -18.1,-14.8 -18.3,-15.5 -18.5,-16.1 -18.7,-16.8 -18.8,-17.5 -18.6,-18.1 -18.1,-18.6 -17.5,-18.8 -16.8,-18.7 -16.1,-18.5 -15.5,-18.3 -14.8,-18.1 -14.2,-17.9 -13.6,-17.6 -13.1,-17.3 -12.6,-16.9 -12.2,-16.6 -11.8,-16.2 -11.5,-15.8 -11.0,-15.5 -10.3,-15.0 -9.7,-15.0 -9.2,-15.3 -8.7,-15.6 -8.1,-15.9 -7.9,-16.5 -7.9,-17.2 -8.0,-17.8 -8.1,-18.3 -8.3,-18.8 -8.4,-19.4 -8.4,-20.0 -8.4,-20.6 -8.4,-21.2 -8.3,-21.9 -8.2,-22.6 -8.0,-23.2 -7.8,-23.9 -7.6,-24.6 -7.1,-25.0 -6.4,-25.2 -5.7,-25.1 -5.2,-24.6 -4.7,-24.1 -4.2,-23.6 -3.8,-23.1 -3.4,-22.6 -3.0,-22.1 -2.7,-21.5 -2.4,-21.0 -2.3,-20.4 -2.1,-19.9 -2.0,-19.4 -1.8,-18.9 -1.4,-18.2 -0.9,-17.9 -0.3,-17.9 0.3,-17.9 0.9,-17.9 1.4,-18.2 1.8,-18.9 2.0,-19.4 2.1,-19.9 2.3,-20.4 2.4,-21.0 2.7,-21.5 3.0,-22.1 3.4,-22.6 3.8,-23.1 4.2,-23.6 4.7,-24.1 5.2,-24.6 5.7,-25.1 6.4,-25.2 7.1,-25.0 7.6,-24.6 7.8,-23.9 8.0,-23.2 8.2,-22.6 8.3,-21.9 8.4,-21.2 8.4,-20.6 8.4,-20.0 8.4,-19.4 8.3,-18.8 8.1,-18.3 8.0,-17.8 7.9,-17.2 7.9,-16.5 8.1,-15.9 8.7,-15.6 9.2,-15.3 9.7,-15.0 10.3,-15.0 11.0,-15.5 11.5,-15.8 11.8,-16.2 12.2,-16.6 12.6,-16.9 13.1,-17.3 13.6,-17.6 14.2,-17.9 14.8,-18.1 15.5,-18.3 16.1,-18.5 16.8,-18.7 17.5,-18.8 18.1,-18.6 18.6,-18.1 18.8,-17.5 18.7,-16.8 18.5,-16.1 18.3,-15.5 18.1,-14.8 17.9,-14.2 17.6,-13.6 17.3,-13.1 16.9,-12.6 16.6,-12.2 16.2,-11.8 15.8,-11.5 15.5,-11.0 15.0,-10.3 15.0,-9.7 15.3,-9.2 15.6,-8.7 15.9,-8.1 16.5,-7.9 17.2,-7.9 17.8,-8.0 18.3,-8.1 18.8,-8.3 19.4,-8.4 20.0,-8.4 20.6,-8.4 21.2,-8.4 21.9,-8.3 22.6,-8.2 23.2,-8.0 23.9,-7.8 24.6,-7.6 25.0,-7.1 25.2,-6.4 25.1,-5.7 24.6,-5.2 24.1,-4.7 23.6,-4.2 23.1,-3.8 22.6,-3.4 22.1,-3.0 21.5,-2.7 21.0,-2.4 20.4,-2.3 19.9,-2.1 19.4,-2.0 18.9,-1.8 18.2,-1.4 17.9,-0.9 17.9,-0.3Z" fill="#ccd3de"/></g><path d="M299.0 194.5h11M304.5 189.0v11" stroke="#000" stroke-width="1" shape-rendering="crispEdges"/><path d="M396.0 194.5h11M401.5 189.0v11" stroke="#000" stroke-width="1" shape-rendering="crispEdges"/><path d="M250.0 109.5h11M255.5 104.0v11" stroke="#000" stroke-width="1" shape-rendering="crispEdges"/><path d="M250.0 278.5h11M255.5 273.0v11" stroke="#000" stroke-width="1" shape-rendering="crispEdges"/></svg>
<div class="t " style="left:460px;top:535px;letter-spacing:0.19px;">Zahndickenabmaß [µm]</div>
<div class="t " style="left:605px;top:535px;letter-spacing:0.14px;word-spacing:1px">Kopfkreisabmaß [µm]</div>
<div class="t " style="right:40px;top:531px;letter-spacing:0.13px;"><span style="letter-spacing:.42px">Achsabstandsabmaß</span> A<span style="font-size:9.500px;position:relative;top:6px;font-weight:bold">a</span> [µm]</div>
<div class="t " style="left:380px;top:555px;letter-spacing:0.26px;">Sonne</div>
<div class="a g-khaki" style="left:460px;top:551px;width:19px;height:19px;border:1px solid #8f9aa8;box-shadow:0 1px 0 #c6c3ab,1px 0 0 #c9ccc4"></div>
<svg class="a" style="left:460px;top:551px" width="19" height="21" viewBox="0 0 19 21"><path d="M13.300 5.800L6.800 10.800L13.300 15.800" fill="none" stroke="#939391" stroke-width="2.900" stroke-linejoin="miter"/><path d="M13.300 5.800L6.800 10.800L13.300 15.800" fill="none" stroke="#dcdcda" stroke-width="1.500" stroke-linejoin="miter"/></svg>
<div class="a g-khaki" style="left:480px;top:551px;width:19px;height:19px;border:1px solid #8f9aa8;box-shadow:0 1px 0 #c6c3ab,1px 0 0 #c9ccc4"></div>
<div class="a" style="left:485px;top:560px;width:11px;height:2px;background:#8e8e8c"></div>
<div class="a" style="left:487px;top:562px;width:10px;height:1px;background:#fbfbf8"></div>
<div class="a g-khaki" style="left:500px;top:551px;width:19px;height:19px;border:1px solid #8f9aa8;box-shadow:0 1px 0 #c6c3ab,1px 0 0 #c9ccc4"></div>
<svg class="a" style="left:500px;top:551px" width="19" height="21" viewBox="0 0 19 21"><path d="M5.700 5.800L12.200 10.800L5.700 15.800" fill="none" stroke="#939391" stroke-width="2.900" stroke-linejoin="miter"/><path d="M5.700 5.800L12.200 10.800L5.700 15.800" fill="none" stroke="#dcdcda" stroke-width="1.500" stroke-linejoin="miter"/></svg>
<div class="fld" style="left:525px;top:551px;width:60px;height:20px;letter-spacing:0.13px">-90.0</div>
<div class="a g-khaki" style="left:605px;top:551px;width:19px;height:19px;border:1px solid #8f9aa8;box-shadow:0 1px 0 #c6c3ab,1px 0 0 #c9ccc4"></div>
<svg class="a" style="left:605px;top:551px" width="19" height="21" viewBox="0 0 19 21"><path d="M13.300 5.800L6.800 10.800L13.300 15.800" fill="none" stroke="#939391" stroke-width="2.900" stroke-linejoin="miter"/><path d="M13.300 5.800L6.800 10.800L13.300 15.800" fill="none" stroke="#dcdcda" stroke-width="1.500" stroke-linejoin="miter"/></svg>
<div class="a g-khaki" style="left:625px;top:551px;width:19px;height:19px;border:1px solid #8f9aa8;box-shadow:0 1px 0 #c6c3ab,1px 0 0 #c9ccc4"></div>
<div class="a" style="left:630px;top:560px;width:11px;height:2px;background:#8e8e8c"></div>
<div class="a" style="left:632px;top:562px;width:10px;height:1px;background:#fbfbf8"></div>
<div class="a g-khaki" style="left:645px;top:551px;width:19px;height:19px;border:1px solid #8f9aa8;box-shadow:0 1px 0 #c6c3ab,1px 0 0 #c9ccc4"></div>
<svg class="a" style="left:645px;top:551px" width="19" height="21" viewBox="0 0 19 21"><path d="M5.700 5.800L12.200 10.800L5.700 15.800" fill="none" stroke="#939391" stroke-width="2.900" stroke-linejoin="miter"/><path d="M5.700 5.800L12.200 10.800L5.700 15.800" fill="none" stroke="#dcdcda" stroke-width="1.500" stroke-linejoin="miter"/></svg>
<div class="fld" style="left:670px;top:551px;width:60px;height:20px;letter-spacing:0.11px">0.0</div>
<div class="t " style="left:380px;top:580px;letter-spacing:0.16px;">Planet</div>
<div class="a g-khaki" style="left:460px;top:576px;width:19px;height:19px;border:1px solid #8f9aa8;box-shadow:0 1px 0 #c6c3ab,1px 0 0 #c9ccc4"></div>
<svg class="a" style="left:460px;top:576px" width="19" height="21" viewBox="0 0 19 21"><path d="M13.300 5.800L6.800 10.800L13.300 15.800" fill="none" stroke="#939391" stroke-width="2.900" stroke-linejoin="miter"/><path d="M13.300 5.800L6.800 10.800L13.300 15.800" fill="none" stroke="#dcdcda" stroke-width="1.500" stroke-linejoin="miter"/></svg>
<div class="a g-khaki" style="left:480px;top:576px;width:19px;height:19px;border:1px solid #8f9aa8;box-shadow:0 1px 0 #c6c3ab,1px 0 0 #c9ccc4"></div>
<div class="a" style="left:485px;top:585px;width:11px;height:2px;background:#8e8e8c"></div>
<div class="a" style="left:487px;top:587px;width:10px;height:1px;background:#fbfbf8"></div>
<div class="a g-khaki" style="left:500px;top:576px;width:19px;height:19px;border:1px solid #8f9aa8;box-shadow:0 1px 0 #c6c3ab,1px 0 0 #c9ccc4"></div>
<svg class="a" style="left:500px;top:576px" width="19" height="21" viewBox="0 0 19 21"><path d="M5.700 5.800L12.200 10.800L5.700 15.800" fill="none" stroke="#939391" stroke-width="2.900" stroke-linejoin="miter"/><path d="M5.700 5.800L12.200 10.800L5.700 15.800" fill="none" stroke="#dcdcda" stroke-width="1.500" stroke-linejoin="miter"/></svg>
<div class="fld" style="left:525px;top:576px;width:60px;height:20px;letter-spacing:0.16px">-120.0</div>
<div class="a g-khaki" style="left:605px;top:576px;width:19px;height:19px;border:1px solid #8f9aa8;box-shadow:0 1px 0 #c6c3ab,1px 0 0 #c9ccc4"></div>
<svg class="a" style="left:605px;top:576px" width="19" height="21" viewBox="0 0 19 21"><path d="M13.300 5.800L6.800 10.800L13.300 15.800" fill="none" stroke="#939391" stroke-width="2.900" stroke-linejoin="miter"/><path d="M13.300 5.800L6.800 10.800L13.300 15.800" fill="none" stroke="#dcdcda" stroke-width="1.500" stroke-linejoin="miter"/></svg>
<div class="a g-khaki" style="left:625px;top:576px;width:19px;height:19px;border:1px solid #8f9aa8;box-shadow:0 1px 0 #c6c3ab,1px 0 0 #c9ccc4"></div>
<div class="a" style="left:630px;top:585px;width:11px;height:2px;background:#8e8e8c"></div>
<div class="a" style="left:632px;top:587px;width:10px;height:1px;background:#fbfbf8"></div>
<div class="a g-khaki" style="left:645px;top:576px;width:19px;height:19px;border:1px solid #8f9aa8;box-shadow:0 1px 0 #c6c3ab,1px 0 0 #c9ccc4"></div>
<svg class="a" style="left:645px;top:576px" width="19" height="21" viewBox="0 0 19 21"><path d="M5.700 5.800L12.200 10.800L5.700 15.800" fill="none" stroke="#939391" stroke-width="2.900" stroke-linejoin="miter"/><path d="M5.700 5.800L12.200 10.800L5.700 15.800" fill="none" stroke="#dcdcda" stroke-width="1.500" stroke-linejoin="miter"/></svg>
<div class="fld" style="left:670px;top:576px;width:60px;height:20px;letter-spacing:0.11px">0.0</div>
<div class="t " style="left:380px;top:605px;letter-spacing:0.28px;">Hohlrad</div>
<div class="a g-khaki" style="left:460px;top:601px;width:19px;height:19px;border:1px solid #8f9aa8;box-shadow:0 1px 0 #c6c3ab,1px 0 0 #c9ccc4"></div>
<svg class="a" style="left:460px;top:601px" width="19" height="21" viewBox="0 0 19 21"><path d="M13.300 5.800L6.800 10.800L13.300 15.800" fill="none" stroke="#939391" stroke-width="2.900" stroke-linejoin="miter"/><path d="M13.300 5.800L6.800 10.800L13.300 15.800" fill="none" stroke="#dcdcda" stroke-width="1.500" stroke-linejoin="miter"/></svg>
<div class="a g-khaki" style="left:480px;top:601px;width:19px;height:19px;border:1px solid #8f9aa8;box-shadow:0 1px 0 #c6c3ab,1px 0 0 #c9ccc4"></div>
<div class="a" style="left:485px;top:610px;width:11px;height:2px;background:#8e8e8c"></div>
<div class="a" style="left:487px;top:612px;width:10px;height:1px;background:#fbfbf8"></div>
<div class="a g-khaki" style="left:500px;top:601px;width:19px;height:19px;border:1px solid #8f9aa8;box-shadow:0 1px 0 #c6c3ab,1px 0 0 #c9ccc4"></div>
<svg class="a" style="left:500px;top:601px" width="19" height="21" viewBox="0 0 19 21"><path d="M5.700 5.800L12.200 10.800L5.700 15.800" fill="none" stroke="#939391" stroke-width="2.900" stroke-linejoin="miter"/><path d="M5.700 5.800L12.200 10.800L5.700 15.800" fill="none" stroke="#dcdcda" stroke-width="1.500" stroke-linejoin="miter"/></svg>
<div class="fld" style="left:525px;top:601px;width:60px;height:20px;letter-spacing:0.16px">-210.0</div>
<div class="a g-khaki" style="left:605px;top:601px;width:19px;height:19px;border:1px solid #8f9aa8;box-shadow:0 1px 0 #c6c3ab,1px 0 0 #c9ccc4"></div>
<svg class="a" style="left:605px;top:601px" width="19" height="21" viewBox="0 0 19 21"><path d="M13.300 5.800L6.800 10.800L13.300 15.800" fill="none" stroke="#939391" stroke-width="2.900" stroke-linejoin="miter"/><path d="M13.300 5.800L6.800 10.800L13.300 15.800" fill="none" stroke="#dcdcda" stroke-width="1.500" stroke-linejoin="miter"/></svg>
<div class="a g-khaki" style="left:625px;top:601px;width:19px;height:19px;border:1px solid #8f9aa8;box-shadow:0 1px 0 #c6c3ab,1px 0 0 #c9ccc4"></div>
<div class="a" style="left:630px;top:610px;width:11px;height:2px;background:#8e8e8c"></div>
<div class="a" style="left:632px;top:612px;width:10px;height:1px;background:#fbfbf8"></div>
<div class="a g-khaki" style="left:645px;top:601px;width:19px;height:19px;border:1px solid #8f9aa8;box-shadow:0 1px 0 #c6c3ab,1px 0 0 #c9ccc4"></div>
<svg class="a" style="left:645px;top:601px" width="19" height="21" viewBox="0 0 19 21"><path d="M5.700 5.800L12.200 10.800L5.700 15.800" fill="none" stroke="#939391" stroke-width="2.900" stroke-linejoin="miter"/><path d="M5.700 5.800L12.200 10.800L5.700 15.800" fill="none" stroke="#dcdcda" stroke-width="1.500" stroke-linejoin="miter"/></svg>
<div class="fld" style="left:670px;top:601px;width:60px;height:20px;letter-spacing:0.11px">0.0</div>
<div class="t " style="left:760px;top:555px;letter-spacing:0.12px;">Sonne - Planet</div>
<div class="a g-khaki" style="left:865px;top:551px;width:19px;height:19px;border:1px solid #8f9aa8;box-shadow:0 1px 0 #c6c3ab,1px 0 0 #c9ccc4"></div>
<svg class="a" style="left:865px;top:551px" width="19" height="21" viewBox="0 0 19 21"><path d="M13.300 5.800L6.800 10.800L13.300 15.800" fill="none" stroke="#939391" stroke-width="2.900" stroke-linejoin="miter"/><path d="M13.300 5.800L6.800 10.800L13.300 15.800" fill="none" stroke="#dcdcda" stroke-width="1.500" stroke-linejoin="miter"/></svg>
<div class="a g-khaki" style="left:885px;top:551px;width:19px;height:19px;border:1px solid #8f9aa8;box-shadow:0 1px 0 #c6c3ab,1px 0 0 #c9ccc4"></div>
<div class="a" style="left:890px;top:560px;width:11px;height:2px;background:#8e8e8c"></div>
<div class="a" style="left:892px;top:562px;width:10px;height:1px;background:#fbfbf8"></div>
<div class="a g-khaki" style="left:905px;top:551px;width:19px;height:19px;border:1px solid #8f9aa8;box-shadow:0 1px 0 #c6c3ab,1px 0 0 #c9ccc4"></div>
<svg class="a" style="left:905px;top:551px" width="19" height="21" viewBox="0 0 19 21"><path d="M5.700 5.800L12.200 10.800L5.700 15.800" fill="none" stroke="#939391" stroke-width="2.900" stroke-linejoin="miter"/><path d="M5.700 5.800L12.200 10.800L5.700 15.800" fill="none" stroke="#dcdcda" stroke-width="1.500" stroke-linejoin="miter"/></svg>
<div class="fld" style="left:930px;top:551px;width:60px;height:20px;letter-spacing:0.11px">0.0</div>
<div class="t " style="left:760px;top:580px;letter-spacing:0.14px;">Planet - Hohlrad</div>
<div class="a g-khaki" style="left:865px;top:576px;width:19px;height:19px;border:1px solid #8f9aa8;box-shadow:0 1px 0 #c6c3ab,1px 0 0 #c9ccc4"></div>
<svg class="a" style="left:865px;top:576px" width="19" height="21" viewBox="0 0 19 21"><path d="M13.300 5.800L6.800 10.800L13.300 15.800" fill="none" stroke="#939391" stroke-width="2.900" stroke-linejoin="miter"/><path d="M13.300 5.800L6.800 10.800L13.300 15.800" fill="none" stroke="#dcdcda" stroke-width="1.500" stroke-linejoin="miter"/></svg>
<div class="a g-khaki" style="left:885px;top:576px;width:19px;height:19px;border:1px solid #8f9aa8;box-shadow:0 1px 0 #c6c3ab,1px 0 0 #c9ccc4"></div>
<div class="a" style="left:890px;top:585px;width:11px;height:2px;background:#8e8e8c"></div>
<div class="a" style="left:892px;top:587px;width:10px;height:1px;background:#fbfbf8"></div>
<div class="a g-khaki" style="left:905px;top:576px;width:19px;height:19px;border:1px solid #8f9aa8;box-shadow:0 1px 0 #c6c3ab,1px 0 0 #c9ccc4"></div>
<svg class="a" style="left:905px;top:576px" width="19" height="21" viewBox="0 0 19 21"><path d="M5.700 5.800L12.200 10.800L5.700 15.800" fill="none" stroke="#939391" stroke-width="2.900" stroke-linejoin="miter"/><path d="M5.700 5.800L12.200 10.800L5.700 15.800" fill="none" stroke="#dcdcda" stroke-width="1.500" stroke-linejoin="miter"/></svg>
<div class="fld" style="left:930px;top:576px;width:60px;height:20px;letter-spacing:0.11px">0.0</div>
<div class="t " style="left:380px;top:640px;letter-spacing:0.17px;">Darstellung der Zahnform mit Bearbeitungszugabe</div>
<div class="cbd" style="left:384px;top:665px"></div>
<div class="t " style="left:401px;top:665px;letter-spacing:0.26px;color:#747474">Sonne</div>
<div class="cbd" style="left:484px;top:665px"></div>
<div class="t " style="left:501px;top:665px;letter-spacing:0.16px;color:#747474">Planet</div>
<div class="cbd" style="left:584px;top:665px"></div>
<div class="t " style="left:601px;top:665px;letter-spacing:0.28px;color:#747474">Hohlrad</div>
<svg class="a" style="left:190px;top:255px" width="200" height="65" viewBox="190 255 200 65"><g fill="none" stroke="#ff0a0a" stroke-linecap="round" stroke-linejoin="round"><path d="M200.200 266.400C205 266.600 211 266 217 265.600C240 264.900 270 265.400 300 265.200C330 265 355 265.300 375.500 265.700" stroke-width="2.300"/><path d="M216 267.300C235 267.700 262 267.200 290 267.400C320 267.700 350 267.300 376 267.600" stroke-width="1.900"/><path d="M376.300 266C377.300 274 375.800 283 376.600 292C377 299 376.200 305 376.900 311.300" stroke-width="1.700"/><path d="M200.300 266.400C201.300 273 201 279 200 286C199.600 293 200.800 301 200.600 307.300C215 308 250 307.400 290 307.800C320 308.100 350 307.600 374.500 307.900" stroke-width="2.400"/><path d="M217 310.400C240 311 275 310.500 310 310.900C335 311.200 360 310.900 377 311.400" stroke-width="1.800"/><path d="M230 309.200C260 309.400 300 309.200 345 309.500" stroke-width="1" stroke-dasharray="7 4 12 5 4 6" opacity=".75"/></g></svg>
</div>
</body></html>
